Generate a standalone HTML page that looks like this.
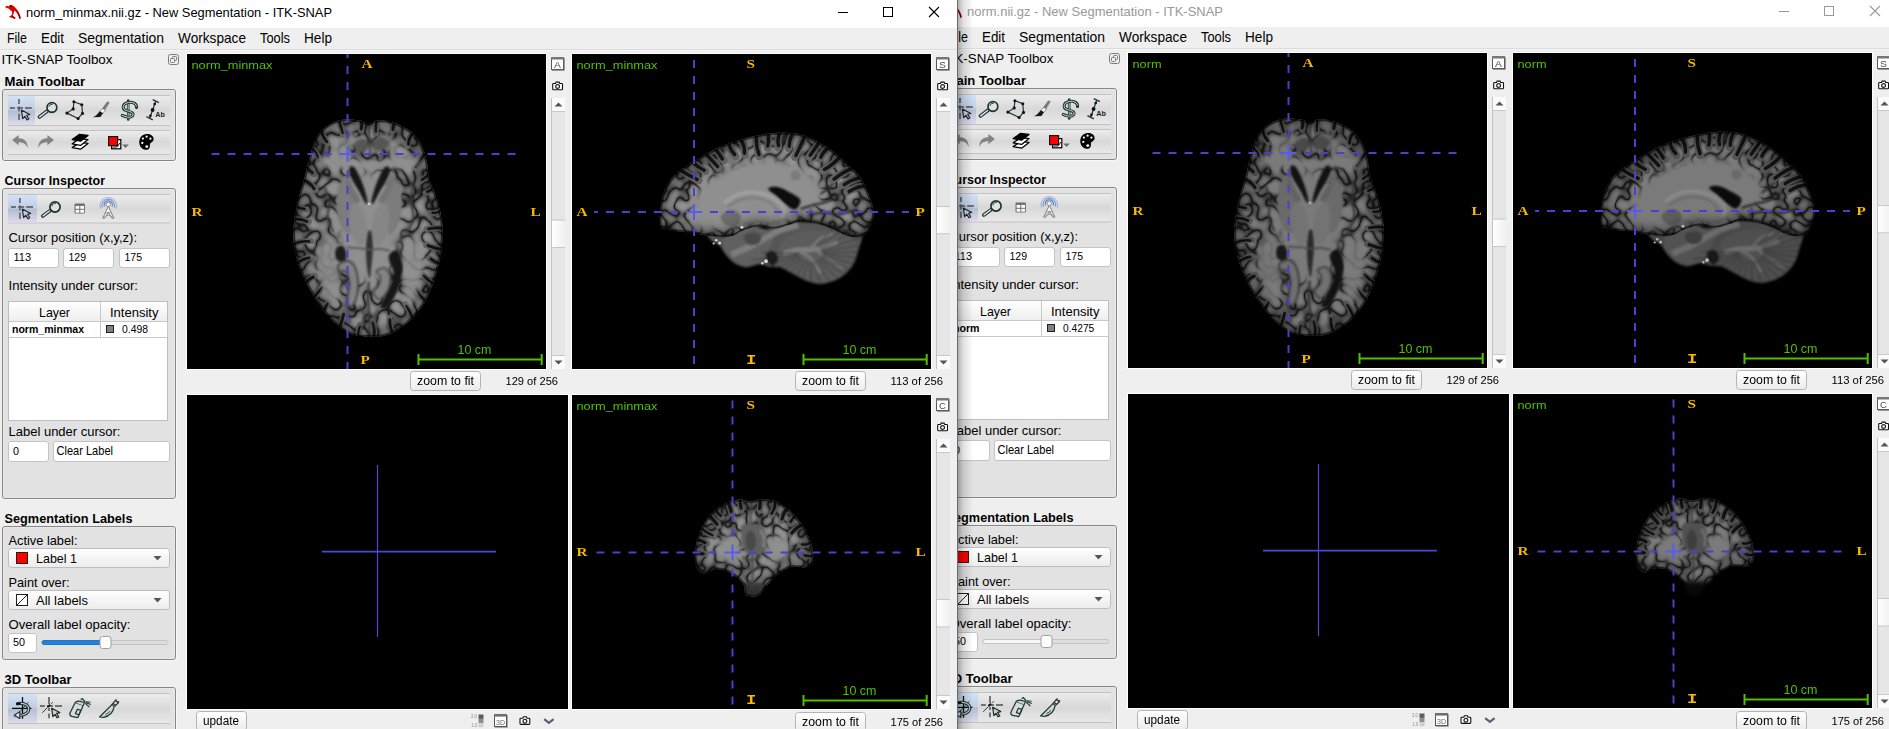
<!DOCTYPE html><html><head><meta charset="utf-8"><title>ITK-SNAP</title>
<style>html,body{margin:0;padding:0;background:#efefef;overflow:hidden}body{width:1889px;height:729px;position:relative}svg{position:absolute;display:block}text{white-space:pre}</style></head><body>
<svg width="932" height="729" viewBox="16 1 932 729" style="left:957px;top:0">
<defs>
<linearGradient id="tbR" x1="0" y1="0" x2="0" y2="1"><stop offset="0" stop-color="#ececec"/><stop offset=".5" stop-color="#d8d8d8"/><stop offset="1" stop-color="#e9e9e9"/></linearGradient>
<linearGradient id="selR" x1="0" y1="0" x2="0" y2="1"><stop offset="0" stop-color="#d3e2f7"/><stop offset=".47" stop-color="#c0cee3"/><stop offset=".53" stop-color="#b2bed2"/><stop offset="1" stop-color="#e0daee"/></linearGradient>
<linearGradient id="btnR" x1="0" y1="0" x2="0" y2="1"><stop offset="0" stop-color="#ffffff"/><stop offset="1" stop-color="#ececec"/></linearGradient>
<linearGradient id="hdrR" x1="0" y1="0" x2="0" y2="1"><stop offset="0" stop-color="#ffffff"/><stop offset="1" stop-color="#eeeeee"/></linearGradient>
<linearGradient id="thumbR" x1="0" y1="0" x2="1" y2="0"><stop offset="0" stop-color="#ffffff"/><stop offset="1" stop-color="#f0f0f0"/></linearGradient>
</defs><rect x="0" y="0" width="958" height="740" fill="#efefef" /><rect x="0" y="0" width="958" height="28" fill="#ffffff" /><g><linearGradient id="bird" x1="0" y1="0" x2="1" y2="1"><stop offset="0" stop-color="#e80000"/><stop offset=".6" stop-color="#d80000"/><stop offset="1" stop-color="#5a0000"/></linearGradient><path d="M5,7.2 C5.6,5.8 7.2,5.6 8.6,6.4 C9.6,5 11.6,4.6 12.8,5.6 C15.4,7 18,10.4 19.6,14 C20.4,15.8 20.8,17.4 20.8,18.8 L19.2,18.8 C18.8,16.2 17.4,13.2 15.4,11.2 L14.2,10.8 C14.2,12.6 13.4,14.2 12.8,15.6 L15.8,18 L14.8,18.9 L11.2,17.4 L9.3,17.3 L9.5,16.2 L11.6,15.3 C12.2,13.8 12.4,12.4 12,11.4 C10.8,10.8 9.6,10 9,8.8 C7.8,8 6.4,7.6 5,7.2Z" fill="url(#bird)"/><path d="M9.6,6.2 C10.6,5.2 12,5.4 12.6,6.4 C11.8,7.4 10.4,7.4 9.6,6.2Z" fill="#4a0505" opacity=".85"/></g><text x="26" y="17" textLength="256" lengthAdjust="spacingAndGlyphs" font-size="11.9" fill="#999" font-family='"Liberation Sans", sans-serif' >norm.nii.gz - New Segmentation - ITK-SNAP</text><line x1="838" y1="12.5" x2="848" y2="12.5" stroke="#999" stroke-width="1" /><rect x="883.5" y="7.5" width="9" height="9" fill="none" stroke="#999" stroke-width="1" /><path d="M929,7 L939,17 M939,7 L929,17" stroke="#999" stroke-width="1.1" fill="none"/><rect x="0" y="28" width="958" height="21.5" fill="#efefef" /><line x1="0" y1="49.5" x2="958" y2="49.5" stroke="#dcdcdc" stroke-width="1" /><line x1="0" y1="50.5" x2="958" y2="50.5" stroke="#f6f6f6" stroke-width="1" /><text x="7" y="43" textLength="20" lengthAdjust="spacingAndGlyphs" font-size="13.9" fill="#000" font-family='"Liberation Sans", sans-serif' >File</text><text x="41" y="43" textLength="23" lengthAdjust="spacingAndGlyphs" font-size="13.9" fill="#000" font-family='"Liberation Sans", sans-serif' >Edit</text><text x="78" y="43" textLength="86" lengthAdjust="spacingAndGlyphs" font-size="13.9" fill="#000" font-family='"Liberation Sans", sans-serif' >Segmentation</text><text x="178" y="43" textLength="68" lengthAdjust="spacingAndGlyphs" font-size="13.9" fill="#000" font-family='"Liberation Sans", sans-serif' >Workspace</text><text x="260" y="43" textLength="30" lengthAdjust="spacingAndGlyphs" font-size="13.9" fill="#000" font-family='"Liberation Sans", sans-serif' >Tools</text><text x="304" y="43" textLength="28" lengthAdjust="spacingAndGlyphs" font-size="13.9" fill="#000" font-family='"Liberation Sans", sans-serif' >Help</text><text x="1.5" y="63.7" textLength="111" lengthAdjust="spacingAndGlyphs" font-size="13.2" fill="#000" font-family='"Liberation Sans", sans-serif' >ITK-SNAP Toolbox</text><g transform="translate(168,54)" fill="none" stroke="#7d7d7d" stroke-width="1"><rect x=".5" y=".5" width="10" height="10" rx="2"/><rect x="4.5" y="2.5" width="4" height="4" rx=".8"/><rect x="2.5" y="4.5" width="4" height="4" rx=".8" fill="#f0f0f0"/></g><text x="4.5" y="86" textLength="80.5" lengthAdjust="spacingAndGlyphs" font-size="12.8" font-weight="700" fill="#000" font-family='"Liberation Sans", sans-serif' >Main Toolbar</text><rect x="3.5" y="90.5" width="173" height="71" fill="none" stroke="#f8f8f8" stroke-width="1" rx="2.5" /><rect x="2.5" y="89.5" width="173" height="71" fill="#e2e2e2" stroke="#878787" stroke-width="1" rx="2.5" /><rect x="3.5" y="90.5" width="171" height="69" fill="none" stroke="#e8e8e8" stroke-width="1" rx="1.8" /><rect x="8" y="96" width="162" height="29" fill="url(#tbR)" /><line x1="8" y1="95.5" x2="170" y2="95.5" stroke="#c2c2c2" stroke-width="1" /><line x1="8" y1="125.5" x2="170" y2="125.5" stroke="#c2c2c2" stroke-width="1" /><rect x="8" y="96" width="27" height="29" fill="url(#selR)" /><rect x="8" y="131" width="162" height="23" fill="url(#tbR)" /><line x1="8" y1="130.5" x2="170" y2="130.5" stroke="#c2c2c2" stroke-width="1" /><line x1="8" y1="154.5" x2="170" y2="154.5" stroke="#c2c2c2" stroke-width="1" /><path d="M10,108 H14.9 M17.2,108 H23.1 M25.0,108 H31.8" stroke="#6f7177" stroke-width="1.9" fill="none"/><path d="M19,99 V104.0 M19,106.6 V111.6 M19,113.7 V120" stroke="#6f7177" stroke-width="1.9" fill="none"/><circle cx="19" cy="108" r="1.3" fill="#5a5d66"/><path transform="translate(21.4,110.1) scale(1.0)" d="M0,0 L8.4,4.4 L5.2,5.2 L7.4,8.8 L5.6,9.8 L3.5,6.2 L1.3,8.6 Z" fill="#c9cfdc" stroke="#1d2628" stroke-width="1.15" stroke-linejoin="round"/><line x1="47.3" y1="111.0" x2="39.4" y2="117.0" stroke="#1f3434" stroke-width="3.6" stroke-linecap="round"/><line x1="46.6" y1="111.5" x2="39.6" y2="116.8" stroke="#dfe5e5" stroke-width="1.5" stroke-linecap="round"/><circle cx="51.9" cy="107.5" r="4.8999999999999995" fill="#dfe2e2" stroke="#1f3434" stroke-width="1.7"/><path d="M48.8,106.9 A3.4,3.4 0 0 1 52.7,104.3" stroke="#1f3434" stroke-width=".9" fill="none"/><path d="M47.7,110.0 A5.0,5.0 0 0 0 56.4,109.5" stroke="#1f3434" stroke-width="1.2" fill="none" opacity=".7"/><path d="M73.9,101.7 L81.8,104.7 L82.5,113.4 L78.1,118.5 L66.9,113.1 L73.2,108.9Z" fill="none" stroke="#1f3434" stroke-width="1.15"/><circle cx="73.9" cy="101.7" r="1.55" fill="#0c1414"/><circle cx="81.8" cy="104.7" r="1.55" fill="#0c1414"/><circle cx="82.5" cy="113.4" r="1.55" fill="#0c1414"/><circle cx="78.1" cy="118.5" r="1.55" fill="#0c1414"/><circle cx="66.9" cy="113.1" r="1.55" fill="#0c1414"/><circle cx="73.2" cy="108.9" r="1.55" fill="#0c1414"/><path d="M109.8,102.2 L107.2,101.4 L102.2,108.6 L105.4,110 Z" fill="#6e6e6e" opacity=".7"/><path d="M108.8,102.4 L103.6,109.4 M107.6,101.9 L102.8,108.8" stroke="#3c3c3c" stroke-width=".6" fill="none" opacity=".7"/><path d="M102.4,108.4 L105.6,110 L102.8,113.4 L99.8,111.6 Z" fill="#f2f2f2" stroke="#4a4a4a" stroke-width=".5"/><path d="M99.6,111.2 L103,113.2 L100.4,117 L92.8,117.3 C95.8,115.8 98,113.8 99.6,111.2Z" fill="#181818"/><path d="M128.2,100.6 V119.4" stroke="#1f3434" stroke-width="2.6" stroke-linecap="round"/><path d="M128.2,101.2 V118.8" stroke="#cfe0e0" stroke-width=".9" stroke-linecap="round"/><path d="M136.6,107.4 C136.8,103.4 132.6,101.6 128.2,102.6 C122.2,103.6 121.4,109.2 126.6,110.6 C131.6,111.8 134.4,113.2 132.4,116 C130.4,118 125.6,117.2 122.2,115.4" fill="none" stroke="#1f3434" stroke-width="3" stroke-linecap="round"/><path d="M136.6,107.4 C136.8,103.4 132.6,101.6 128.2,102.6 C122.2,103.6 121.4,109.2 126.6,110.6 C131.6,111.8 134.4,113.2 132.4,116 C130.4,118 125.6,117.2 122.2,115.4" fill="none" stroke="#cfe0e0" stroke-width="1" stroke-linecap="round"/><circle cx="136.4" cy="107.6" r="1.2" fill="#1f3434"/><path d="M155.7,101.2 L149.7,118.2" stroke="#1f3434" stroke-width="1.2"/><path d="M152.7,99.6 L158.9,102.6 M146.4,116.6 L152.8,119.8" stroke="#1f3434" stroke-width="1.3"/><circle cx="154.7" cy="104" r="1.3" fill="#0b1010"/><circle cx="152.6" cy="110" r="1.9" fill="#0b1010"/><circle cx="150.4" cy="115.8" r="1.4" fill="#0b1010"/><text x="155.2" y="117" textLength="9.6" lengthAdjust="spacingAndGlyphs" font-size="7.8" font-weight="700" fill="#1b2424" font-family='"Liberation Sans", sans-serif' >Ab</text><path d="M12.1,140 L18.6,134.9 L18.6,138.2 C24.4,138 27.8,141.6 27.8,148.6 C26.6,144.2 23.6,142.2 18.6,142.2 L18.6,145.2 Z" fill="#838383"/><path d="M12.1,140 L18.6,134.9 L18.6,138.2 C24.4,138 27.8,141.6 27.8,148.6 C26.6,144.2 23.6,142.2 18.6,142.2 L18.6,145.2 Z" fill="#838383" transform="translate(66,0) scale(-1,1)"/><path d="M72.2,147.6 L79.6,142.4 L88,143.4 L80.6,149.2 Z" fill="#fff" stroke="#000" stroke-width="1.3" stroke-linejoin="round"/><path d="M72.2,143.79999999999998 L79.6,138.6 L88,139.6 L80.6,145.39999999999998 Z" fill="#fff" stroke="#000" stroke-width="1.3" stroke-linejoin="round"/><path d="M72.2,139.6 L79.6,134.4 L88,135.4 L80.6,141.2 Z" fill="#000" stroke="#000" stroke-width="1.3" stroke-linejoin="round"/><rect x="111.6" y="139.6" width="9.2" height="9.2" fill="#fff" stroke="#000" stroke-width="1.2"/><path d="M112.4,147 H117 L120,143" stroke="#000" stroke-width=".9" fill="none"/><rect x="108.6" y="136.6" width="9" height="9" fill="#ff0000" stroke="#0a1a1a" stroke-width="1.2"/><path d="M122.2,144.6 H128.8 L125.5,148 Z" fill="#6a6a6a"/><path d="M146.4,134 C151,133.6 154,136.4 153.6,139.4 C153.2,142 150.2,142.4 149.8,144.4 C150.6,147.6 148.6,150.2 145.6,149.8 C141.2,149.4 138.6,145.2 139.4,140.6 C140,137 142.6,134.4 146.4,134 Z" fill="#000"/><circle cx="146.6" cy="136.7" r="1.15" fill="#f4f4f4"/><circle cx="150.4" cy="138.7" r="1.15" fill="#f4f4f4"/><circle cx="142.9" cy="138.6" r="1.15" fill="#f4f4f4"/><circle cx="142.3" cy="142.9" r="1.15" fill="#f4f4f4"/><circle cx="146.8" cy="146.6" r="1.45" fill="#f4f4f4"/><text x="4.5" y="185" textLength="100.5" lengthAdjust="spacingAndGlyphs" font-size="12.8" font-weight="700" fill="#000" font-family='"Liberation Sans", sans-serif' >Cursor Inspector</text><rect x="3.5" y="189.5" width="173" height="310" fill="none" stroke="#f8f8f8" stroke-width="1" rx="2.5" /><rect x="2.5" y="188.5" width="173" height="310" fill="#e2e2e2" stroke="#878787" stroke-width="1" rx="2.5" /><rect x="3.5" y="189.5" width="171" height="308" fill="none" stroke="#e8e8e8" stroke-width="1" rx="1.8" /><rect x="8" y="195" width="162" height="27.5" fill="url(#tbR)" /><line x1="8" y1="194.5" x2="170" y2="194.5" stroke="#c2c2c2" stroke-width="1" /><line x1="8" y1="223.0" x2="170" y2="223.0" stroke="#c2c2c2" stroke-width="1" /><rect x="8" y="195" width="29" height="27.5" fill="url(#selR)" /><path d="M11,207 H15.9 M18.3,207 H24.2 M26.2,207 H33" stroke="#6f7177" stroke-width="1.9" fill="none"/><path d="M19.9,198 V203.0 M19.9,205.6 V210.6 M19.9,212.7 V219" stroke="#6f7177" stroke-width="1.9" fill="none"/><circle cx="19.9" cy="207" r="1.3" fill="#5a5d66"/><path transform="translate(22.3,209) scale(1.0)" d="M0,0 L8.4,4.4 L5.2,5.2 L7.4,8.8 L5.6,9.8 L3.5,6.2 L1.3,8.6 Z" fill="#c9cfdc" stroke="#1d2628" stroke-width="1.15" stroke-linejoin="round"/><line x1="50.2" y1="210.6" x2="42.8" y2="216.0" stroke="#1f3434" stroke-width="3.6" stroke-linecap="round"/><line x1="49.5" y1="211.0" x2="43.0" y2="215.8" stroke="#dfe5e5" stroke-width="1.5" stroke-linecap="round"/><circle cx="55" cy="207" r="5.1" fill="#dfe2e2" stroke="#1f3434" stroke-width="1.7"/><path d="M51.8,206.4 A3.5,3.5 0 0 1 55.9,203.6" stroke="#1f3434" stroke-width=".9" fill="none"/><path d="M50.6,209.6 A5.2,5.2 0 0 0 59.6,209.0" stroke="#1f3434" stroke-width="1.2" fill="none" opacity=".7"/><rect x="74.5" y="203.6" width="10.4" height="10" rx="1" fill="#6e6e6e"/><rect x="75.6" y="205.9" width="3.7" height="2.9" fill="#fff"/><rect x="80.3" y="205.9" width="3.7" height="2.9" fill="#fff"/><rect x="75.6" y="209.8" width="3.7" height="2.9" fill="#fff"/><rect x="80.3" y="209.8" width="3.7" height="2.9" fill="#fff"/><path d="M104.4,206.5 A4.2,4.2 0 1 1 112.2,206.5" stroke="#3b6fc4" stroke-width="1.1" fill="none" opacity="0.9"/><path d="M102.5,207.5 A6.2,6.2 0 1 1 114.1,207.5" stroke="#3b6fc4" stroke-width="1.1" fill="none" opacity="0.65"/><path d="M100.6,208.5 A8.2,8.2 0 1 1 116.0,208.5" stroke="#3b6fc4" stroke-width="1.1" fill="none" opacity="0.35"/><path d="M108.3,206.4 L102.7,218.2 L104.7,218.2 L108.3,212.4 L111.89999999999999,218.2 L113.89999999999999,218.2 Z" fill="#fafafa" stroke="#777" stroke-width=".9"/><path d="M104.7,214 Q108.3,210.5 111.89999999999999,214 M103.5,217.4 Q108.3,213 113.1,217.4" stroke="#888" stroke-width=".8" fill="none"/><circle cx="108.3" cy="204.4" r="2.2" fill="#f2f2f2" stroke="#888" stroke-width=".9"/><text x="8.5" y="242" textLength="128.5" lengthAdjust="spacingAndGlyphs" font-size="13.2" fill="#000" font-family='"Liberation Sans", sans-serif' >Cursor position (x,y,z):</text><rect x="8.5" y="248.5" width="50" height="19" fill="#ffffff" stroke="#c4c4c4" stroke-width="1" rx="2.5" /><text x="13.5" y="261" textLength="17.5" lengthAdjust="spacingAndGlyphs" font-size="11.6" fill="#000" font-family='"Liberation Sans", sans-serif' >113</text><rect x="63.5" y="248.5" width="50" height="19" fill="#ffffff" stroke="#c4c4c4" stroke-width="1" rx="2.5" /><text x="68.5" y="261" textLength="17.5" lengthAdjust="spacingAndGlyphs" font-size="11.6" fill="#000" font-family='"Liberation Sans", sans-serif' >129</text><rect x="119.5" y="248.5" width="50" height="19" fill="#ffffff" stroke="#c4c4c4" stroke-width="1" rx="2.5" /><text x="124.5" y="261" textLength="17.5" lengthAdjust="spacingAndGlyphs" font-size="11.6" fill="#000" font-family='"Liberation Sans", sans-serif' >175</text><text x="8.5" y="290" textLength="129.5" lengthAdjust="spacingAndGlyphs" font-size="13.2" fill="#000" font-family='"Liberation Sans", sans-serif' >Intensity under cursor:</text><rect x="8.5" y="301.5" width="159" height="119" fill="#ffffff" stroke="#bdbdbd" stroke-width="1" /><rect x="9" y="302" width="158" height="19" fill="url(#hdrR)" /><line x1="9" y1="321.5" x2="167" y2="321.5" stroke="#c9c9c9" stroke-width="1" /><line x1="100.5" y1="302" x2="100.5" y2="337" stroke="#c9c9c9" stroke-width="1" /><line x1="9" y1="337.5" x2="167" y2="337.5" stroke="#c9c9c9" stroke-width="1" /><line x1="167.5" y1="322" x2="167.5" y2="337" stroke="#c9c9c9" stroke-width="1" /><text x="39" y="317" textLength="31" lengthAdjust="spacingAndGlyphs" font-size="13.2" fill="#000" font-family='"Liberation Sans", sans-serif' >Layer</text><text x="110" y="317" textLength="48.5" lengthAdjust="spacingAndGlyphs" font-size="13.2" fill="#000" font-family='"Liberation Sans", sans-serif' >Intensity</text><text x="12" y="333" textLength="26.5" lengthAdjust="spacingAndGlyphs" font-size="10.6" font-weight="700" fill="#000" font-family='"Liberation Sans", sans-serif' >norm</text><rect x="106.5" y="325.5" width="7" height="7" fill="#808080" stroke="#202020" stroke-width="1" /><text x="122" y="333" textLength="31.3" lengthAdjust="spacingAndGlyphs" font-size="10.8" fill="#000" font-family='"Liberation Sans", sans-serif' >0.4275</text><text x="8.5" y="436" textLength="112" lengthAdjust="spacingAndGlyphs" font-size="13.2" fill="#000" font-family='"Liberation Sans", sans-serif' >Label under cursor:</text><rect x="8.5" y="441.5" width="40" height="20" fill="#ffffff" stroke="#c4c4c4" stroke-width="1" rx="2.5" /><text x="13" y="455" textLength="6" lengthAdjust="spacingAndGlyphs" font-size="11.6" fill="#000" font-family='"Liberation Sans", sans-serif' >0</text><rect x="53.5" y="441.5" width="116" height="20" fill="#ffffff" stroke="#c4c4c4" stroke-width="1" rx="2.5" /><text x="56.5" y="455" textLength="56.5" lengthAdjust="spacingAndGlyphs" font-size="11.9" fill="#000" font-family='"Liberation Sans", sans-serif' >Clear Label</text><text x="4.5" y="523" textLength="128" lengthAdjust="spacingAndGlyphs" font-size="12.8" font-weight="700" fill="#000" font-family='"Liberation Sans", sans-serif' >Segmentation Labels</text><rect x="3.5" y="527.5" width="173" height="133" fill="none" stroke="#f8f8f8" stroke-width="1" rx="2.5" /><rect x="2.5" y="526.5" width="173" height="133" fill="#e2e2e2" stroke="#878787" stroke-width="1" rx="2.5" /><rect x="3.5" y="527.5" width="171" height="131" fill="none" stroke="#e8e8e8" stroke-width="1" rx="1.8" /><text x="8.5" y="545" textLength="69" lengthAdjust="spacingAndGlyphs" font-size="13.2" fill="#000" font-family='"Liberation Sans", sans-serif' >Active label:</text><rect x="8.5" y="548.5" width="161" height="19" fill="url(#btnR)" stroke="#bdbdbd" stroke-width="1" rx="3" /><path d="M153.5,556.0 L161.5,556.0 L157.5,560.5Z" fill="#555"/><rect x="16.5" y="552.5" width="11" height="11" fill="#ff0000" stroke="#202020" stroke-width="1" /><text x="36" y="563" textLength="41" lengthAdjust="spacingAndGlyphs" font-size="13.2" fill="#000" font-family='"Liberation Sans", sans-serif' >Label 1</text><text x="8.5" y="587" textLength="61" lengthAdjust="spacingAndGlyphs" font-size="13.2" fill="#000" font-family='"Liberation Sans", sans-serif' >Paint over:</text><rect x="8.5" y="590.5" width="161" height="19" fill="url(#btnR)" stroke="#bdbdbd" stroke-width="1" rx="3" /><path d="M153.5,598.0 L161.5,598.0 L157.5,602.5Z" fill="#555"/><rect x="16.5" y="594.5" width="11" height="11" fill="#ffffff" stroke="#202020" stroke-width="1" /><line x1="17" y1="605" x2="27" y2="595" stroke="#202020" stroke-width="1" /><text x="36" y="605" textLength="52" lengthAdjust="spacingAndGlyphs" font-size="13.2" fill="#000" font-family='"Liberation Sans", sans-serif' >All labels</text><text x="8.5" y="629" textLength="122" lengthAdjust="spacingAndGlyphs" font-size="13.2" fill="#000" font-family='"Liberation Sans", sans-serif' >Overall label opacity:</text><rect x="8.5" y="633.5" width="28" height="19" fill="#ffffff" stroke="#c4c4c4" stroke-width="1" rx="2.5" /><text x="13" y="646" textLength="12" lengthAdjust="spacingAndGlyphs" font-size="11.6" fill="#000" font-family='"Liberation Sans", sans-serif' >50</text><rect x="42" y="640.5" width="126" height="4" fill="#dedede" stroke="#bcbcbc" stroke-width="0.8" rx="2" /><rect x="42" y="640.5" width="62" height="4" fill="#f6f6f6" stroke="#c0c0c0" stroke-width="0.8" rx="2" /><rect x="100" y="636.5" width="11" height="12" fill="#fdfdfd" stroke="#a0a0a0" stroke-width="1" rx="2.5" /><text x="4.5" y="684" textLength="67" lengthAdjust="spacingAndGlyphs" font-size="12.8" font-weight="700" fill="#000" font-family='"Liberation Sans", sans-serif' >3D Toolbar</text><rect x="3.5" y="688.5" width="173" height="49" fill="none" stroke="#f8f8f8" stroke-width="1" rx="2.5" /><rect x="2.5" y="687.5" width="173" height="49" fill="#e2e2e2" stroke="#878787" stroke-width="1" rx="2.5" /><rect x="3.5" y="688.5" width="171" height="47" fill="none" stroke="#e8e8e8" stroke-width="1" rx="1.8" /><rect x="8" y="694" width="162" height="29" fill="url(#tbR)" /><line x1="8" y1="693.5" x2="170" y2="693.5" stroke="#c2c2c2" stroke-width="1" /><line x1="8" y1="723.5" x2="170" y2="723.5" stroke="#c2c2c2" stroke-width="1" /><rect x="8" y="694" width="29" height="29" fill="url(#selR)" /><path d="M22.5,697 V718.8 M12,708.3 H31.4" stroke="#0a0a0a" stroke-width="1.3" fill="none"/><path d="M28.6,702 L14.2,717.4" stroke="#222" stroke-width=".7"/><path d="M17.4,703.8 C24,702.2 29.4,705.4 28.6,710 C27.8,714 22.6,715.6 17.6,715.2" fill="none" stroke="#1f3434" stroke-width="3.1" stroke-linecap="round"/><path d="M17.4,703.8 C24,702.2 29.4,705.4 28.6,710 C27.8,714 22.6,715.6 17.6,715.2" fill="none" stroke="#b8cccc" stroke-width="1.1" stroke-linecap="round"/><path d="M16.4,702.8 h4.2 v2 h-4.2 z" fill="#0a0a0a"/><path d="M14.2,715.2 L19.8,711.6 L19.8,718.4 Z" fill="#d8e2e2" stroke="#1f3434" stroke-width="1.1" stroke-linejoin="round"/><path d="M49,697 V704 M49,708 V711 M49,713.4 V718.2" stroke="#6f7177" stroke-width="1.9"/><path d="M40,706 H44.8 M47,706 H53 M55,706 H62" stroke="#6f7177" stroke-width="1.9"/><path d="M52.8,702.2 L51.2,703.8 M47,708 L42.2,712.8" stroke="#111" stroke-width=".8"/><path d="M47.4,707.4 L50.2,704.6" stroke="#111" stroke-width="1.6"/><path transform="translate(51.6,708.2)" d="M0,0 L8.2,4.4 L5,5.2 L7.2,8.8 L5.4,9.6 L3.4,6.2 L1.3,8.4 Z" fill="#c9d6d6" stroke="#1d2628" stroke-width="1.15" stroke-linejoin="round"/><g fill="none" stroke="#1f3434" stroke-width="1.2" stroke-linejoin="round"><path d="M75.2,702.4 L83.2,705.4 L77.8,717.6 L71.6,716.4 Q69.2,715.4 70,713 Z" fill="#d6dcdc"/><path d="M75.2,702.4 Q79,699.6 84.4,702.8 L83.2,705.4" fill="#ccd4d4"/><path d="M80.6,699.6 L82.4,698.6 L84.6,701.2 L83.6,702.4" fill="#ccd4d4"/><path d="M77.4,709.2 L80.8,710.4 L79,714.8 L75.4,713.6 Z"/></g><path d="M85.4,701.8 L90.6,702.2 M85.4,702.6 L90.8,704.6 M85.2,703.4 L89.4,707" stroke="#1f3434" stroke-width="1.1"/><path d="M99.6,717 L112,704.6 L114.2,706.4 Q112.6,715.6 103.6,717.4 Z" fill="#cfd6d6" stroke="#1f3434" stroke-width="1.2" stroke-linejoin="round"/><path d="M111.6,704.8 L115.4,700.6 L118.4,702.8 L114.4,706.6 M114.6,701 L116.6,699.6 M117.2,702.6 L119,701.4 M113,703.4 L116,705.6" stroke="#1f3434" stroke-width="1.2" fill="none"/><path d="M105.6,714.4 Q108.6,713.6 109.8,711.2" stroke="#1f3434" stroke-width=".9" fill="none"/><clipPath id="cvRa"><rect x="187" y="54" width="359" height="315"/></clipPath><rect x="186" y="53" width="361" height="317" fill="#fff" /><rect x="187" y="54" width="359" height="315" fill="#000" /><g clip-path="url(#cvRa)"><g opacity="0.86"><clipPath id="axR"><path d="M368.8,124.0C366.3,124.0 364.1,121.3 359.9,120.6C355.7,119.8 349.0,118.8 343.8,119.6C338.5,120.4 332.9,122.4 328.3,125.4C323.7,128.4 319.5,132.2 316.3,137.7C313.2,143.2 311.5,151.5 309.5,158.3C307.4,165.2 306.3,171.5 304.3,178.9C302.3,186.3 299.3,194.3 297.4,202.9C295.6,211.5 293.6,221.8 293.3,230.4C293.0,238.9 293.9,246.4 295.7,254.4C297.6,262.4 300.6,270.4 304.3,278.4C308.0,286.4 312.9,295.0 318.0,302.4C323.2,309.8 329.5,317.6 335.2,323.0C340.9,328.4 346.6,332.4 352.3,334.6C358.1,336.9 363.8,336.6 369.5,336.7C375.2,336.8 380.3,337.3 386.6,335.0C392.9,332.7 400.9,328.4 407.2,323.0C413.5,317.6 419.8,309.8 424.4,302.4C428.9,295.0 431.8,287.0 434.7,278.4C437.5,269.8 440.2,259.5 441.5,250.9C442.8,242.4 443.1,234.9 442.6,226.9C442.0,218.9 440.3,210.9 438.1,202.9C435.9,194.9 431.5,186.3 429.5,178.9C427.5,171.5 427.8,164.6 426.1,158.3C424.4,152.0 422.4,146.0 419.2,141.2C416.1,136.3 412.1,132.4 407.2,129.2C402.4,125.9 395.5,123.0 390.1,121.6C384.6,120.2 378.2,120.5 374.6,120.9C371.1,121.3 371.3,124.1 368.8,124.0Z"/></clipPath><filter id="taxR" color-interpolation-filters="sRGB" filterUnits="userSpaceOnUse" x="281" y="108" width="173" height="241"><feTurbulence type="turbulence" baseFrequency="0.082" numOctaves="1" seed="7" result="t"/><feColorMatrix in="t" type="matrix" values="0 0 0 1 0  0 0 0 1 0  0 0 0 1 0  0 0 0 0 1" result="g0"/><feGaussianBlur in="g0" stdDeviation="0.75" result="g"/><feComponentTransfer in="g"><feFuncR type="table" tableValues="0.08 0.33 0.45 0.52 0.56 0.57 0.57 0.57 0.57 0.57 0.57"/><feFuncG type="table" tableValues="0.08 0.33 0.45 0.52 0.56 0.57 0.57 0.57 0.57 0.57 0.57"/><feFuncB type="table" tableValues="0.08 0.33 0.45 0.52 0.56 0.57 0.57 0.57 0.57 0.57 0.57"/></feComponentTransfer></filter><filter id="faxR" color-interpolation-filters="sRGB" filterUnits="userSpaceOnUse" x="281" y="108" width="173" height="241"><feGaussianBlur stdDeviation="0.6"/></filter><filter id="waxR" color-interpolation-filters="sRGB" filterUnits="userSpaceOnUse" x="281" y="108" width="173" height="241"><feGaussianBlur stdDeviation="5"/></filter><g filter="url(#faxR)"><g clip-path="url(#axR)"><rect x="281" y="108" width="173" height="241" filter="url(#taxR)"/><path d="M368.0,173.0C367.0,172.9 366.1,171.6 364.3,171.2C362.5,170.8 359.7,170.2 357.5,170.6C355.3,171.1 353.0,172.1 351.0,173.7C349.1,175.3 347.3,177.2 346.0,180.1C344.7,183.0 344.0,187.2 343.1,190.8C342.3,194.4 341.8,197.6 341.0,201.5C340.1,205.4 338.8,209.5 338.1,214.0C337.3,218.5 336.5,223.8 336.3,228.3C336.2,232.7 336.6,236.6 337.4,240.8C338.1,244.9 339.4,249.1 341.0,253.2C342.5,257.4 344.6,261.9 346.7,265.7C348.9,269.6 351.5,273.6 353.9,276.4C356.3,279.2 358.7,281.3 361.1,282.5C363.5,283.7 365.9,283.5 368.3,283.6C370.7,283.6 372.9,283.9 375.5,282.7C378.2,281.5 381.5,279.3 384.2,276.4C386.8,273.6 389.5,269.6 391.4,265.7C393.3,261.9 394.5,257.7 395.7,253.2C396.9,248.8 398.0,243.4 398.6,239.0C399.1,234.5 399.3,230.6 399.0,226.5C398.8,222.3 398.1,218.2 397.2,214.0C396.2,209.8 394.4,205.4 393.5,201.5C392.7,197.6 392.8,194.1 392.1,190.8C391.4,187.5 390.5,184.4 389.2,181.9C387.9,179.4 386.2,177.3 384.2,175.6C382.1,173.9 379.3,172.4 377.0,171.7C374.7,171.0 372.0,171.2 370.5,171.4C369.0,171.6 369.1,173.0 368.0,173.0Z" fill="#8f8f8f" opacity="1" filter="url(#waxR)"/><g><path d="M360.4,118.9 Q362.9,124.7 361.3,130.9" stroke="#626262" stroke-width="6.0" fill="none" stroke-linecap="round"/><path d="M339.0,119.2 Q340.8,127.1 343.2,134.9" stroke="#626262" stroke-width="6.0" fill="none" stroke-linecap="round"/><path d="M321.2,130.0 Q322.9,137.6 327.7,143.8" stroke="#626262" stroke-width="6.0" fill="none" stroke-linecap="round"/><path d="M311.2,147.9 Q316.9,152.4 319.2,159.3" stroke="#626262" stroke-width="6.0" fill="none" stroke-linecap="round"/><path d="M305.8,166.0 Q309.1,170.7 313.8,174.2" stroke="#626262" stroke-width="6.0" fill="none" stroke-linecap="round"/><path d="M302.1,179.7 Q310.6,182.6 315.7,190.0" stroke="#626262" stroke-width="6.0" fill="none" stroke-linecap="round"/><path d="M295.0,205.8 Q300.3,209.0 306.3,209.6" stroke="#626262" stroke-width="6.0" fill="none" stroke-linecap="round"/><path d="M292.9,219.5 Q301.2,218.4 308.8,221.8" stroke="#626262" stroke-width="6.0" fill="none" stroke-linecap="round"/><path d="M292.7,244.5 Q301.5,240.2 311.2,241.1" stroke="#626262" stroke-width="6.0" fill="none" stroke-linecap="round"/><path d="M296.9,263.5 Q303.1,258.6 310.9,257.0" stroke="#626262" stroke-width="6.0" fill="none" stroke-linecap="round"/><path d="M305.2,284.0 Q308.7,278.3 315.0,275.8" stroke="#626262" stroke-width="6.0" fill="none" stroke-linecap="round"/><path d="M313.4,298.0 Q318.4,291.8 323.5,285.7" stroke="#626262" stroke-width="6.0" fill="none" stroke-linecap="round"/><path d="M323.2,311.5 Q325.7,306.5 328.7,301.7" stroke="#626262" stroke-width="6.0" fill="none" stroke-linecap="round"/><path d="M339.5,328.2 Q342.1,320.3 344.3,312.2" stroke="#626262" stroke-width="6.0" fill="none" stroke-linecap="round"/><path d="M359.0,337.5 Q357.4,330.8 360.1,324.6" stroke="#626262" stroke-width="6.0" fill="none" stroke-linecap="round"/><path d="M373.5,338.3 Q375.4,329.3 372.7,320.6" stroke="#626262" stroke-width="6.0" fill="none" stroke-linecap="round"/><path d="M393.1,333.4 Q389.1,326.2 389.5,317.9" stroke="#626262" stroke-width="6.0" fill="none" stroke-linecap="round"/><path d="M413.0,319.0 Q409.8,311.2 405.5,304.0" stroke="#626262" stroke-width="6.0" fill="none" stroke-linecap="round"/><path d="M426.5,302.0 Q419.4,295.7 414.8,287.5" stroke="#626262" stroke-width="6.0" fill="none" stroke-linecap="round"/><path d="M434.1,284.5 Q427.6,279.8 421.7,274.2" stroke="#626262" stroke-width="6.0" fill="none" stroke-linecap="round"/><path d="M440.5,263.3 Q434.1,262.3 429.1,258.1" stroke="#626262" stroke-width="6.0" fill="none" stroke-linecap="round"/><path d="M443.5,249.6 Q434.5,248.4 426.0,245.1" stroke="#626262" stroke-width="6.0" fill="none" stroke-linecap="round"/><path d="M444.5,228.5 Q435.5,227.2 426.5,229.0" stroke="#626262" stroke-width="6.0" fill="none" stroke-linecap="round"/><path d="M441.4,210.1 Q436.7,214.3 430.4,213.1" stroke="#626262" stroke-width="6.0" fill="none" stroke-linecap="round"/><path d="M434.5,186.9 Q430.9,191.2 425.6,192.8" stroke="#626262" stroke-width="6.0" fill="none" stroke-linecap="round"/><path d="M430.1,172.1 Q426.5,177.7 420.7,181.0" stroke="#626262" stroke-width="6.0" fill="none" stroke-linecap="round"/><path d="M425.8,153.0 Q419.7,160.2 414.5,168.2" stroke="#626262" stroke-width="6.0" fill="none" stroke-linecap="round"/><path d="M413.7,133.0 Q408.1,138.4 407.6,146.1" stroke="#626262" stroke-width="6.0" fill="none" stroke-linecap="round"/><path d="M394.8,121.6 Q393.1,126.4 392.4,131.5" stroke="#626262" stroke-width="6.0" fill="none" stroke-linecap="round"/><path d="M376.8,119.0 Q375.4,126.2 375.8,133.6" stroke="#626262" stroke-width="6.0" fill="none" stroke-linecap="round"/><path d="M360.4,118.9 Q362.8,123.7 361.2,128.9" stroke="#161616" stroke-width="2.9" fill="none" stroke-linecap="round"/><path d="M339.0,119.2 Q340.6,126.2 342.7,132.9" stroke="#161616" stroke-width="2.4" fill="none" stroke-linecap="round"/><path d="M321.2,130.0 Q322.5,136.7 326.8,141.9" stroke="#161616" stroke-width="2.7" fill="none" stroke-linecap="round"/><path d="M311.2,147.9 Q316.4,151.6 318.1,157.7" stroke="#161616" stroke-width="2.1" fill="none" stroke-linecap="round"/><path d="M305.8,166.0 Q308.4,170.0 312.4,172.8" stroke="#161616" stroke-width="2.6" fill="none" stroke-linecap="round"/><path d="M302.1,179.7 Q309.8,182.0 314.1,188.8" stroke="#161616" stroke-width="2.9" fill="none" stroke-linecap="round"/><path d="M295.0,205.8 Q299.3,208.7 304.5,209.0" stroke="#161616" stroke-width="2.7" fill="none" stroke-linecap="round"/><path d="M292.9,219.5 Q300.2,218.3 306.8,221.5" stroke="#161616" stroke-width="2.9" fill="none" stroke-linecap="round"/><path d="M292.7,244.5 Q300.5,240.4 309.3,241.5" stroke="#161616" stroke-width="2.3" fill="none" stroke-linecap="round"/><path d="M296.9,263.5 Q302.2,259.0 309.1,257.9" stroke="#161616" stroke-width="2.9" fill="none" stroke-linecap="round"/><path d="M305.2,284.0 Q308.0,278.9 313.4,277.1" stroke="#161616" stroke-width="2.7" fill="none" stroke-linecap="round"/><path d="M313.4,298.0 Q317.8,292.6 322.2,287.2" stroke="#161616" stroke-width="2.4" fill="none" stroke-linecap="round"/><path d="M323.2,311.5 Q325.2,307.3 327.7,303.4" stroke="#161616" stroke-width="2.7" fill="none" stroke-linecap="round"/><path d="M339.5,328.2 Q341.8,321.3 343.7,314.2" stroke="#161616" stroke-width="2.9" fill="none" stroke-linecap="round"/><path d="M359.0,337.5 Q357.3,331.8 360.0,326.6" stroke="#161616" stroke-width="2.1" fill="none" stroke-linecap="round"/><path d="M373.5,338.3 Q375.4,330.3 372.8,322.6" stroke="#161616" stroke-width="2.8" fill="none" stroke-linecap="round"/><path d="M393.1,333.4 Q389.4,327.1 389.9,319.8" stroke="#161616" stroke-width="2.9" fill="none" stroke-linecap="round"/><path d="M413.0,319.0 Q410.3,312.1 406.4,305.8" stroke="#161616" stroke-width="2.4" fill="none" stroke-linecap="round"/><path d="M426.5,302.0 Q420.0,296.5 416.0,289.0" stroke="#161616" stroke-width="2.4" fill="none" stroke-linecap="round"/><path d="M434.1,284.5 Q428.3,280.4 423.2,275.5" stroke="#161616" stroke-width="2.5" fill="none" stroke-linecap="round"/><path d="M440.5,263.3 Q435.0,262.7 430.9,258.9" stroke="#161616" stroke-width="2.7" fill="none" stroke-linecap="round"/><path d="M443.5,249.6 Q435.5,248.6 428.0,245.6" stroke="#161616" stroke-width="2.9" fill="none" stroke-linecap="round"/><path d="M444.5,228.5 Q436.5,227.2 428.5,228.9" stroke="#161616" stroke-width="2.7" fill="none" stroke-linecap="round"/><path d="M441.4,210.1 Q437.6,214.0 432.3,212.6" stroke="#161616" stroke-width="2.2" fill="none" stroke-linecap="round"/><path d="M434.5,186.9 Q431.7,190.6 427.3,191.7" stroke="#161616" stroke-width="2.6" fill="none" stroke-linecap="round"/><path d="M430.1,172.1 Q427.2,177.0 422.1,179.6" stroke="#161616" stroke-width="2.7" fill="none" stroke-linecap="round"/><path d="M425.8,153.0 Q420.3,159.4 415.7,166.6" stroke="#161616" stroke-width="2.7" fill="none" stroke-linecap="round"/><path d="M413.7,133.0 Q408.5,137.5 408.5,144.3" stroke="#161616" stroke-width="2.9" fill="none" stroke-linecap="round"/><path d="M394.8,121.6 Q393.3,125.5 392.9,129.6" stroke="#161616" stroke-width="2.9" fill="none" stroke-linecap="round"/><path d="M376.8,119.0 Q375.5,125.2 375.9,131.6" stroke="#161616" stroke-width="2.2" fill="none" stroke-linecap="round"/></g><filter id="axsR" x="-30%" y="-30%" width="160%" height="160%"><feGaussianBlur stdDeviation="1.2"/></filter><filter id="axs2R" x="-30%" y="-30%" width="160%" height="160%"><feGaussianBlur stdDeviation="2.2"/></filter><g filter="url(#axs2R)" fill="#8f8f8f"><path d="M321.5,156.6C325.5,155.1 340.9,156.7 348.9,157.6C356.9,158.6 362.6,162.3 369.5,162.4C376.3,162.6 382.1,159.3 390.1,158.3C398.1,157.3 413.5,155.2 417.5,156.6C421.5,158.0 418.7,164.9 414.1,166.9C409.5,168.9 397.5,168.0 390.1,168.6C382.6,169.2 376.3,170.3 369.5,170.3C362.6,170.3 356.3,169.2 348.9,168.6C341.5,168.0 329.5,168.9 324.9,166.9C320.3,164.9 317.5,158.1 321.5,156.6Z"/><path d="M330.0,151.5C330.0,148.3 340.0,144.3 343.8,141.2C347.5,138.0 350.0,133.2 352.3,132.6C354.6,132.0 357.8,134.6 357.5,137.7C357.2,140.9 352.9,147.7 350.6,151.5C348.3,155.2 347.2,160.0 343.8,160.0C340.3,160.0 330.0,154.6 330.0,151.5Z" opacity=".8"/><path d="M407.2,151.5C407.2,148.3 398.6,144.3 395.2,141.2C391.8,138.0 388.9,133.2 386.6,132.6C384.4,132.0 381.2,134.6 381.5,137.7C381.8,140.9 386.1,147.7 388.4,151.5C390.6,155.2 392.1,160.0 395.2,160.0C398.4,160.0 407.2,154.6 407.2,151.5Z" opacity=".8"/><path d="M318.0,247.5C320.6,242.9 328.3,234.9 331.7,237.2C335.2,239.5 337.2,252.1 338.6,261.2C340.0,270.4 341.5,284.7 340.3,292.1C339.2,299.5 334.9,307.0 331.7,305.8C328.6,304.7 324.0,292.1 321.5,285.2C318.9,278.4 316.9,271.0 316.3,264.7C315.7,258.4 315.5,252.1 318.0,247.5Z" opacity=".85"/><path d="M420.9,247.5C418.2,242.9 410.4,234.9 407.2,237.2C404.1,239.5 402.6,252.1 402.1,261.2C401.5,270.4 402.4,284.7 403.8,292.1C405.2,299.5 408.1,307.0 410.7,305.8C413.2,304.7 417.1,292.1 419.2,285.2C421.4,278.4 423.4,271.0 423.7,264.7C424.0,258.4 423.7,252.1 420.9,247.5Z" opacity=".85"/></g><g filter="url(#axsR)"><path d="M338.6,185.8C340.3,181.2 344.6,177.8 347.2,178.9C349.8,180.0 352.6,186.9 354.0,192.6C355.5,198.3 356.3,206.3 355.8,213.2C355.2,220.1 352.9,231.5 350.6,233.8C348.3,236.1 344.3,231.5 342.0,226.9C339.8,222.4 337.5,213.2 336.9,206.3C336.3,199.5 336.9,190.3 338.6,185.8Z" fill="#7c7c7c"/><path d="M399.7,185.8C398.0,181.3 394.2,178.4 391.8,179.6C389.3,180.7 386.4,187.0 384.9,192.6C383.5,198.2 382.6,206.3 383.2,213.2C383.8,220.1 386.1,231.5 388.4,233.8C390.6,236.1 394.6,231.5 396.9,226.9C399.2,222.4 401.6,213.2 402.1,206.3C402.5,199.5 401.4,190.2 399.7,185.8Z" fill="#7c7c7c"/><path d="M354.0,202.9C356.5,202.3 362.2,208.1 364.3,213.2C366.5,218.4 367.7,228.4 367.1,233.8C366.5,239.2 363.4,245.5 360.9,245.8C358.5,246.1 354.2,240.4 352.3,235.5C350.4,230.6 349.3,222.1 349.6,216.6C349.9,211.2 351.6,203.5 354.0,202.9Z" fill="#868686"/><path d="M384.9,202.9C382.5,202.3 376.8,208.1 374.6,213.2C372.5,218.4 371.3,228.4 371.9,233.8C372.5,239.2 375.6,245.5 378.1,245.8C380.5,246.1 384.8,240.4 386.6,235.5C388.5,230.6 389.7,222.1 389.4,216.6C389.1,211.2 387.4,203.5 384.9,202.9Z" fill="#868686"/><path d="M348.2,173.8C349.4,174.9 350.4,181.5 352.3,185.8C354.3,190.1 359.3,196.6 359.9,199.5C360.5,202.3 357.7,204.3 355.8,202.9C353.8,201.5 349.9,194.9 348.2,190.9C346.5,186.9 345.5,181.8 345.5,178.9C345.5,176.0 347.1,172.6 348.2,173.8Z" fill="#737373"/><path d="M390.8,173.8C389.6,174.9 388.6,181.5 386.6,185.8C384.7,190.1 379.7,196.6 379.1,199.5C378.5,202.3 381.3,204.3 383.2,202.9C385.2,201.5 389.0,194.9 390.8,190.9C392.5,186.9 393.5,181.8 393.5,178.9C393.5,176.0 391.9,172.6 390.8,173.8Z" fill="#737373"/><path d="M324.9,187.5C325.6,190.1 328.5,197.8 329.0,202.9C329.5,208.1 326.9,213.5 327.6,218.4C328.4,223.2 332.5,229.8 333.5,232.1" stroke="#3c3c3c" stroke-width="2.2" fill="none"/><path d="M414.1,182.3C413.6,185.2 411.5,193.5 411.3,199.5C411.2,205.5 414.2,212.9 413.4,218.4C412.6,223.8 407.7,229.8 406.5,232.1" stroke="#3c3c3c" stroke-width="2.2" fill="none"/><path d="M369.5,121.3C369.4,124.0 368.7,132.7 368.8,137.7C368.9,142.8 370.1,147.9 370.2,151.5C370.3,155.0 369.6,157.7 369.5,159.0" stroke="#444" stroke-width="2.2" fill="none"/><path d="M354.0,143.9C354.8,141.7 359.7,138.6 361.9,138.4C364.2,138.3 367.2,140.7 367.8,142.9C368.3,145.1 367.1,150.0 365.4,151.5C363.7,152.9 359.4,152.7 357.5,151.5C355.6,150.2 353.3,146.1 354.0,143.9Z" fill="#565656"/><path d="M372.2,140.5C373.5,138.5 378.6,136.7 381.5,137.0C384.4,137.4 389.0,140.4 389.4,142.5C389.8,144.7 386.5,149.1 383.9,150.1C381.3,151.1 375.9,150.3 373.9,148.7C372.0,147.1 371.0,142.4 372.2,140.5Z" fill="#565656"/><path d="M368.8,281.8C368.6,284.7 367.7,292.7 367.8,299.0C367.9,305.3 369.3,313.4 369.5,319.6C369.7,325.7 368.9,333.3 368.8,336.0" stroke="#3a3a3a" stroke-width="2.4" fill="none"/><path d="M349.9,167.2C350.8,166.3 353.1,166.3 354.7,167.9C356.4,169.6 358.2,173.5 359.9,177.2C361.5,180.8 363.4,185.8 364.7,189.9C365.9,193.9 367.3,199.4 367.4,201.5C367.5,203.7 366.6,204.4 365.4,202.9C364.1,201.4 361.8,196.1 359.9,192.6C357.9,189.2 355.4,185.5 353.7,182.3C352.0,179.2 350.2,176.3 349.6,173.8C349.0,171.2 349.1,168.2 349.9,167.2Z" fill="#151515"/><path d="M389.0,167.2C388.2,166.3 385.9,166.3 384.2,167.9C382.6,169.6 380.7,173.5 379.1,177.2C377.4,180.8 375.5,185.8 374.3,189.9C373.0,193.9 371.7,199.4 371.5,201.5C371.4,203.7 372.3,204.4 373.6,202.9C374.9,201.4 377.1,196.1 379.1,192.6C381.0,189.2 383.6,185.5 385.3,182.3C387.0,179.2 388.8,176.3 389.4,173.8C390.0,171.2 389.9,168.2 389.0,167.2Z" fill="#151515"/><path d="M367.8,232.1C368.7,229.5 370.7,229.5 371.5,232.1C372.4,234.6 372.9,242.1 372.9,247.5C372.9,252.9 372.1,259.5 371.5,264.7C371.0,269.8 370.3,278.4 369.5,278.4C368.7,278.4 367.3,269.8 366.7,264.7C366.2,259.5 365.9,252.9 366.1,247.5C366.2,242.1 366.9,234.6 367.8,232.1Z" fill="#303030"/><path d="M346.2,247.5C348.3,247.6 355.3,247.9 359.2,248.2C363.1,248.5 366.1,249.5 369.5,249.6C372.9,249.7 376.3,248.7 379.8,248.9C383.2,249.1 388.4,250.6 390.1,250.9" stroke="#555" stroke-width="1.8" fill="none"/><path d="M336.9,247.5C338.2,246.1 341.2,245.3 342.7,246.1C344.3,247.0 345.8,250.3 346.2,252.7C346.5,255.1 346.0,259.1 344.8,260.5C343.5,262.0 340.2,262.3 338.6,261.2C337.0,260.2 335.5,256.7 335.2,254.4C334.9,252.1 335.6,248.9 336.9,247.5Z" fill="#1c1c1c"/><path d="M338.6,264.7C340.1,263.0 345.9,260.1 348.9,261.2C351.9,262.4 355.0,266.4 356.4,271.5C357.9,276.7 358.2,286.4 357.5,292.1C356.8,297.8 354.2,304.1 352.3,305.8C350.4,307.5 346.6,305.8 346.2,302.4C345.7,299.0 349.6,290.4 349.6,285.2C349.6,280.1 347.8,273.8 346.2,271.5C344.6,269.2 341.2,272.7 340.0,271.5C338.7,270.4 337.1,266.4 338.6,264.7Z" fill="#828282" stroke="#444" stroke-width="2"/><path d="M343.8,278.4C344.5,280.7 347.6,287.0 348.2,292.1C348.8,297.3 346.8,304.1 347.2,309.3C347.6,314.4 350.0,320.7 350.6,323.0" stroke="#4a4a4a" stroke-width="1.8" fill="none"/><path d="M390.1,253.7C391.4,252.0 395.7,249.7 397.6,250.9C399.6,252.2 401.2,256.7 401.7,261.2C402.3,265.8 402.1,272.7 401.0,278.4C400.0,284.1 397.6,290.7 395.2,295.5C392.8,300.4 389.1,305.7 386.6,307.5C384.2,309.4 380.7,308.2 380.5,306.5C380.2,304.8 383.2,300.8 384.9,297.3C386.6,293.7 389.3,289.5 390.8,285.2C392.2,281.0 393.7,275.5 393.5,271.5C393.3,267.5 390.0,264.2 389.4,261.2C388.8,258.3 388.7,255.4 390.1,253.7Z" fill="#121212"/><path d="M376.3,271.5C377.1,270.1 382.6,267.0 384.9,268.1C387.2,269.2 389.8,274.4 390.1,278.4C390.4,282.4 388.5,288.7 386.6,292.1C384.8,295.5 381.3,299.0 379.1,299.0C376.9,299.0 373.6,294.4 373.6,292.1C373.6,289.8 377.9,287.8 379.1,285.2C380.2,282.7 380.9,279.0 380.5,276.7C380.0,274.4 375.6,273.0 376.3,271.5Z" fill="#848484" stroke="#484848" stroke-width="1.8"/><path d="M359.9,305.8C360.6,307.5 364.0,312.4 364.3,316.1C364.7,319.8 362.3,326.1 361.9,328.1" stroke="#404040" stroke-width="1.8" fill="none"/><path d="M378.1,309.3C377.5,311.0 374.8,316.1 374.6,319.6C374.5,323.0 376.6,328.1 377.0,329.8" stroke="#404040" stroke-width="1.8" fill="none"/></g><circle cx="369.1" cy="203.9" r="1.4" fill="#c8c8c8"/><path d="M368.8,124.0C366.3,124.0 364.1,121.3 359.9,120.6C355.7,119.8 349.0,118.8 343.8,119.6C338.5,120.4 332.9,122.4 328.3,125.4C323.7,128.4 319.5,132.2 316.3,137.7C313.2,143.2 311.5,151.5 309.5,158.3C307.4,165.2 306.3,171.5 304.3,178.9C302.3,186.3 299.3,194.3 297.4,202.9C295.6,211.5 293.6,221.8 293.3,230.4C293.0,238.9 293.9,246.4 295.7,254.4C297.6,262.4 300.6,270.4 304.3,278.4C308.0,286.4 312.9,295.0 318.0,302.4C323.2,309.8 329.5,317.6 335.2,323.0C340.9,328.4 346.6,332.4 352.3,334.6C358.1,336.9 363.8,336.6 369.5,336.7C375.2,336.8 380.3,337.3 386.6,335.0C392.9,332.7 400.9,328.4 407.2,323.0C413.5,317.6 419.8,309.8 424.4,302.4C428.9,295.0 431.8,287.0 434.7,278.4C437.5,269.8 440.2,259.5 441.5,250.9C442.8,242.4 443.1,234.9 442.6,226.9C442.0,218.9 440.3,210.9 438.1,202.9C435.9,194.9 431.5,186.3 429.5,178.9C427.5,171.5 427.8,164.6 426.1,158.3C424.4,152.0 422.4,146.0 419.2,141.2C416.1,136.3 412.1,132.4 407.2,129.2C402.4,125.9 395.5,123.0 390.1,121.6C384.6,120.2 378.2,120.5 374.6,120.9C371.1,121.3 371.3,124.1 368.8,124.0Z" fill="none" stroke="#000" stroke-opacity="0.3" stroke-width="16" filter="url(#waxR)"/><path d="M368.8,124.0C366.3,124.0 364.1,121.3 359.9,120.6C355.7,119.8 349.0,118.8 343.8,119.6C338.5,120.4 332.9,122.4 328.3,125.4C323.7,128.4 319.5,132.2 316.3,137.7C313.2,143.2 311.5,151.5 309.5,158.3C307.4,165.2 306.3,171.5 304.3,178.9C302.3,186.3 299.3,194.3 297.4,202.9C295.6,211.5 293.6,221.8 293.3,230.4C293.0,238.9 293.9,246.4 295.7,254.4C297.6,262.4 300.6,270.4 304.3,278.4C308.0,286.4 312.9,295.0 318.0,302.4C323.2,309.8 329.5,317.6 335.2,323.0C340.9,328.4 346.6,332.4 352.3,334.6C358.1,336.9 363.8,336.6 369.5,336.7C375.2,336.8 380.3,337.3 386.6,335.0C392.9,332.7 400.9,328.4 407.2,323.0C413.5,317.6 419.8,309.8 424.4,302.4C428.9,295.0 431.8,287.0 434.7,278.4C437.5,269.8 440.2,259.5 441.5,250.9C442.8,242.4 443.1,234.9 442.6,226.9C442.0,218.9 440.3,210.9 438.1,202.9C435.9,194.9 431.5,186.3 429.5,178.9C427.5,171.5 427.8,164.6 426.1,158.3C424.4,152.0 422.4,146.0 419.2,141.2C416.1,136.3 412.1,132.4 407.2,129.2C402.4,125.9 395.5,123.0 390.1,121.6C384.6,120.2 378.2,120.5 374.6,120.9C371.1,121.3 371.3,124.1 368.8,124.0Z" fill="none" stroke="#000" stroke-opacity=".6" stroke-width="3.5"/></g></g></g><line x1="339.5" y1="154" x2="211" y2="154" stroke="#4343cc" stroke-width="2" stroke-dasharray="8 8" stroke-dashoffset="8"/><line x1="355.5" y1="154" x2="516" y2="154" stroke="#4343cc" stroke-width="2" stroke-dasharray="8 8" stroke-dashoffset="8"/><line x1="347.5" y1="146" x2="347.5" y2="34" stroke="#4343cc" stroke-width="2" stroke-dasharray="8 8" stroke-dashoffset="8"/><line x1="347.5" y1="162" x2="347.5" y2="389" stroke="#4343cc" stroke-width="2" stroke-dasharray="8 8" stroke-dashoffset="8"/><path d="M339.5,154 H355.5 M347.5,146 V162" stroke="#5a5aee" stroke-width="2" fill="none"/><text x="191.5" y="68.7" textLength="29" lengthAdjust="spacingAndGlyphs" font-size="11.7" fill="#50c000" font-family='"Liberation Sans", sans-serif' >norm</text><text x="361.40000000000003" y="68" textLength="11.0" lengthAdjust="spacingAndGlyphs" font-size="12.7" font-weight="700" fill="#f7b900" font-family='"Liberation Serif", serif' >A</text><text x="191.4" y="216" textLength="11.0" lengthAdjust="spacingAndGlyphs" font-size="12.7" font-weight="700" fill="#f7b900" font-family='"Liberation Serif", serif' >R</text><text x="530.4" y="216" textLength="10.2" lengthAdjust="spacingAndGlyphs" font-size="12.7" font-weight="700" fill="#f7b900" font-family='"Liberation Serif", serif' >L</text><text x="360.40000000000003" y="364" textLength="9.3" lengthAdjust="spacingAndGlyphs" font-size="12.7" font-weight="700" fill="#f7b900" font-family='"Liberation Serif", serif' >P</text><line x1="418.5" y1="359.5" x2="541.7" y2="359.5" stroke="#50c000" stroke-width="2" /><line x1="418.5" y1="354.0" x2="418.5" y2="365.0" stroke="#50c000" stroke-width="2" /><line x1="541.7" y1="354.0" x2="541.7" y2="365.0" stroke="#50c000" stroke-width="2" /><text x="457.5" y="353.5" textLength="34" lengthAdjust="spacingAndGlyphs" font-size="12" fill="#50c000" font-family='"Liberation Sans", sans-serif' >10 cm</text></g><g transform="translate(551,57)"><rect x=".5" y=".5" width="12" height="12" fill="#fff" stroke="#5a5a5a"/><rect x="0" y="0" width="13" height="2.5" fill="#777"/><path d="M13.5,1 V13.5 H1" stroke="#9a9a9a" fill="none"/><text x="3.1" y="11.1" textLength="6.9" lengthAdjust="spacingAndGlyphs" font-size="9.8" fill="#4c4c4c" font-family='"Liberation Sans", sans-serif' >A</text></g><g transform="translate(552.5,81.5)"><path d="M1,2 H3 L3.6,0.6 H6.6 L7.2,2 H9.2 Q10,2 10,2.8 V7.4 Q10,8.2 9.2,8.2 H1 Q.2,8.2 .2,7.4 V2.8 Q.2,2 1,2Z" fill="#fff" stroke="#111" stroke-width="1.1"/><circle cx="5.1" cy="5" r="1.9" fill="#fff" stroke="#222" stroke-width="1.2"/></g><rect x="551" y="98" width="14" height="271" fill="#e6e6e6" /><line x1="551.5" y1="98" x2="551.5" y2="369" stroke="#c3c3c3" stroke-width="1" /><rect x="552" y="98" width="13" height="13" fill="#fbfbfb" /><line x1="552" y1="111.5" x2="565" y2="111.5" stroke="#c9c9c9" stroke-width="1" /><path d="M554.5,106.5 L562.5,106.5 L558.5,102.5Z" fill="#555"/><rect x="552" y="356" width="13" height="13" fill="#fbfbfb" /><line x1="552" y1="355.5" x2="565" y2="355.5" stroke="#c9c9c9" stroke-width="1" /><path d="M554.5,360.5 L562.5,360.5 L558.5,364.5Z" fill="#555"/><rect x="552" y="220.5" width="13" height="26.5" fill="url(#thumbR)" /><line x1="552" y1="220.0" x2="565" y2="220.0" stroke="#c9c9c9" stroke-width="1" /><line x1="552" y1="247.5" x2="565" y2="247.5" stroke="#c9c9c9" stroke-width="1" /><rect x="410.5" y="371.5" width="70" height="19" fill="url(#btnR)" stroke="#b4b4b4" stroke-width="1" rx="3" /><text x="417" y="385" textLength="57" lengthAdjust="spacingAndGlyphs" font-size="12.6" fill="#000" font-family='"Liberation Sans", sans-serif' >zoom to fit</text><text x="505.5" y="385" textLength="52.5" lengthAdjust="spacingAndGlyphs" font-size="11.8" fill="#000" font-family='"Liberation Sans", sans-serif' >129 of 256</text><clipPath id="cvRs"><rect x="572" y="54" width="359" height="315"/></clipPath><rect x="571" y="53" width="361" height="317" fill="#fff" /><rect x="572" y="54" width="359" height="315" fill="#000" /><g clip-path="url(#cvRs)"><g opacity="0.86"><clipPath id="sgcR"><path d="M706.8,234.1C708.8,233.2 718.7,237.0 724.1,236.0C729.4,235.1 734.0,230.5 738.9,228.6C743.8,226.8 749.2,224.9 753.7,224.9C758.2,224.9 761.1,228.8 766.0,228.6C771.0,228.4 778.0,224.9 783.3,223.7C788.7,222.5 792.0,221.3 798.1,221.2C804.3,221.2 813.8,221.8 820.4,223.2C827.0,224.7 831.9,227.7 837.7,229.9C843.4,232.0 850.7,235.1 854.9,236.0C859.1,237.0 862.2,233.1 862.8,235.6C863.5,238.0 860.3,245.8 858.6,250.9C857.0,255.9 856.0,261.2 853.0,265.7C850.0,270.2 845.6,274.9 840.6,278.0C835.6,281.1 828.3,283.5 822.8,284.2C817.4,284.9 813.0,283.6 808.0,282.0C803.1,280.4 797.7,276.9 793.2,274.6C788.7,272.3 785.0,269.4 780.9,268.1C776.7,266.9 772.2,267.7 768.5,267.2C764.8,266.6 762.3,264.6 758.6,264.7C754.9,264.8 750.4,267.9 746.3,267.7C742.2,267.4 737.7,265.6 734.0,263.2C730.2,260.8 726.5,256.2 724.1,253.3C721.6,250.5 721.2,247.9 719.1,245.9C717.1,244.0 713.8,243.5 711.7,241.5C709.7,239.5 704.7,235.0 706.8,234.1Z"/></clipPath><filter id="fsgcR"><feGaussianBlur stdDeviation=".8"/></filter><g filter="url(#fsgcR)"><g clip-path="url(#sgcR)"><path d="M706.8,234.1C708.8,233.2 718.7,237.0 724.1,236.0C729.4,235.1 734.0,230.5 738.9,228.6C743.8,226.8 749.2,224.9 753.7,224.9C758.2,224.9 761.1,228.8 766.0,228.6C771.0,228.4 778.0,224.9 783.3,223.7C788.7,222.5 792.0,221.3 798.1,221.2C804.3,221.2 813.8,221.8 820.4,223.2C827.0,224.7 831.9,227.7 837.7,229.9C843.4,232.0 850.7,235.1 854.9,236.0C859.1,237.0 862.2,233.1 862.8,235.6C863.5,238.0 860.3,245.8 858.6,250.9C857.0,255.9 856.0,261.2 853.0,265.7C850.0,270.2 845.6,274.9 840.6,278.0C835.6,281.1 828.3,283.5 822.8,284.2C817.4,284.9 813.0,283.6 808.0,282.0C803.1,280.4 797.7,276.9 793.2,274.6C788.7,272.3 785.0,269.4 780.9,268.1C776.7,266.9 772.2,267.7 768.5,267.2C764.8,266.6 762.3,264.6 758.6,264.7C754.9,264.8 750.4,267.9 746.3,267.7C742.2,267.4 737.7,265.6 734.0,263.2C730.2,260.8 726.5,256.2 724.1,253.3C721.6,250.5 721.2,247.9 719.1,245.9C717.1,244.0 713.8,243.5 711.7,241.5C709.7,239.5 704.7,235.0 706.8,234.1Z" fill="#565656"/><path d="M724.1,236.0C725.9,231.9 731.5,230.3 736.4,228.6C741.4,227.0 748.8,226.0 753.7,226.2C758.6,226.4 762.8,227.8 766.0,229.9C769.3,231.9 773.5,234.6 773.5,238.5C773.5,242.4 768.5,249.0 766.0,253.3C763.6,257.7 761.9,262.1 758.6,264.4C755.3,266.8 750.4,267.9 746.3,267.7C742.2,267.4 737.4,265.6 734.0,263.2C730.5,260.8 727.0,257.9 725.3,253.3C723.7,248.8 722.2,240.2 724.1,236.0Z" fill="#606060"/><path d="M731.5,254.6C735.2,252.9 745.9,248.6 753.7,244.7C761.5,240.8 771.0,234.4 778.4,231.1C785.8,227.8 794.9,226.0 798.1,224.9" stroke="#7e7e7e" stroke-width="6" fill="none"/><path d="M743.8,236.0C744.7,234.0 750.8,232.3 753.7,232.3C756.6,232.3 760.3,234.2 761.1,236.0C761.9,237.9 760.7,242.0 758.6,243.5C756.6,244.9 751.2,245.9 748.8,244.7C746.3,243.5 743.0,238.1 743.8,236.0Z" fill="#484848"/><path d="M778.4,248.4C779.6,243.0 783.3,239.0 788.3,236.0C793.2,233.1 801.0,231.4 808.0,230.6C815.0,229.9 823.3,230.3 830.2,231.6C837.2,232.9 845.3,235.3 850.0,238.5C854.7,241.7 858.1,246.3 858.6,250.9C859.1,255.4 856.0,261.2 853.0,265.7C850.0,270.2 845.6,274.9 840.6,278.0C835.6,281.1 828.3,283.5 822.8,284.2C817.4,284.9 813.0,283.6 808.0,282.0C803.1,280.4 797.7,276.9 793.2,274.6C788.7,272.3 783.3,272.5 780.9,268.1C778.4,263.8 777.2,253.7 778.4,248.4Z" fill="#5c5c5c"/><path d="M783.3,253.3C785.8,252.8 792.4,250.9 798.1,250.1C803.9,249.4 811.3,250.3 817.9,248.9C824.5,247.4 834.4,242.7 837.7,241.5" stroke="#808080" stroke-width="5" fill="none"/><path d="M798.1,250.4C800.2,251.7 806.8,254.5 810.5,258.3C814.2,262.1 818.7,270.6 820.4,273.1" stroke="#7a7a7a" stroke-width="3" fill="none"/><path d="M813.0,248.9C815.4,250.5 822.8,255.1 827.8,258.3C832.7,261.5 840.1,266.5 842.6,268.1" stroke="#787878" stroke-width="2.6" fill="none"/><path d="M810.5,248.4C812.1,246.7 816.7,240.9 820.4,238.5C824.1,236.1 830.7,234.8 832.7,234.1" stroke="#787878" stroke-width="2.6" fill="none"/><line x1="816.5" y1="246.1" x2="838.9" y2="221.8" stroke="#3c3c3c" stroke-width="1"/><line x1="818.4" y1="247.0" x2="849.3" y2="225.2" stroke="#3c3c3c" stroke-width="1"/><line x1="820.1" y1="248.3" x2="858.0" y2="230.4" stroke="#3c3c3c" stroke-width="1"/><line x1="821.3" y1="249.7" x2="866.1" y2="236.4" stroke="#3c3c3c" stroke-width="1"/><line x1="822.1" y1="251.3" x2="867.4" y2="244.3" stroke="#3c3c3c" stroke-width="1"/><line x1="822.5" y1="253.0" x2="871.8" y2="251.6" stroke="#3c3c3c" stroke-width="1"/><line x1="822.3" y1="254.6" x2="857.8" y2="258.1" stroke="#3c3c3c" stroke-width="1"/><line x1="821.7" y1="256.3" x2="861.5" y2="265.5" stroke="#3c3c3c" stroke-width="1"/><line x1="820.7" y1="257.8" x2="862.8" y2="274.2" stroke="#3c3c3c" stroke-width="1"/><line x1="819.2" y1="259.1" x2="852.0" y2="278.5" stroke="#3c3c3c" stroke-width="1"/><line x1="817.4" y1="260.2" x2="845.5" y2="285.3" stroke="#3c3c3c" stroke-width="1"/><line x1="815.3" y1="261.0" x2="830.1" y2="282.2" stroke="#3c3c3c" stroke-width="1"/><line x1="813.0" y1="261.5" x2="821.8" y2="287.5" stroke="#3c3c3c" stroke-width="1"/><line x1="810.6" y1="261.7" x2="810.9" y2="286.1" stroke="#3c3c3c" stroke-width="1"/><line x1="808.2" y1="261.6" x2="799.9" y2="288.3" stroke="#3c3c3c" stroke-width="1"/><line x1="805.9" y1="261.1" x2="789.0" y2="286.5" stroke="#3c3c3c" stroke-width="1"/><line x1="803.8" y1="260.3" x2="783.8" y2="278.6" stroke="#3c3c3c" stroke-width="1"/><line x1="801.9" y1="259.2" x2="774.3" y2="276.1" stroke="#3c3c3c" stroke-width="1"/><line x1="800.4" y1="257.9" x2="767.1" y2="271.4" stroke="#3c3c3c" stroke-width="1"/><line x1="799.3" y1="256.4" x2="753.5" y2="267.7" stroke="#3c3c3c" stroke-width="1"/><line x1="798.7" y1="254.8" x2="752.4" y2="259.9" stroke="#3c3c3c" stroke-width="1"/><line x1="798.5" y1="253.1" x2="760.6" y2="252.5" stroke="#3c3c3c" stroke-width="1"/><path d="M766.0,253.3C767.0,251.5 771.4,250.0 773.5,250.9C775.5,251.7 778.4,255.8 778.4,258.3C778.4,260.7 775.2,265.1 773.5,265.7C771.7,266.3 769.3,264.0 768.0,262.0C766.8,259.9 765.1,255.2 766.0,253.3Z" fill="#1c1c1c"/><path d="M706.8,234.1C708.8,233.2 718.7,237.0 724.1,236.0C729.4,235.1 734.0,230.5 738.9,228.6C743.8,226.8 749.2,224.9 753.7,224.9C758.2,224.9 761.1,228.8 766.0,228.6C771.0,228.4 778.0,224.9 783.3,223.7C788.7,222.5 792.0,221.3 798.1,221.2C804.3,221.2 813.8,221.8 820.4,223.2C827.0,224.7 831.9,227.7 837.7,229.9C843.4,232.0 850.7,235.1 854.9,236.0C859.1,237.0 862.2,233.1 862.8,235.6C863.5,238.0 860.3,245.8 858.6,250.9C857.0,255.9 856.0,261.2 853.0,265.7C850.0,270.2 845.6,274.9 840.6,278.0C835.6,281.1 828.3,283.5 822.8,284.2C817.4,284.9 813.0,283.6 808.0,282.0C803.1,280.4 797.7,276.9 793.2,274.6C788.7,272.3 785.0,269.4 780.9,268.1C776.7,266.9 772.2,267.7 768.5,267.2C764.8,266.6 762.3,264.6 758.6,264.7C754.9,264.8 750.4,267.9 746.3,267.7C742.2,267.4 737.7,265.6 734.0,263.2C730.2,260.8 726.5,256.2 724.1,253.3C721.6,250.5 721.2,247.9 719.1,245.9C717.1,244.0 713.8,243.5 711.7,241.5C709.7,239.5 704.7,235.0 706.8,234.1Z" fill="none" stroke="#000" stroke-opacity=".5" stroke-width="2.4"/></g></g><clipPath id="sgR"><path d="M660.4,224.9C659.3,220.6 660.2,210.3 661.1,204.0C662.1,197.6 663.4,191.8 666.0,186.7C668.7,181.5 672.8,177.1 677.2,173.1C681.5,169.1 686.6,165.9 692.0,162.5C697.3,159.1 703.9,155.5 709.3,152.6C714.6,149.7 718.3,147.5 724.1,145.2C729.8,142.9 737.7,140.5 743.8,138.8C750.0,137.0 755.3,135.8 761.1,134.8C766.9,133.8 772.2,133.0 778.4,132.8C784.6,132.7 792.8,133.1 798.1,134.1C803.5,135.1 805.6,136.5 810.5,138.8C815.4,141.0 822.0,143.8 827.8,147.7C833.5,151.5 839.7,157.0 845.1,162.0C850.4,166.9 856.0,171.9 859.9,177.3C863.8,182.6 866.3,188.4 868.5,194.1C870.8,199.8 873.0,206.0 873.5,211.4C874.0,216.7 873.3,222.1 871.5,226.2C869.7,230.2 866.8,233.9 862.8,235.6C858.8,237.2 852.6,237.2 847.5,236.0C842.5,234.9 837.7,230.7 832.7,228.6C827.8,226.6 823.3,224.9 817.9,223.7C812.6,222.5 805.6,221.0 800.6,221.2C795.7,221.4 792.8,223.7 788.3,224.9C783.7,226.2 778.4,228.4 773.5,228.6C768.5,228.8 763.6,226.0 758.6,226.2C753.7,226.4 748.4,228.2 743.8,229.9C739.3,231.5 736.8,235.0 731.5,236.0C726.1,237.1 719.1,236.7 711.7,236.0C704.3,235.4 694.4,233.4 687.0,232.3C679.6,231.3 671.7,231.1 667.3,229.9C662.8,228.6 661.4,229.3 660.4,224.9Z"/></clipPath><filter id="tsgR" color-interpolation-filters="sRGB" filterUnits="userSpaceOnUse" x="648" y="121" width="237" height="127"><feTurbulence type="turbulence" baseFrequency="0.09" numOctaves="1" seed="11" result="t"/><feColorMatrix in="t" type="matrix" values="0 0 0 1 0  0 0 0 1 0  0 0 0 1 0  0 0 0 0 1" result="g0"/><feGaussianBlur in="g0" stdDeviation="0.75" result="g"/><feComponentTransfer in="g"><feFuncR type="table" tableValues="0.08 0.33 0.45 0.52 0.56 0.57 0.57 0.57 0.57 0.57 0.57"/><feFuncG type="table" tableValues="0.08 0.33 0.45 0.52 0.56 0.57 0.57 0.57 0.57 0.57 0.57"/><feFuncB type="table" tableValues="0.08 0.33 0.45 0.52 0.56 0.57 0.57 0.57 0.57 0.57 0.57"/></feComponentTransfer></filter><filter id="fsgR" color-interpolation-filters="sRGB" filterUnits="userSpaceOnUse" x="648" y="121" width="237" height="127"><feGaussianBlur stdDeviation="0.6"/></filter><filter id="wsgR" color-interpolation-filters="sRGB" filterUnits="userSpaceOnUse" x="648" y="121" width="237" height="127"><feGaussianBlur stdDeviation="5"/></filter><g filter="url(#fsgR)"><g clip-path="url(#sgR)"><rect x="648" y="121" width="237" height="127" filter="url(#tsgR)"/><path d="M745.0,205.0C745.0,205.0 745.0,205.0 745.0,205.0C745.0,205.0 745.0,205.0 745.0,205.0C745.0,205.0 745.0,205.0 745.0,205.0C745.0,205.0 745.0,205.0 745.0,205.0C745.0,205.0 745.0,205.0 745.0,205.0C745.0,205.0 745.0,205.0 745.0,205.0C745.0,205.0 745.0,205.0 745.0,205.0C745.0,205.0 745.0,205.0 745.0,205.0C745.0,205.0 745.0,205.0 745.0,205.0C745.0,205.0 745.0,205.0 745.0,205.0C745.0,205.0 745.0,205.0 745.0,205.0C745.0,205.0 745.0,205.0 745.0,205.0C745.0,205.0 745.0,205.0 745.0,205.0C745.0,205.0 745.0,205.0 745.0,205.0C745.0,205.0 745.0,205.0 745.0,205.0C745.0,205.0 745.0,205.0 745.0,205.0C745.0,205.0 745.0,205.0 745.0,205.0C745.0,205.0 745.0,205.0 745.0,205.0C745.0,205.0 745.0,205.0 745.0,205.0C745.0,205.0 745.0,205.0 745.0,205.0C745.0,205.0 745.0,205.0 745.0,205.0C745.0,205.0 745.0,205.0 745.0,205.0C745.0,205.0 745.0,205.0 745.0,205.0C745.0,205.0 745.0,205.0 745.0,205.0C745.0,205.0 745.0,205.0 745.0,205.0C745.0,205.0 745.0,205.0 745.0,205.0C745.0,205.0 745.0,205.0 745.0,205.0C745.0,205.0 745.0,205.0 745.0,205.0C745.0,205.0 745.0,205.0 745.0,205.0C745.0,205.0 745.0,205.0 745.0,205.0C745.0,205.0 745.0,205.0 745.0,205.0Z" fill="#8f8f8f" opacity="0" filter="url(#wsgR)"/><filter id="sgsR" x="-30%" y="-30%" width="160%" height="160%"><feGaussianBlur stdDeviation="1.1"/></filter><filter id="sgs2R" x="-30%" y="-30%" width="160%" height="160%"><feGaussianBlur stdDeviation="3"/></filter><path d="M692.0,223.7C690.1,219.0 690.7,208.5 693.2,201.5C695.7,194.5 700.4,187.5 706.8,181.7C713.2,176.0 722.4,170.6 731.5,166.9C740.5,163.2 751.6,160.3 761.1,159.5C770.6,158.7 780.0,159.7 788.3,162.0C796.5,164.2 804.7,168.1 810.5,173.1C816.3,178.0 822.4,185.6 822.8,191.6C823.3,197.6 817.1,204.8 813.0,208.9C808.8,213.0 803.9,213.6 798.1,216.3C792.4,219.0 785.8,223.5 778.4,224.9C771.0,226.4 762.8,224.3 753.7,224.9C744.7,225.6 732.3,227.8 724.1,228.6C715.8,229.5 709.7,230.7 704.3,229.9C699.0,229.1 693.8,228.4 692.0,223.7Z" fill="#8f8f8f" filter="url(#sgs2R)"/><g filter="url(#sgsR)"><path d="M724.1,202.7C726.5,201.3 733.5,195.8 738.9,194.1C744.2,192.4 750.4,191.9 756.2,192.6C761.9,193.3 768.7,195.4 773.5,198.3C778.2,201.2 783.3,206.5 784.6,209.9C785.8,213.2 781.5,216.9 780.9,218.3" stroke="#a2a2a2" stroke-width="3.2" fill="none"/><path d="M727.0,206.4C729.4,205.3 736.5,200.9 741.4,199.5C746.2,198.1 751.2,197.4 756.2,198.0C761.1,198.7 767.2,200.9 771.0,203.5C774.8,206.0 777.6,211.7 778.9,213.3" stroke="#7a7a7a" stroke-width="2" fill="none"/><path d="M721.6,215.1C723.2,213.2 728.4,210.1 731.5,210.1C734.6,210.1 738.9,212.8 740.1,215.1C741.4,217.3 740.7,221.9 738.9,223.7C737.0,225.6 731.8,226.6 729.0,226.2C726.2,225.8 723.3,223.1 722.1,221.2C720.9,219.4 720.0,216.9 721.6,215.1Z" fill="#6c6c6c"/><ellipse cx="732.7" cy="159.5" rx="7" ry="5.5" fill="#777"/><ellipse cx="795.7" cy="175.6" rx="5" ry="5" fill="#7c7c7c"/><path d="M768.5,187.9C769.8,187.2 774.5,186.2 778.4,187.2C782.3,188.1 788.4,191.5 792.0,193.6C795.6,195.6 799.1,197.3 800.1,199.5C801.2,201.7 799.3,205.3 798.1,206.9C797.0,208.6 795.5,210.0 793.2,209.4C790.9,208.8 787.4,205.7 784.6,203.5C781.8,201.2 778.8,198.0 776.4,196.0C774.1,194.1 771.8,193.0 770.5,191.6C769.2,190.2 767.2,188.6 768.5,187.9Z" fill="#101010"/><path d="M800.6,208.9C802.7,208.3 808.4,206.4 813.0,205.2C817.5,204.0 823.3,203.3 827.8,201.5C832.3,199.6 838.1,195.3 840.1,194.1" stroke="#2e2e2e" stroke-width="2.2" fill="none"/><path d="M808.0,215.8C810.5,215.2 817.9,212.6 822.8,212.3C827.8,212.1 832.3,214.7 837.7,214.3C843.0,214.0 852.1,210.8 854.9,210.1" stroke="#2e2e2e" stroke-width="2.2" fill="none"/><path d="M820.4,194.1C822.0,192.8 827.4,189.3 830.2,186.7C833.1,184.0 836.4,179.5 837.7,178.0" stroke="#2e2e2e" stroke-width="2.2" fill="none"/><path d="M788.3,223.7C791.6,223.1 801.4,219.8 808.0,220.0C814.6,220.2 821.2,222.9 827.8,224.9C834.4,227.0 841.8,230.8 847.5,232.3C853.3,233.9 859.9,233.8 862.3,234.1" stroke="#333" stroke-width="2" fill="none"/></g><g><path d="M679.4,169.3 Q688.6,175.6 698.8,180.4" stroke="#626262" stroke-width="7.5" fill="none" stroke-linecap="round"/><path d="M691.8,160.5 Q697.5,167.5 705.7,171.4" stroke="#626262" stroke-width="7.5" fill="none" stroke-linecap="round"/><path d="M705.0,152.8 Q712.0,160.4 719.0,167.9" stroke="#626262" stroke-width="7.5" fill="none" stroke-linecap="round"/><path d="M714.3,147.9 Q719.6,153.7 723.5,160.5" stroke="#626262" stroke-width="7.5" fill="none" stroke-linecap="round"/><path d="M728.4,141.7 Q730.2,149.9 735.6,156.3" stroke="#626262" stroke-width="7.5" fill="none" stroke-linecap="round"/><path d="M739.5,138.1 Q745.3,145.6 745.1,155.0" stroke="#626262" stroke-width="7.5" fill="none" stroke-linecap="round"/><path d="M756.7,133.8 Q755.4,145.4 759.2,156.5" stroke="#626262" stroke-width="7.5" fill="none" stroke-linecap="round"/><path d="M768.1,132.0 Q769.1,140.0 767.7,147.9" stroke="#626262" stroke-width="7.5" fill="none" stroke-linecap="round"/><path d="M780.9,131.0 Q776.5,138.7 778.2,147.5" stroke="#626262" stroke-width="7.5" fill="none" stroke-linecap="round"/><path d="M793.8,131.9 Q789.1,139.4 788.6,148.2" stroke="#626262" stroke-width="7.5" fill="none" stroke-linecap="round"/><path d="M805.5,134.8 Q800.6,146.1 795.0,157.1" stroke="#626262" stroke-width="7.5" fill="none" stroke-linecap="round"/><path d="M819.9,141.4 Q814.6,149.2 809.1,157.0" stroke="#626262" stroke-width="7.5" fill="none" stroke-linecap="round"/><path d="M830.0,147.0 Q822.9,151.2 819.5,158.9" stroke="#626262" stroke-width="7.5" fill="none" stroke-linecap="round"/><path d="M840.7,155.8 Q833.1,164.8 822.9,170.8" stroke="#626262" stroke-width="7.5" fill="none" stroke-linecap="round"/><path d="M853.4,167.8 Q841.9,172.4 832.3,180.1" stroke="#626262" stroke-width="7.5" fill="none" stroke-linecap="round"/><path d="M861.9,176.8 Q851.5,179.6 842.4,185.4" stroke="#626262" stroke-width="7.5" fill="none" stroke-linecap="round"/><path d="M866.4,185.8 Q856.1,186.8 847.2,192.1" stroke="#626262" stroke-width="7.5" fill="none" stroke-linecap="round"/><path d="M679.4,169.3 Q687.8,175.1 697.1,179.4" stroke="#161616" stroke-width="3.4" fill="none" stroke-linecap="round"/><path d="M691.8,160.5 Q696.7,166.9 704.1,170.2" stroke="#161616" stroke-width="3.4" fill="none" stroke-linecap="round"/><path d="M705.0,152.8 Q711.3,159.7 717.7,166.5" stroke="#161616" stroke-width="3.4" fill="none" stroke-linecap="round"/><path d="M714.3,147.9 Q719.0,152.9 722.3,158.9" stroke="#161616" stroke-width="3.4" fill="none" stroke-linecap="round"/><path d="M728.4,141.7 Q729.7,149.0 734.7,154.5" stroke="#161616" stroke-width="3.4" fill="none" stroke-linecap="round"/><path d="M739.5,138.1 Q745.0,144.6 744.5,153.2" stroke="#161616" stroke-width="3.4" fill="none" stroke-linecap="round"/><path d="M756.7,133.8 Q755.3,144.5 759.0,154.6" stroke="#161616" stroke-width="3.4" fill="none" stroke-linecap="round"/><path d="M768.1,132.0 Q769.1,139.0 767.8,146.0" stroke="#161616" stroke-width="3.4" fill="none" stroke-linecap="round"/><path d="M780.9,131.0 Q776.6,137.8 778.5,145.5" stroke="#161616" stroke-width="3.4" fill="none" stroke-linecap="round"/><path d="M793.8,131.9 Q789.4,138.4 789.2,146.3" stroke="#161616" stroke-width="3.4" fill="none" stroke-linecap="round"/><path d="M805.5,134.8 Q801.0,145.2 795.9,155.4" stroke="#161616" stroke-width="3.4" fill="none" stroke-linecap="round"/><path d="M819.9,141.4 Q815.2,148.4 810.2,155.3" stroke="#161616" stroke-width="3.4" fill="none" stroke-linecap="round"/><path d="M830.0,147.0 Q823.5,150.5 820.8,157.4" stroke="#161616" stroke-width="3.4" fill="none" stroke-linecap="round"/><path d="M840.7,155.8 Q833.8,164.2 824.4,169.5" stroke="#161616" stroke-width="3.4" fill="none" stroke-linecap="round"/><path d="M853.4,167.8 Q842.8,171.9 834.0,179.1" stroke="#161616" stroke-width="3.4" fill="none" stroke-linecap="round"/><path d="M861.9,176.8 Q852.4,179.2 844.2,184.6" stroke="#161616" stroke-width="3.4" fill="none" stroke-linecap="round"/><path d="M866.4,185.8 Q857.0,186.5 849.1,191.5" stroke="#161616" stroke-width="3.4" fill="none" stroke-linecap="round"/></g><path d="M660.4,224.9C659.3,220.6 660.2,210.3 661.1,204.0C662.1,197.6 663.4,191.8 666.0,186.7C668.7,181.5 672.8,177.1 677.2,173.1C681.5,169.1 686.6,165.9 692.0,162.5C697.3,159.1 703.9,155.5 709.3,152.6C714.6,149.7 718.3,147.5 724.1,145.2C729.8,142.9 737.7,140.5 743.8,138.8C750.0,137.0 755.3,135.8 761.1,134.8C766.9,133.8 772.2,133.0 778.4,132.8C784.6,132.7 792.8,133.1 798.1,134.1C803.5,135.1 805.6,136.5 810.5,138.8C815.4,141.0 822.0,143.8 827.8,147.7C833.5,151.5 839.7,157.0 845.1,162.0C850.4,166.9 856.0,171.9 859.9,177.3C863.8,182.6 866.3,188.4 868.5,194.1C870.8,199.8 873.0,206.0 873.5,211.4C874.0,216.7 873.3,222.1 871.5,226.2C869.7,230.2 866.8,233.9 862.8,235.6C858.8,237.2 852.6,237.2 847.5,236.0C842.5,234.9 837.7,230.7 832.7,228.6C827.8,226.6 823.3,224.9 817.9,223.7C812.6,222.5 805.6,221.0 800.6,221.2C795.7,221.4 792.8,223.7 788.3,224.9C783.7,226.2 778.4,228.4 773.5,228.6C768.5,228.8 763.6,226.0 758.6,226.2C753.7,226.4 748.4,228.2 743.8,229.9C739.3,231.5 736.8,235.0 731.5,236.0C726.1,237.1 719.1,236.7 711.7,236.0C704.3,235.4 694.4,233.4 687.0,232.3C679.6,231.3 671.7,231.1 667.3,229.9C662.8,228.6 661.4,229.3 660.4,224.9Z" fill="none" stroke="#000" stroke-opacity="0.3" stroke-width="16" filter="url(#wsgR)"/><path d="M660.4,224.9C659.3,220.6 660.2,210.3 661.1,204.0C662.1,197.6 663.4,191.8 666.0,186.7C668.7,181.5 672.8,177.1 677.2,173.1C681.5,169.1 686.6,165.9 692.0,162.5C697.3,159.1 703.9,155.5 709.3,152.6C714.6,149.7 718.3,147.5 724.1,145.2C729.8,142.9 737.7,140.5 743.8,138.8C750.0,137.0 755.3,135.8 761.1,134.8C766.9,133.8 772.2,133.0 778.4,132.8C784.6,132.7 792.8,133.1 798.1,134.1C803.5,135.1 805.6,136.5 810.5,138.8C815.4,141.0 822.0,143.8 827.8,147.7C833.5,151.5 839.7,157.0 845.1,162.0C850.4,166.9 856.0,171.9 859.9,177.3C863.8,182.6 866.3,188.4 868.5,194.1C870.8,199.8 873.0,206.0 873.5,211.4C874.0,216.7 873.3,222.1 871.5,226.2C869.7,230.2 866.8,233.9 862.8,235.6C858.8,237.2 852.6,237.2 847.5,236.0C842.5,234.9 837.7,230.7 832.7,228.6C827.8,226.6 823.3,224.9 817.9,223.7C812.6,222.5 805.6,221.0 800.6,221.2C795.7,221.4 792.8,223.7 788.3,224.9C783.7,226.2 778.4,228.4 773.5,228.6C768.5,228.8 763.6,226.0 758.6,226.2C753.7,226.4 748.4,228.2 743.8,229.9C739.3,231.5 736.8,235.0 731.5,236.0C726.1,237.1 719.1,236.7 711.7,236.0C704.3,235.4 694.4,233.4 687.0,232.3C679.6,231.3 671.7,231.1 667.3,229.9C662.8,228.6 661.4,229.3 660.4,224.9Z" fill="none" stroke="#000" stroke-opacity=".6" stroke-width="3.5"/></g></g><circle cx="741.9" cy="227.2" r="1.5" fill="#d4d4d4"/><circle cx="716.2" cy="240.2" r="1.3" fill="#d4d4d4"/><circle cx="719.6" cy="243.0" r="1.5" fill="#d4d4d4"/><circle cx="713.7" cy="243.5" r="1.1" fill="#d4d4d4"/><circle cx="766.0" cy="261.2" r="1.9" fill="#d4d4d4"/><circle cx="762.3" cy="263.2" r="1.2" fill="#d4d4d4"/></g><line x1="686" y1="212" x2="594" y2="212" stroke="#4343cc" stroke-width="2" stroke-dasharray="8 8" stroke-dashoffset="8"/><line x1="702" y1="212" x2="909" y2="212" stroke="#4343cc" stroke-width="2" stroke-dasharray="8 8" stroke-dashoffset="8"/><line x1="694" y1="204" x2="694" y2="34" stroke="#4343cc" stroke-width="2" stroke-dasharray="8 8" stroke-dashoffset="8"/><line x1="694" y1="220" x2="694" y2="389" stroke="#4343cc" stroke-width="2" stroke-dasharray="8 8" stroke-dashoffset="8"/><path d="M686,212 H702 M694,204 V220" stroke="#5a5aee" stroke-width="2" fill="none"/><text x="576.5" y="68.7" textLength="29" lengthAdjust="spacingAndGlyphs" font-size="11.7" fill="#50c000" font-family='"Liberation Sans", sans-serif' >norm</text><text x="746.4" y="68" textLength="8.5" lengthAdjust="spacingAndGlyphs" font-size="12.7" font-weight="700" fill="#f7b900" font-family='"Liberation Serif", serif' >S</text><text x="576.4" y="216" textLength="11.0" lengthAdjust="spacingAndGlyphs" font-size="12.7" font-weight="700" fill="#f7b900" font-family='"Liberation Serif", serif' >A</text><text x="915.4" y="216" textLength="9.3" lengthAdjust="spacingAndGlyphs" font-size="12.7" font-weight="700" fill="#f7b900" font-family='"Liberation Serif", serif' >P</text><text x="745.9" y="364" textLength="10.4" lengthAdjust="spacingAndGlyphs" font-size="13.4" font-weight="700" fill="#f7b900" font-family='"Liberation Mono", monospace' >I</text><line x1="803.5" y1="359.5" x2="926.7" y2="359.5" stroke="#50c000" stroke-width="2" /><line x1="803.5" y1="354.0" x2="803.5" y2="365.0" stroke="#50c000" stroke-width="2" /><line x1="926.7" y1="354.0" x2="926.7" y2="365.0" stroke="#50c000" stroke-width="2" /><text x="842.5" y="353.5" textLength="34" lengthAdjust="spacingAndGlyphs" font-size="12" fill="#50c000" font-family='"Liberation Sans", sans-serif' >10 cm</text></g><g transform="translate(936,57)"><rect x=".5" y=".5" width="12" height="12" fill="#fff" stroke="#5a5a5a"/><rect x="0" y="0" width="13" height="2.5" fill="#777"/><path d="M13.5,1 V13.5 H1" stroke="#9a9a9a" fill="none"/><text x="3.1" y="11.1" textLength="6.9" lengthAdjust="spacingAndGlyphs" font-size="9.8" fill="#4c4c4c" font-family='"Liberation Sans", sans-serif' >S</text></g><g transform="translate(937.5,81.5)"><path d="M1,2 H3 L3.6,0.6 H6.6 L7.2,2 H9.2 Q10,2 10,2.8 V7.4 Q10,8.2 9.2,8.2 H1 Q.2,8.2 .2,7.4 V2.8 Q.2,2 1,2Z" fill="#fff" stroke="#111" stroke-width="1.1"/><circle cx="5.1" cy="5" r="1.9" fill="#fff" stroke="#222" stroke-width="1.2"/></g><rect x="936" y="98" width="14" height="271" fill="#e6e6e6" /><line x1="936.5" y1="98" x2="936.5" y2="369" stroke="#c3c3c3" stroke-width="1" /><rect x="937" y="98" width="13" height="13" fill="#fbfbfb" /><line x1="937" y1="111.5" x2="950" y2="111.5" stroke="#c9c9c9" stroke-width="1" /><path d="M939.5,106.5 L947.5,106.5 L943.5,102.5Z" fill="#555"/><rect x="937" y="356" width="13" height="13" fill="#fbfbfb" /><line x1="937" y1="355.5" x2="950" y2="355.5" stroke="#c9c9c9" stroke-width="1" /><path d="M939.5,360.5 L947.5,360.5 L943.5,364.5Z" fill="#555"/><rect x="937" y="207" width="13" height="26.30000000000001" fill="url(#thumbR)" /><line x1="937" y1="206.5" x2="950" y2="206.5" stroke="#c9c9c9" stroke-width="1" /><line x1="937" y1="233.8" x2="950" y2="233.8" stroke="#c9c9c9" stroke-width="1" /><rect x="795.5" y="371.5" width="70" height="19" fill="url(#btnR)" stroke="#b4b4b4" stroke-width="1" rx="3" /><text x="802" y="385" textLength="57" lengthAdjust="spacingAndGlyphs" font-size="12.6" fill="#000" font-family='"Liberation Sans", sans-serif' >zoom to fit</text><text x="890.5" y="385" textLength="52.5" lengthAdjust="spacingAndGlyphs" font-size="11.8" fill="#000" font-family='"Liberation Sans", sans-serif' >113 of 256</text><clipPath id="cvRc"><rect x="572" y="395" width="359" height="314"/></clipPath><rect x="571" y="394" width="361" height="316" fill="#fff" /><rect x="572" y="395" width="359" height="314" fill="#000" /><g clip-path="url(#cvRc)"><g opacity="0.86"><clipPath id="coR"><path d="M695.0,560.7C694.6,556.5 694.8,550.8 695.9,545.3C697.1,539.9 699.0,533.4 701.7,528.0C704.4,522.6 708.3,517.1 712.3,513.0C716.3,508.9 721.2,505.7 725.7,503.4C730.2,501.2 735.0,499.9 739.2,499.6C743.3,499.3 747.2,501.5 750.7,501.5C754.2,501.5 756.4,499.8 760.3,499.6C764.1,499.4 769.2,499.0 773.7,500.6C778.2,502.1 783.0,505.5 787.2,508.8C791.3,512.1 795.3,516.2 798.7,520.3C802.1,524.5 805.1,529.3 807.3,533.8C809.6,538.3 811.3,542.7 812.1,547.2C813.0,551.7 813.8,557.3 812.5,560.7C811.2,564.1 807.7,566.6 804.5,567.6C801.2,568.6 796.8,566.2 792.9,566.8C789.1,567.5 784.9,569.3 781.4,571.4C777.9,573.6 774.5,577.2 771.8,579.9C769.1,582.6 767.2,585.0 765.1,587.6C763.0,590.1 761.6,593.8 759.3,595.3C757.1,596.7 754.0,596.7 751.6,596.4C749.3,596.1 746.7,595.8 745.3,593.7C743.9,591.7 745.0,587.0 743.4,584.1C741.8,581.2 738.6,578.7 735.7,576.4C732.7,574.2 729.3,571.8 725.7,570.7C722.1,569.5 717.6,569.1 714.2,569.5C710.7,570.0 707.6,573.2 705.0,573.4C702.3,573.5 699.7,572.4 698.0,570.3C696.4,568.2 695.3,564.8 695.0,560.7Z"/></clipPath><filter id="tcoR" color-interpolation-filters="sRGB" filterUnits="userSpaceOnUse" x="683" y="488" width="142" height="121"><feTurbulence type="turbulence" baseFrequency="0.095" numOctaves="1" seed="3" result="t"/><feColorMatrix in="t" type="matrix" values="0 0 0 1 0  0 0 0 1 0  0 0 0 1 0  0 0 0 0 1" result="g0"/><feGaussianBlur in="g0" stdDeviation="0.75" result="g"/><feComponentTransfer in="g"><feFuncR type="table" tableValues="0.08 0.33 0.45 0.52 0.56 0.57 0.57 0.57 0.57 0.57 0.57"/><feFuncG type="table" tableValues="0.08 0.33 0.45 0.52 0.56 0.57 0.57 0.57 0.57 0.57 0.57"/><feFuncB type="table" tableValues="0.08 0.33 0.45 0.52 0.56 0.57 0.57 0.57 0.57 0.57 0.57"/></feComponentTransfer></filter><filter id="fcoR" color-interpolation-filters="sRGB" filterUnits="userSpaceOnUse" x="683" y="488" width="142" height="121"><feGaussianBlur stdDeviation="0.6"/></filter><filter id="wcoR" color-interpolation-filters="sRGB" filterUnits="userSpaceOnUse" x="683" y="488" width="142" height="121"><feGaussianBlur stdDeviation="5"/></filter><g filter="url(#fcoR)"><g clip-path="url(#coR)"><rect x="683" y="488" width="142" height="121" filter="url(#tcoR)"/><path d="M753.0,548.0C753.0,548.0 753.0,548.0 753.0,548.0C753.0,548.0 753.0,548.0 753.0,548.0C753.0,548.0 753.0,548.0 753.0,548.0C753.0,548.0 753.0,548.0 753.0,548.0C753.0,548.0 753.0,548.0 753.0,548.0C753.0,548.0 753.0,548.0 753.0,548.0C753.0,548.0 753.0,548.0 753.0,548.0C753.0,548.0 753.0,548.0 753.0,548.0C753.0,548.0 753.0,548.0 753.0,548.0C753.0,548.0 753.0,548.0 753.0,548.0C753.0,548.0 753.0,548.0 753.0,548.0C753.0,548.0 753.0,548.0 753.0,548.0C753.0,548.0 753.0,548.0 753.0,548.0C753.0,548.0 753.0,548.0 753.0,548.0C753.0,548.0 753.0,548.0 753.0,548.0C753.0,548.0 753.0,548.0 753.0,548.0C753.0,548.0 753.0,548.0 753.0,548.0C753.0,548.0 753.0,548.0 753.0,548.0C753.0,548.0 753.0,548.0 753.0,548.0C753.0,548.0 753.0,548.0 753.0,548.0C753.0,548.0 753.0,548.0 753.0,548.0C753.0,548.0 753.0,548.0 753.0,548.0C753.0,548.0 753.0,548.0 753.0,548.0C753.0,548.0 753.0,548.0 753.0,548.0C753.0,548.0 753.0,548.0 753.0,548.0C753.0,548.0 753.0,548.0 753.0,548.0C753.0,548.0 753.0,548.0 753.0,548.0C753.0,548.0 753.0,548.0 753.0,548.0Z" fill="#8f8f8f" opacity="0" filter="url(#wcoR)"/><filter id="cosR" x="-30%" y="-30%" width="160%" height="160%"><feGaussianBlur stdDeviation="1.0"/></filter><filter id="cos2R" x="-30%" y="-30%" width="160%" height="160%"><feGaussianBlur stdDeviation="2.5"/></filter><g filter="url(#cos2R)" fill="#8f8f8f"><path d="M718.0,543.4C719.5,539.9 724.4,536.7 727.6,535.7C730.8,534.7 735.0,535.4 737.2,537.6C739.5,539.9 740.8,545.3 741.1,549.2C741.4,553.0 741.4,558.4 739.2,560.7C736.9,562.9 731.0,563.2 727.6,562.6C724.3,562.0 720.6,560.0 719.0,556.8C717.4,553.6 716.6,546.9 718.0,543.4Z"/><path d="M769.9,537.6C772.0,535.7 776.3,534.7 779.5,535.7C782.7,536.7 787.8,539.9 789.1,543.4C790.4,546.9 789.1,553.6 787.2,556.8C785.3,560.0 780.6,562.6 777.6,562.6C774.5,562.6 770.7,559.4 768.9,556.8C767.2,554.3 766.8,550.4 767.0,547.2C767.2,544.0 767.8,539.5 769.9,537.6Z"/></g><g filter="url(#cosR)"><path d="M751.6,501.1C751.5,504.0 750.5,512.3 750.7,518.4C750.8,524.5 752.3,531.2 752.6,537.6C752.9,544.0 752.2,551.1 752.2,556.8C752.2,562.6 752.6,565.8 752.6,572.2C752.6,578.6 752.3,591.4 752.2,595.3" stroke="#4c4c4c" stroke-width="2.2" fill="none"/><path d="M741.5,525.7C742.9,522.8 747.3,523.8 750.7,523.8C754.1,523.8 759.2,523.4 761.8,525.7C764.5,528.0 766.1,533.5 766.6,537.6C767.1,541.8 766.4,547.7 764.7,550.7C763.0,553.7 759.4,555.0 756.4,555.5C753.5,556.0 749.7,555.9 747.2,553.6C744.8,551.2 742.8,546.1 741.8,541.5C740.9,536.8 740.0,528.7 741.5,525.7Z" fill="#5e5e5e"/><path d="M745.9,537.6C746.4,534.4 749.1,530.3 750.7,530.3C752.3,530.3 754.8,534.6 755.5,537.6C756.1,540.7 755.8,546.7 754.5,548.8C753.2,550.8 749.2,551.6 747.8,549.7C746.4,547.9 745.4,540.9 745.9,537.6Z" fill="#494949"/><path d="M760.3,530.3C760.9,531.5 763.5,534.8 764.1,537.6C764.7,540.4 763.8,545.6 763.7,547.2" stroke="#868686" stroke-width="2.2" fill="none"/><path d="M742.0,557.2C743.5,557.7 747.6,560.1 750.7,560.1C753.7,560.1 758.7,557.7 760.3,557.2" stroke="#464646" stroke-width="2.6" fill="none"/><path d="M744.9,564.9C746.2,565.8 749.9,570.3 752.6,570.3C755.3,570.3 759.8,565.8 761.2,564.9" stroke="#4a4a4a" stroke-width="2.2" fill="none"/><path d="M744.0,583.7C745.0,581.7 748.3,581.6 751.6,581.8C755.0,582.0 762.8,582.4 764.1,584.7C765.4,586.9 761.4,593.3 759.3,595.3C757.2,597.2 754.0,596.7 751.6,596.4C749.3,596.1 746.6,595.8 745.3,593.7C744.0,591.6 742.9,585.7 744.0,583.7Z" fill="#505050"/><path d="M746.5,584.7C746.5,585.6 746.8,588.7 746.8,590.4C746.8,592.2 746.5,594.5 746.5,595.3" stroke="#303030" stroke-width="1.2" fill="none"/><path d="M749.3,584.7C749.4,585.6 749.7,588.7 749.7,590.4C749.7,592.2 749.4,594.5 749.3,595.3" stroke="#303030" stroke-width="1.2" fill="none"/><path d="M752.2,584.7C752.3,585.6 752.6,588.7 752.6,590.4C752.6,592.2 752.3,594.5 752.2,595.3" stroke="#303030" stroke-width="1.2" fill="none"/><path d="M755.1,584.7C755.2,585.6 755.5,588.7 755.5,590.4C755.5,592.2 755.2,594.5 755.1,595.3" stroke="#303030" stroke-width="1.2" fill="none"/><path d="M758.0,584.7C758.0,585.6 758.4,588.7 758.4,590.4C758.4,592.2 758.0,594.5 758.0,595.3" stroke="#303030" stroke-width="1.2" fill="none"/></g><g><path d="M693.5,553.1 Q699.5,552.9 705.4,554.0" stroke="#626262" stroke-width="6.2" fill="none" stroke-linecap="round"/><path d="M695.7,539.7 Q701.8,540.1 707.0,543.5" stroke="#626262" stroke-width="6.2" fill="none" stroke-linecap="round"/><path d="M699.9,527.4 Q706.5,532.7 714.2,536.4" stroke="#626262" stroke-width="6.2" fill="none" stroke-linecap="round"/><path d="M708.5,515.0 Q713.8,520.0 718.4,525.7" stroke="#626262" stroke-width="6.2" fill="none" stroke-linecap="round"/><path d="M716.0,507.9 Q716.7,514.1 721.9,517.4" stroke="#626262" stroke-width="6.2" fill="none" stroke-linecap="round"/><path d="M727.4,500.9 Q730.4,507.1 731.9,513.8" stroke="#626262" stroke-width="6.2" fill="none" stroke-linecap="round"/><path d="M739.9,497.8 Q740.1,504.2 741.4,510.5" stroke="#626262" stroke-width="6.2" fill="none" stroke-linecap="round"/><path d="M693.5,553.1 Q698.5,552.8 703.4,553.8" stroke="#161616" stroke-width="2.9" fill="none" stroke-linecap="round"/><path d="M695.7,539.7 Q700.9,539.8 705.1,542.9" stroke="#161616" stroke-width="3.0" fill="none" stroke-linecap="round"/><path d="M699.9,527.4 Q705.7,532.2 712.5,535.3" stroke="#161616" stroke-width="2.3" fill="none" stroke-linecap="round"/><path d="M708.5,515.0 Q713.1,519.3 717.0,524.3" stroke="#161616" stroke-width="3.2" fill="none" stroke-linecap="round"/><path d="M716.0,507.9 Q716.2,513.2 720.9,515.7" stroke="#161616" stroke-width="2.6" fill="none" stroke-linecap="round"/><path d="M727.4,500.9 Q730.1,506.1 731.2,511.9" stroke="#161616" stroke-width="3.2" fill="none" stroke-linecap="round"/><path d="M739.9,497.8 Q740.0,503.2 741.2,508.5" stroke="#161616" stroke-width="2.8" fill="none" stroke-linecap="round"/></g><g><path d="M759.5,497.8 Q760.7,504.1 759.7,510.5" stroke="#626262" stroke-width="6.2" fill="none" stroke-linecap="round"/><path d="M775.4,499.3 Q775.6,508.0 771.1,515.5" stroke="#626262" stroke-width="6.2" fill="none" stroke-linecap="round"/><path d="M788.7,507.6 Q782.6,512.9 781.1,520.8" stroke="#626262" stroke-width="6.2" fill="none" stroke-linecap="round"/><path d="M796.4,515.2 Q791.6,518.4 789.2,523.5" stroke="#626262" stroke-width="6.2" fill="none" stroke-linecap="round"/><path d="M803.5,524.2 Q795.6,527.6 790.1,534.3" stroke="#626262" stroke-width="6.2" fill="none" stroke-linecap="round"/><path d="M812.2,541.4 Q806.8,545.6 800.1,545.0" stroke="#626262" stroke-width="6.2" fill="none" stroke-linecap="round"/><path d="M814.4,554.9 Q808.5,557.1 802.5,555.3" stroke="#626262" stroke-width="6.2" fill="none" stroke-linecap="round"/><path d="M759.5,497.8 Q760.7,503.1 759.6,508.5" stroke="#161616" stroke-width="3.1" fill="none" stroke-linecap="round"/><path d="M775.4,499.3 Q775.8,507.1 771.6,513.6" stroke="#161616" stroke-width="2.7" fill="none" stroke-linecap="round"/><path d="M788.7,507.6 Q783.1,512.0 782.1,519.0" stroke="#161616" stroke-width="3.1" fill="none" stroke-linecap="round"/><path d="M796.4,515.2 Q792.3,517.6 790.5,522.0" stroke="#161616" stroke-width="2.3" fill="none" stroke-linecap="round"/><path d="M803.5,524.2 Q796.4,527.0 791.7,533.1" stroke="#161616" stroke-width="3.1" fill="none" stroke-linecap="round"/><path d="M812.2,541.4 Q807.8,545.3 802.0,544.4" stroke="#161616" stroke-width="2.3" fill="none" stroke-linecap="round"/><path d="M814.4,554.9 Q809.5,557.1 804.5,555.2" stroke="#161616" stroke-width="2.2" fill="none" stroke-linecap="round"/></g><path d="M695.0,560.7C694.6,556.5 694.8,550.8 695.9,545.3C697.1,539.9 699.0,533.4 701.7,528.0C704.4,522.6 708.3,517.1 712.3,513.0C716.3,508.9 721.2,505.7 725.7,503.4C730.2,501.2 735.0,499.9 739.2,499.6C743.3,499.3 747.2,501.5 750.7,501.5C754.2,501.5 756.4,499.8 760.3,499.6C764.1,499.4 769.2,499.0 773.7,500.6C778.2,502.1 783.0,505.5 787.2,508.8C791.3,512.1 795.3,516.2 798.7,520.3C802.1,524.5 805.1,529.3 807.3,533.8C809.6,538.3 811.3,542.7 812.1,547.2C813.0,551.7 813.8,557.3 812.5,560.7C811.2,564.1 807.7,566.6 804.5,567.6C801.2,568.6 796.8,566.2 792.9,566.8C789.1,567.5 784.9,569.3 781.4,571.4C777.9,573.6 774.5,577.2 771.8,579.9C769.1,582.6 767.2,585.0 765.1,587.6C763.0,590.1 761.6,593.8 759.3,595.3C757.1,596.7 754.0,596.7 751.6,596.4C749.3,596.1 746.7,595.8 745.3,593.7C743.9,591.7 745.0,587.0 743.4,584.1C741.8,581.2 738.6,578.7 735.7,576.4C732.7,574.2 729.3,571.8 725.7,570.7C722.1,569.5 717.6,569.1 714.2,569.5C710.7,570.0 707.6,573.2 705.0,573.4C702.3,573.5 699.7,572.4 698.0,570.3C696.4,568.2 695.3,564.8 695.0,560.7Z" fill="none" stroke="#000" stroke-opacity="0.3" stroke-width="16" filter="url(#wcoR)"/><path d="M695.0,560.7C694.6,556.5 694.8,550.8 695.9,545.3C697.1,539.9 699.0,533.4 701.7,528.0C704.4,522.6 708.3,517.1 712.3,513.0C716.3,508.9 721.2,505.7 725.7,503.4C730.2,501.2 735.0,499.9 739.2,499.6C743.3,499.3 747.2,501.5 750.7,501.5C754.2,501.5 756.4,499.8 760.3,499.6C764.1,499.4 769.2,499.0 773.7,500.6C778.2,502.1 783.0,505.5 787.2,508.8C791.3,512.1 795.3,516.2 798.7,520.3C802.1,524.5 805.1,529.3 807.3,533.8C809.6,538.3 811.3,542.7 812.1,547.2C813.0,551.7 813.8,557.3 812.5,560.7C811.2,564.1 807.7,566.6 804.5,567.6C801.2,568.6 796.8,566.2 792.9,566.8C789.1,567.5 784.9,569.3 781.4,571.4C777.9,573.6 774.5,577.2 771.8,579.9C769.1,582.6 767.2,585.0 765.1,587.6C763.0,590.1 761.6,593.8 759.3,595.3C757.1,596.7 754.0,596.7 751.6,596.4C749.3,596.1 746.7,595.8 745.3,593.7C743.9,591.7 745.0,587.0 743.4,584.1C741.8,581.2 738.6,578.7 735.7,576.4C732.7,574.2 729.3,571.8 725.7,570.7C722.1,569.5 717.6,569.1 714.2,569.5C710.7,570.0 707.6,573.2 705.0,573.4C702.3,573.5 699.7,572.4 698.0,570.3C696.4,568.2 695.3,564.8 695.0,560.7Z" fill="none" stroke="#000" stroke-opacity=".6" stroke-width="3.5"/></g></g></g><rect x="720" y="583" width="70" height="16" fill="#000" opacity=".8" filter="url(#cos2R)"/><line x1="724.5" y1="552.5" x2="596" y2="552.5" stroke="#4343cc" stroke-width="2" stroke-dasharray="8 8" stroke-dashoffset="8"/><line x1="740.5" y1="552.5" x2="904" y2="552.5" stroke="#4343cc" stroke-width="2" stroke-dasharray="8 8" stroke-dashoffset="8"/><line x1="732.5" y1="544.5" x2="732.5" y2="375" stroke="#4343cc" stroke-width="2" stroke-dasharray="8 8" stroke-dashoffset="8"/><line x1="732.5" y1="560.5" x2="732.5" y2="729" stroke="#4343cc" stroke-width="2" stroke-dasharray="8 8" stroke-dashoffset="8"/><path d="M724.5,552.5 H740.5 M732.5,544.5 V560.5" stroke="#5a5aee" stroke-width="2" fill="none"/><text x="576.5" y="409.7" textLength="29" lengthAdjust="spacingAndGlyphs" font-size="11.7" fill="#50c000" font-family='"Liberation Sans", sans-serif' >norm</text><text x="746.4" y="409" textLength="8.5" lengthAdjust="spacingAndGlyphs" font-size="12.7" font-weight="700" fill="#f7b900" font-family='"Liberation Serif", serif' >S</text><text x="576.4" y="556" textLength="11.0" lengthAdjust="spacingAndGlyphs" font-size="12.7" font-weight="700" fill="#f7b900" font-family='"Liberation Serif", serif' >R</text><text x="915.4" y="556" textLength="10.2" lengthAdjust="spacingAndGlyphs" font-size="12.7" font-weight="700" fill="#f7b900" font-family='"Liberation Serif", serif' >L</text><text x="745.9" y="704" textLength="10.4" lengthAdjust="spacingAndGlyphs" font-size="13.4" font-weight="700" fill="#f7b900" font-family='"Liberation Mono", monospace' >I</text><line x1="803.5" y1="700.5" x2="926.7" y2="700.5" stroke="#50c000" stroke-width="2" /><line x1="803.5" y1="695.0" x2="803.5" y2="706.0" stroke="#50c000" stroke-width="2" /><line x1="926.7" y1="695.0" x2="926.7" y2="706.0" stroke="#50c000" stroke-width="2" /><text x="842.5" y="694.5" textLength="34" lengthAdjust="spacingAndGlyphs" font-size="12" fill="#50c000" font-family='"Liberation Sans", sans-serif' >10 cm</text></g><g transform="translate(936,398)"><rect x=".5" y=".5" width="12" height="12" fill="#fff" stroke="#5a5a5a"/><rect x="0" y="0" width="13" height="2.5" fill="#777"/><path d="M13.5,1 V13.5 H1" stroke="#9a9a9a" fill="none"/><text x="3.1" y="11.1" textLength="6.9" lengthAdjust="spacingAndGlyphs" font-size="9.8" fill="#4c4c4c" font-family='"Liberation Sans", sans-serif' >C</text></g><g transform="translate(937.5,422.5)"><path d="M1,2 H3 L3.6,0.6 H6.6 L7.2,2 H9.2 Q10,2 10,2.8 V7.4 Q10,8.2 9.2,8.2 H1 Q.2,8.2 .2,7.4 V2.8 Q.2,2 1,2Z" fill="#fff" stroke="#111" stroke-width="1.1"/><circle cx="5.1" cy="5" r="1.9" fill="#fff" stroke="#222" stroke-width="1.2"/></g><rect x="936" y="439" width="14" height="270" fill="#e6e6e6" /><line x1="936.5" y1="439" x2="936.5" y2="709" stroke="#c3c3c3" stroke-width="1" /><rect x="937" y="439" width="13" height="13" fill="#fbfbfb" /><line x1="937" y1="452.5" x2="950" y2="452.5" stroke="#c9c9c9" stroke-width="1" /><path d="M939.5,447.5 L947.5,447.5 L943.5,443.5Z" fill="#555"/><rect x="937" y="696" width="13" height="13" fill="#fbfbfb" /><line x1="937" y1="695.5" x2="950" y2="695.5" stroke="#c9c9c9" stroke-width="1" /><path d="M939.5,700.5 L947.5,700.5 L943.5,704.5Z" fill="#555"/><rect x="937" y="600" width="13" height="26.5" fill="url(#thumbR)" /><line x1="937" y1="599.5" x2="950" y2="599.5" stroke="#c9c9c9" stroke-width="1" /><line x1="937" y1="627.0" x2="950" y2="627.0" stroke="#c9c9c9" stroke-width="1" /><rect x="795.5" y="712.5" width="70" height="19" fill="url(#btnR)" stroke="#b4b4b4" stroke-width="1" rx="3" /><text x="802" y="726" textLength="57" lengthAdjust="spacingAndGlyphs" font-size="12.6" fill="#000" font-family='"Liberation Sans", sans-serif' >zoom to fit</text><text x="890.5" y="726" textLength="52.5" lengthAdjust="spacingAndGlyphs" font-size="11.8" fill="#000" font-family='"Liberation Sans", sans-serif' >175 of 256</text><rect x="186" y="394" width="383" height="316" fill="#fff" /><rect x="187" y="395" width="381" height="314" fill="#000" /><line x1="377.5" y1="465" x2="377.5" y2="637" stroke="#4a4ad8" stroke-width="1.2" /><line x1="322" y1="551.6" x2="496" y2="551.6" stroke="#4848d4" stroke-width="1.9" /><rect x="196.5" y="711.5" width="50" height="19" fill="url(#btnR)" stroke="#b4b4b4" stroke-width="1" rx="3" /><text x="203" y="725" textLength="36" lengthAdjust="spacingAndGlyphs" font-size="12.6" fill="#000" font-family='"Liberation Sans", sans-serif' >update</text><rect x="478.5" y="714.5" width="5" height="4.4" fill="#5c5c5c"/><rect x="478.5" y="718.9" width="5" height="4.2" fill="#8e8e8e"/><rect x="478.5" y="723.1" width="5" height="4.2" fill="#d0d0d0"/><text x="471" y="718.4" textLength="6" lengthAdjust="spacingAndGlyphs" font-size="4.6" fill="#8a8a8a" font-family='"Liberation Sans", sans-serif' >2.0</text><text x="471.4" y="727.2" textLength="5.6" lengthAdjust="spacingAndGlyphs" font-size="4.6" fill="#8a8a8a" font-family='"Liberation Sans", sans-serif' >1.0</text><g transform="translate(494,714)"><rect x=".5" y=".5" width="12" height="12" fill="#fff" stroke="#555"/><rect x="0" y="0" width="13" height="2.6" fill="#6f6f6f"/><path d="M13.5,1 V13.5 H1" stroke="#a8a8a8" fill="none"/><text x="2" y="11.2" textLength="9" lengthAdjust="spacingAndGlyphs" font-size="7.6" fill="#666" font-family='"Liberation Sans", sans-serif' >3D</text></g><g transform="translate(519.8,716.2)"><path d="M1,2 H3 L3.6,0.6 H6.6 L7.2,2 H9.2 Q10,2 10,2.8 V7.4 Q10,8.2 9.2,8.2 H1 Q.2,8.2 .2,7.4 V2.8 Q.2,2 1,2Z" fill="#fff" stroke="#111" stroke-width="1.1"/><circle cx="5.1" cy="5" r="1.9" fill="#fff" stroke="#222" stroke-width="1.2"/></g><path d="M544.2,719.2 L548.9,722.8 L553.6,719.2" stroke="#5d5d78" stroke-width="2.2" fill="none" stroke-linejoin="miter"/><line x1="957.5" y1="0" x2="957.5" y2="729" stroke="#6b6b6b" stroke-width="1" />
</svg>
<svg width="958" height="729" viewBox="0 0 958 729" style="left:0;top:0">
<defs>
<linearGradient id="tbL" x1="0" y1="0" x2="0" y2="1"><stop offset="0" stop-color="#ececec"/><stop offset=".5" stop-color="#d8d8d8"/><stop offset="1" stop-color="#e9e9e9"/></linearGradient>
<linearGradient id="selL" x1="0" y1="0" x2="0" y2="1"><stop offset="0" stop-color="#d3e2f7"/><stop offset=".47" stop-color="#c0cee3"/><stop offset=".53" stop-color="#b2bed2"/><stop offset="1" stop-color="#e0daee"/></linearGradient>
<linearGradient id="btnL" x1="0" y1="0" x2="0" y2="1"><stop offset="0" stop-color="#ffffff"/><stop offset="1" stop-color="#ececec"/></linearGradient>
<linearGradient id="hdrL" x1="0" y1="0" x2="0" y2="1"><stop offset="0" stop-color="#ffffff"/><stop offset="1" stop-color="#eeeeee"/></linearGradient>
<linearGradient id="thumbL" x1="0" y1="0" x2="1" y2="0"><stop offset="0" stop-color="#ffffff"/><stop offset="1" stop-color="#f0f0f0"/></linearGradient>
</defs><rect x="0" y="0" width="958" height="740" fill="#efefef" /><rect x="0" y="0" width="958" height="28" fill="#ffffff" /><g><linearGradient id="bird" x1="0" y1="0" x2="1" y2="1"><stop offset="0" stop-color="#e80000"/><stop offset=".6" stop-color="#d80000"/><stop offset="1" stop-color="#5a0000"/></linearGradient><path d="M5,7.2 C5.6,5.8 7.2,5.6 8.6,6.4 C9.6,5 11.6,4.6 12.8,5.6 C15.4,7 18,10.4 19.6,14 C20.4,15.8 20.8,17.4 20.8,18.8 L19.2,18.8 C18.8,16.2 17.4,13.2 15.4,11.2 L14.2,10.8 C14.2,12.6 13.4,14.2 12.8,15.6 L15.8,18 L14.8,18.9 L11.2,17.4 L9.3,17.3 L9.5,16.2 L11.6,15.3 C12.2,13.8 12.4,12.4 12,11.4 C10.8,10.8 9.6,10 9,8.8 C7.8,8 6.4,7.6 5,7.2Z" fill="url(#bird)"/><path d="M9.6,6.2 C10.6,5.2 12,5.4 12.6,6.4 C11.8,7.4 10.4,7.4 9.6,6.2Z" fill="#4a0505" opacity=".85"/></g><text x="26" y="17" textLength="306" lengthAdjust="spacingAndGlyphs" font-size="11.9" fill="#000" font-family='"Liberation Sans", sans-serif' >norm_minmax.nii.gz - New Segmentation - ITK-SNAP</text><line x1="838" y1="12.5" x2="848" y2="12.5" stroke="#000" stroke-width="1" /><rect x="883.5" y="7.5" width="9" height="9" fill="none" stroke="#000" stroke-width="1" /><path d="M929,7 L939,17 M939,7 L929,17" stroke="#000" stroke-width="1.1" fill="none"/><rect x="0" y="28" width="958" height="21.5" fill="#efefef" /><line x1="0" y1="49.5" x2="958" y2="49.5" stroke="#dcdcdc" stroke-width="1" /><line x1="0" y1="50.5" x2="958" y2="50.5" stroke="#f6f6f6" stroke-width="1" /><text x="7" y="43" textLength="20" lengthAdjust="spacingAndGlyphs" font-size="13.9" fill="#000" font-family='"Liberation Sans", sans-serif' >File</text><text x="41" y="43" textLength="23" lengthAdjust="spacingAndGlyphs" font-size="13.9" fill="#000" font-family='"Liberation Sans", sans-serif' >Edit</text><text x="78" y="43" textLength="86" lengthAdjust="spacingAndGlyphs" font-size="13.9" fill="#000" font-family='"Liberation Sans", sans-serif' >Segmentation</text><text x="178" y="43" textLength="68" lengthAdjust="spacingAndGlyphs" font-size="13.9" fill="#000" font-family='"Liberation Sans", sans-serif' >Workspace</text><text x="260" y="43" textLength="30" lengthAdjust="spacingAndGlyphs" font-size="13.9" fill="#000" font-family='"Liberation Sans", sans-serif' >Tools</text><text x="304" y="43" textLength="28" lengthAdjust="spacingAndGlyphs" font-size="13.9" fill="#000" font-family='"Liberation Sans", sans-serif' >Help</text><text x="1.5" y="63.7" textLength="111" lengthAdjust="spacingAndGlyphs" font-size="13.2" fill="#000" font-family='"Liberation Sans", sans-serif' >ITK-SNAP Toolbox</text><g transform="translate(168,54)" fill="none" stroke="#7d7d7d" stroke-width="1"><rect x=".5" y=".5" width="10" height="10" rx="2"/><rect x="4.5" y="2.5" width="4" height="4" rx=".8"/><rect x="2.5" y="4.5" width="4" height="4" rx=".8" fill="#f0f0f0"/></g><text x="4.5" y="86" textLength="80.5" lengthAdjust="spacingAndGlyphs" font-size="12.8" font-weight="700" fill="#000" font-family='"Liberation Sans", sans-serif' >Main Toolbar</text><rect x="3.5" y="90.5" width="173" height="71" fill="none" stroke="#f8f8f8" stroke-width="1" rx="2.5" /><rect x="2.5" y="89.5" width="173" height="71" fill="#e2e2e2" stroke="#878787" stroke-width="1" rx="2.5" /><rect x="3.5" y="90.5" width="171" height="69" fill="none" stroke="#e8e8e8" stroke-width="1" rx="1.8" /><rect x="8" y="96" width="162" height="29" fill="url(#tbL)" /><line x1="8" y1="95.5" x2="170" y2="95.5" stroke="#c2c2c2" stroke-width="1" /><line x1="8" y1="125.5" x2="170" y2="125.5" stroke="#c2c2c2" stroke-width="1" /><rect x="8" y="96" width="27" height="29" fill="url(#selL)" /><rect x="8" y="131" width="162" height="23" fill="url(#tbL)" /><line x1="8" y1="130.5" x2="170" y2="130.5" stroke="#c2c2c2" stroke-width="1" /><line x1="8" y1="154.5" x2="170" y2="154.5" stroke="#c2c2c2" stroke-width="1" /><path d="M10,108 H14.9 M17.2,108 H23.1 M25.0,108 H31.8" stroke="#6f7177" stroke-width="1.9" fill="none"/><path d="M19,99 V104.0 M19,106.6 V111.6 M19,113.7 V120" stroke="#6f7177" stroke-width="1.9" fill="none"/><circle cx="19" cy="108" r="1.3" fill="#5a5d66"/><path transform="translate(21.4,110.1) scale(1.0)" d="M0,0 L8.4,4.4 L5.2,5.2 L7.4,8.8 L5.6,9.8 L3.5,6.2 L1.3,8.6 Z" fill="#c9cfdc" stroke="#1d2628" stroke-width="1.15" stroke-linejoin="round"/><line x1="47.3" y1="111.0" x2="39.4" y2="117.0" stroke="#1f3434" stroke-width="3.6" stroke-linecap="round"/><line x1="46.6" y1="111.5" x2="39.6" y2="116.8" stroke="#dfe5e5" stroke-width="1.5" stroke-linecap="round"/><circle cx="51.9" cy="107.5" r="4.8999999999999995" fill="#dfe2e2" stroke="#1f3434" stroke-width="1.7"/><path d="M48.8,106.9 A3.4,3.4 0 0 1 52.7,104.3" stroke="#1f3434" stroke-width=".9" fill="none"/><path d="M47.7,110.0 A5.0,5.0 0 0 0 56.4,109.5" stroke="#1f3434" stroke-width="1.2" fill="none" opacity=".7"/><path d="M73.9,101.7 L81.8,104.7 L82.5,113.4 L78.1,118.5 L66.9,113.1 L73.2,108.9Z" fill="none" stroke="#1f3434" stroke-width="1.15"/><circle cx="73.9" cy="101.7" r="1.55" fill="#0c1414"/><circle cx="81.8" cy="104.7" r="1.55" fill="#0c1414"/><circle cx="82.5" cy="113.4" r="1.55" fill="#0c1414"/><circle cx="78.1" cy="118.5" r="1.55" fill="#0c1414"/><circle cx="66.9" cy="113.1" r="1.55" fill="#0c1414"/><circle cx="73.2" cy="108.9" r="1.55" fill="#0c1414"/><path d="M109.8,102.2 L107.2,101.4 L102.2,108.6 L105.4,110 Z" fill="#6e6e6e" opacity=".7"/><path d="M108.8,102.4 L103.6,109.4 M107.6,101.9 L102.8,108.8" stroke="#3c3c3c" stroke-width=".6" fill="none" opacity=".7"/><path d="M102.4,108.4 L105.6,110 L102.8,113.4 L99.8,111.6 Z" fill="#f2f2f2" stroke="#4a4a4a" stroke-width=".5"/><path d="M99.6,111.2 L103,113.2 L100.4,117 L92.8,117.3 C95.8,115.8 98,113.8 99.6,111.2Z" fill="#181818"/><path d="M128.2,100.6 V119.4" stroke="#1f3434" stroke-width="2.6" stroke-linecap="round"/><path d="M128.2,101.2 V118.8" stroke="#cfe0e0" stroke-width=".9" stroke-linecap="round"/><path d="M136.6,107.4 C136.8,103.4 132.6,101.6 128.2,102.6 C122.2,103.6 121.4,109.2 126.6,110.6 C131.6,111.8 134.4,113.2 132.4,116 C130.4,118 125.6,117.2 122.2,115.4" fill="none" stroke="#1f3434" stroke-width="3" stroke-linecap="round"/><path d="M136.6,107.4 C136.8,103.4 132.6,101.6 128.2,102.6 C122.2,103.6 121.4,109.2 126.6,110.6 C131.6,111.8 134.4,113.2 132.4,116 C130.4,118 125.6,117.2 122.2,115.4" fill="none" stroke="#cfe0e0" stroke-width="1" stroke-linecap="round"/><circle cx="136.4" cy="107.6" r="1.2" fill="#1f3434"/><path d="M155.7,101.2 L149.7,118.2" stroke="#1f3434" stroke-width="1.2"/><path d="M152.7,99.6 L158.9,102.6 M146.4,116.6 L152.8,119.8" stroke="#1f3434" stroke-width="1.3"/><circle cx="154.7" cy="104" r="1.3" fill="#0b1010"/><circle cx="152.6" cy="110" r="1.9" fill="#0b1010"/><circle cx="150.4" cy="115.8" r="1.4" fill="#0b1010"/><text x="155.2" y="117" textLength="9.6" lengthAdjust="spacingAndGlyphs" font-size="7.8" font-weight="700" fill="#1b2424" font-family='"Liberation Sans", sans-serif' >Ab</text><path d="M12.1,140 L18.6,134.9 L18.6,138.2 C24.4,138 27.8,141.6 27.8,148.6 C26.6,144.2 23.6,142.2 18.6,142.2 L18.6,145.2 Z" fill="#838383"/><path d="M12.1,140 L18.6,134.9 L18.6,138.2 C24.4,138 27.8,141.6 27.8,148.6 C26.6,144.2 23.6,142.2 18.6,142.2 L18.6,145.2 Z" fill="#838383" transform="translate(66,0) scale(-1,1)"/><path d="M72.2,147.6 L79.6,142.4 L88,143.4 L80.6,149.2 Z" fill="#fff" stroke="#000" stroke-width="1.3" stroke-linejoin="round"/><path d="M72.2,143.79999999999998 L79.6,138.6 L88,139.6 L80.6,145.39999999999998 Z" fill="#fff" stroke="#000" stroke-width="1.3" stroke-linejoin="round"/><path d="M72.2,139.6 L79.6,134.4 L88,135.4 L80.6,141.2 Z" fill="#000" stroke="#000" stroke-width="1.3" stroke-linejoin="round"/><rect x="111.6" y="139.6" width="9.2" height="9.2" fill="#fff" stroke="#000" stroke-width="1.2"/><path d="M112.4,147 H117 L120,143" stroke="#000" stroke-width=".9" fill="none"/><rect x="108.6" y="136.6" width="9" height="9" fill="#ff0000" stroke="#0a1a1a" stroke-width="1.2"/><path d="M122.2,144.6 H128.8 L125.5,148 Z" fill="#6a6a6a"/><path d="M146.4,134 C151,133.6 154,136.4 153.6,139.4 C153.2,142 150.2,142.4 149.8,144.4 C150.6,147.6 148.6,150.2 145.6,149.8 C141.2,149.4 138.6,145.2 139.4,140.6 C140,137 142.6,134.4 146.4,134 Z" fill="#000"/><circle cx="146.6" cy="136.7" r="1.15" fill="#f4f4f4"/><circle cx="150.4" cy="138.7" r="1.15" fill="#f4f4f4"/><circle cx="142.9" cy="138.6" r="1.15" fill="#f4f4f4"/><circle cx="142.3" cy="142.9" r="1.15" fill="#f4f4f4"/><circle cx="146.8" cy="146.6" r="1.45" fill="#f4f4f4"/><text x="4.5" y="185" textLength="100.5" lengthAdjust="spacingAndGlyphs" font-size="12.8" font-weight="700" fill="#000" font-family='"Liberation Sans", sans-serif' >Cursor Inspector</text><rect x="3.5" y="189.5" width="173" height="310" fill="none" stroke="#f8f8f8" stroke-width="1" rx="2.5" /><rect x="2.5" y="188.5" width="173" height="310" fill="#e2e2e2" stroke="#878787" stroke-width="1" rx="2.5" /><rect x="3.5" y="189.5" width="171" height="308" fill="none" stroke="#e8e8e8" stroke-width="1" rx="1.8" /><rect x="8" y="195" width="162" height="27.5" fill="url(#tbL)" /><line x1="8" y1="194.5" x2="170" y2="194.5" stroke="#c2c2c2" stroke-width="1" /><line x1="8" y1="223.0" x2="170" y2="223.0" stroke="#c2c2c2" stroke-width="1" /><rect x="8" y="195" width="29" height="27.5" fill="url(#selL)" /><path d="M11,207 H15.9 M18.3,207 H24.2 M26.2,207 H33" stroke="#6f7177" stroke-width="1.9" fill="none"/><path d="M19.9,198 V203.0 M19.9,205.6 V210.6 M19.9,212.7 V219" stroke="#6f7177" stroke-width="1.9" fill="none"/><circle cx="19.9" cy="207" r="1.3" fill="#5a5d66"/><path transform="translate(22.3,209) scale(1.0)" d="M0,0 L8.4,4.4 L5.2,5.2 L7.4,8.8 L5.6,9.8 L3.5,6.2 L1.3,8.6 Z" fill="#c9cfdc" stroke="#1d2628" stroke-width="1.15" stroke-linejoin="round"/><line x1="50.2" y1="210.6" x2="42.8" y2="216.0" stroke="#1f3434" stroke-width="3.6" stroke-linecap="round"/><line x1="49.5" y1="211.0" x2="43.0" y2="215.8" stroke="#dfe5e5" stroke-width="1.5" stroke-linecap="round"/><circle cx="55" cy="207" r="5.1" fill="#dfe2e2" stroke="#1f3434" stroke-width="1.7"/><path d="M51.8,206.4 A3.5,3.5 0 0 1 55.9,203.6" stroke="#1f3434" stroke-width=".9" fill="none"/><path d="M50.6,209.6 A5.2,5.2 0 0 0 59.6,209.0" stroke="#1f3434" stroke-width="1.2" fill="none" opacity=".7"/><rect x="74.5" y="203.6" width="10.4" height="10" rx="1" fill="#6e6e6e"/><rect x="75.6" y="205.9" width="3.7" height="2.9" fill="#fff"/><rect x="80.3" y="205.9" width="3.7" height="2.9" fill="#fff"/><rect x="75.6" y="209.8" width="3.7" height="2.9" fill="#fff"/><rect x="80.3" y="209.8" width="3.7" height="2.9" fill="#fff"/><path d="M104.4,206.5 A4.2,4.2 0 1 1 112.2,206.5" stroke="#3b6fc4" stroke-width="1.1" fill="none" opacity="0.9"/><path d="M102.5,207.5 A6.2,6.2 0 1 1 114.1,207.5" stroke="#3b6fc4" stroke-width="1.1" fill="none" opacity="0.65"/><path d="M100.6,208.5 A8.2,8.2 0 1 1 116.0,208.5" stroke="#3b6fc4" stroke-width="1.1" fill="none" opacity="0.35"/><path d="M108.3,206.4 L102.7,218.2 L104.7,218.2 L108.3,212.4 L111.89999999999999,218.2 L113.89999999999999,218.2 Z" fill="#fafafa" stroke="#777" stroke-width=".9"/><path d="M104.7,214 Q108.3,210.5 111.89999999999999,214 M103.5,217.4 Q108.3,213 113.1,217.4" stroke="#888" stroke-width=".8" fill="none"/><circle cx="108.3" cy="204.4" r="2.2" fill="#f2f2f2" stroke="#888" stroke-width=".9"/><text x="8.5" y="242" textLength="128.5" lengthAdjust="spacingAndGlyphs" font-size="13.2" fill="#000" font-family='"Liberation Sans", sans-serif' >Cursor position (x,y,z):</text><rect x="8.5" y="248.5" width="50" height="19" fill="#ffffff" stroke="#c4c4c4" stroke-width="1" rx="2.5" /><text x="13.5" y="261" textLength="17.5" lengthAdjust="spacingAndGlyphs" font-size="11.6" fill="#000" font-family='"Liberation Sans", sans-serif' >113</text><rect x="63.5" y="248.5" width="50" height="19" fill="#ffffff" stroke="#c4c4c4" stroke-width="1" rx="2.5" /><text x="68.5" y="261" textLength="17.5" lengthAdjust="spacingAndGlyphs" font-size="11.6" fill="#000" font-family='"Liberation Sans", sans-serif' >129</text><rect x="119.5" y="248.5" width="50" height="19" fill="#ffffff" stroke="#c4c4c4" stroke-width="1" rx="2.5" /><text x="124.5" y="261" textLength="17.5" lengthAdjust="spacingAndGlyphs" font-size="11.6" fill="#000" font-family='"Liberation Sans", sans-serif' >175</text><text x="8.5" y="290" textLength="129.5" lengthAdjust="spacingAndGlyphs" font-size="13.2" fill="#000" font-family='"Liberation Sans", sans-serif' >Intensity under cursor:</text><rect x="8.5" y="301.5" width="159" height="119" fill="#ffffff" stroke="#bdbdbd" stroke-width="1" /><rect x="9" y="302" width="158" height="19" fill="url(#hdrL)" /><line x1="9" y1="321.5" x2="167" y2="321.5" stroke="#c9c9c9" stroke-width="1" /><line x1="100.5" y1="302" x2="100.5" y2="337" stroke="#c9c9c9" stroke-width="1" /><line x1="9" y1="337.5" x2="167" y2="337.5" stroke="#c9c9c9" stroke-width="1" /><line x1="167.5" y1="322" x2="167.5" y2="337" stroke="#c9c9c9" stroke-width="1" /><text x="39" y="317" textLength="31" lengthAdjust="spacingAndGlyphs" font-size="13.2" fill="#000" font-family='"Liberation Sans", sans-serif' >Layer</text><text x="110" y="317" textLength="48.5" lengthAdjust="spacingAndGlyphs" font-size="13.2" fill="#000" font-family='"Liberation Sans", sans-serif' >Intensity</text><text x="12" y="333" textLength="72" lengthAdjust="spacingAndGlyphs" font-size="10.6" font-weight="700" fill="#000" font-family='"Liberation Sans", sans-serif' >norm_minmax</text><rect x="106.5" y="325.5" width="7" height="7" fill="#808080" stroke="#202020" stroke-width="1" /><text x="122" y="333" textLength="26" lengthAdjust="spacingAndGlyphs" font-size="10.8" fill="#000" font-family='"Liberation Sans", sans-serif' >0.498</text><text x="8.5" y="436" textLength="112" lengthAdjust="spacingAndGlyphs" font-size="13.2" fill="#000" font-family='"Liberation Sans", sans-serif' >Label under cursor:</text><rect x="8.5" y="441.5" width="40" height="20" fill="#ffffff" stroke="#c4c4c4" stroke-width="1" rx="2.5" /><text x="13" y="455" textLength="6" lengthAdjust="spacingAndGlyphs" font-size="11.6" fill="#000" font-family='"Liberation Sans", sans-serif' >0</text><rect x="53.5" y="441.5" width="116" height="20" fill="#ffffff" stroke="#c4c4c4" stroke-width="1" rx="2.5" /><text x="56.5" y="455" textLength="56.5" lengthAdjust="spacingAndGlyphs" font-size="11.9" fill="#000" font-family='"Liberation Sans", sans-serif' >Clear Label</text><text x="4.5" y="523" textLength="128" lengthAdjust="spacingAndGlyphs" font-size="12.8" font-weight="700" fill="#000" font-family='"Liberation Sans", sans-serif' >Segmentation Labels</text><rect x="3.5" y="527.5" width="173" height="133" fill="none" stroke="#f8f8f8" stroke-width="1" rx="2.5" /><rect x="2.5" y="526.5" width="173" height="133" fill="#e2e2e2" stroke="#878787" stroke-width="1" rx="2.5" /><rect x="3.5" y="527.5" width="171" height="131" fill="none" stroke="#e8e8e8" stroke-width="1" rx="1.8" /><text x="8.5" y="545" textLength="69" lengthAdjust="spacingAndGlyphs" font-size="13.2" fill="#000" font-family='"Liberation Sans", sans-serif' >Active label:</text><rect x="8.5" y="548.5" width="161" height="19" fill="url(#btnL)" stroke="#bdbdbd" stroke-width="1" rx="3" /><path d="M153.5,556.0 L161.5,556.0 L157.5,560.5Z" fill="#555"/><rect x="16.5" y="552.5" width="11" height="11" fill="#ff0000" stroke="#202020" stroke-width="1" /><text x="36" y="563" textLength="41" lengthAdjust="spacingAndGlyphs" font-size="13.2" fill="#000" font-family='"Liberation Sans", sans-serif' >Label 1</text><text x="8.5" y="587" textLength="61" lengthAdjust="spacingAndGlyphs" font-size="13.2" fill="#000" font-family='"Liberation Sans", sans-serif' >Paint over:</text><rect x="8.5" y="590.5" width="161" height="19" fill="url(#btnL)" stroke="#bdbdbd" stroke-width="1" rx="3" /><path d="M153.5,598.0 L161.5,598.0 L157.5,602.5Z" fill="#555"/><rect x="16.5" y="594.5" width="11" height="11" fill="#ffffff" stroke="#202020" stroke-width="1" /><line x1="17" y1="605" x2="27" y2="595" stroke="#202020" stroke-width="1" /><text x="36" y="605" textLength="52" lengthAdjust="spacingAndGlyphs" font-size="13.2" fill="#000" font-family='"Liberation Sans", sans-serif' >All labels</text><text x="8.5" y="629" textLength="122" lengthAdjust="spacingAndGlyphs" font-size="13.2" fill="#000" font-family='"Liberation Sans", sans-serif' >Overall label opacity:</text><rect x="8.5" y="633.5" width="28" height="19" fill="#ffffff" stroke="#c4c4c4" stroke-width="1" rx="2.5" /><text x="13" y="646" textLength="12" lengthAdjust="spacingAndGlyphs" font-size="11.6" fill="#000" font-family='"Liberation Sans", sans-serif' >50</text><rect x="42" y="640.5" width="126" height="4" fill="#dedede" stroke="#bcbcbc" stroke-width="0.8" rx="2" /><rect x="42" y="640.5" width="62" height="4" fill="#1e82e0" stroke="#1768b8" stroke-width="0.8" rx="2" /><rect x="100" y="636.5" width="11" height="12" fill="#fdfdfd" stroke="#a0a0a0" stroke-width="1" rx="2.5" /><text x="4.5" y="684" textLength="67" lengthAdjust="spacingAndGlyphs" font-size="12.8" font-weight="700" fill="#000" font-family='"Liberation Sans", sans-serif' >3D Toolbar</text><rect x="3.5" y="688.5" width="173" height="49" fill="none" stroke="#f8f8f8" stroke-width="1" rx="2.5" /><rect x="2.5" y="687.5" width="173" height="49" fill="#e2e2e2" stroke="#878787" stroke-width="1" rx="2.5" /><rect x="3.5" y="688.5" width="171" height="47" fill="none" stroke="#e8e8e8" stroke-width="1" rx="1.8" /><rect x="8" y="694" width="162" height="29" fill="url(#tbL)" /><line x1="8" y1="693.5" x2="170" y2="693.5" stroke="#c2c2c2" stroke-width="1" /><line x1="8" y1="723.5" x2="170" y2="723.5" stroke="#c2c2c2" stroke-width="1" /><rect x="8" y="694" width="29" height="29" fill="url(#selL)" /><path d="M22.5,697 V718.8 M12,708.3 H31.4" stroke="#0a0a0a" stroke-width="1.3" fill="none"/><path d="M28.6,702 L14.2,717.4" stroke="#222" stroke-width=".7"/><path d="M17.4,703.8 C24,702.2 29.4,705.4 28.6,710 C27.8,714 22.6,715.6 17.6,715.2" fill="none" stroke="#1f3434" stroke-width="3.1" stroke-linecap="round"/><path d="M17.4,703.8 C24,702.2 29.4,705.4 28.6,710 C27.8,714 22.6,715.6 17.6,715.2" fill="none" stroke="#b8cccc" stroke-width="1.1" stroke-linecap="round"/><path d="M16.4,702.8 h4.2 v2 h-4.2 z" fill="#0a0a0a"/><path d="M14.2,715.2 L19.8,711.6 L19.8,718.4 Z" fill="#d8e2e2" stroke="#1f3434" stroke-width="1.1" stroke-linejoin="round"/><path d="M49,697 V704 M49,708 V711 M49,713.4 V718.2" stroke="#6f7177" stroke-width="1.9"/><path d="M40,706 H44.8 M47,706 H53 M55,706 H62" stroke="#6f7177" stroke-width="1.9"/><path d="M52.8,702.2 L51.2,703.8 M47,708 L42.2,712.8" stroke="#111" stroke-width=".8"/><path d="M47.4,707.4 L50.2,704.6" stroke="#111" stroke-width="1.6"/><path transform="translate(51.6,708.2)" d="M0,0 L8.2,4.4 L5,5.2 L7.2,8.8 L5.4,9.6 L3.4,6.2 L1.3,8.4 Z" fill="#c9d6d6" stroke="#1d2628" stroke-width="1.15" stroke-linejoin="round"/><g fill="none" stroke="#1f3434" stroke-width="1.2" stroke-linejoin="round"><path d="M75.2,702.4 L83.2,705.4 L77.8,717.6 L71.6,716.4 Q69.2,715.4 70,713 Z" fill="#d6dcdc"/><path d="M75.2,702.4 Q79,699.6 84.4,702.8 L83.2,705.4" fill="#ccd4d4"/><path d="M80.6,699.6 L82.4,698.6 L84.6,701.2 L83.6,702.4" fill="#ccd4d4"/><path d="M77.4,709.2 L80.8,710.4 L79,714.8 L75.4,713.6 Z"/></g><path d="M85.4,701.8 L90.6,702.2 M85.4,702.6 L90.8,704.6 M85.2,703.4 L89.4,707" stroke="#1f3434" stroke-width="1.1"/><path d="M99.6,717 L112,704.6 L114.2,706.4 Q112.6,715.6 103.6,717.4 Z" fill="#cfd6d6" stroke="#1f3434" stroke-width="1.2" stroke-linejoin="round"/><path d="M111.6,704.8 L115.4,700.6 L118.4,702.8 L114.4,706.6 M114.6,701 L116.6,699.6 M117.2,702.6 L119,701.4 M113,703.4 L116,705.6" stroke="#1f3434" stroke-width="1.2" fill="none"/><path d="M105.6,714.4 Q108.6,713.6 109.8,711.2" stroke="#1f3434" stroke-width=".9" fill="none"/><clipPath id="cvLa"><rect x="187" y="54" width="359" height="315"/></clipPath><rect x="186" y="53" width="361" height="317" fill="#fff" /><rect x="187" y="54" width="359" height="315" fill="#000" /><g clip-path="url(#cvLa)"><g opacity="1.0"><clipPath id="axL"><path d="M368.8,124.0C366.3,124.0 364.1,121.3 359.9,120.6C355.7,119.8 349.0,118.8 343.8,119.6C338.5,120.4 332.9,122.4 328.3,125.4C323.7,128.4 319.5,132.2 316.3,137.7C313.2,143.2 311.5,151.5 309.5,158.3C307.4,165.2 306.3,171.5 304.3,178.9C302.3,186.3 299.3,194.3 297.4,202.9C295.6,211.5 293.6,221.8 293.3,230.4C293.0,238.9 293.9,246.4 295.7,254.4C297.6,262.4 300.6,270.4 304.3,278.4C308.0,286.4 312.9,295.0 318.0,302.4C323.2,309.8 329.5,317.6 335.2,323.0C340.9,328.4 346.6,332.4 352.3,334.6C358.1,336.9 363.8,336.6 369.5,336.7C375.2,336.8 380.3,337.3 386.6,335.0C392.9,332.7 400.9,328.4 407.2,323.0C413.5,317.6 419.8,309.8 424.4,302.4C428.9,295.0 431.8,287.0 434.7,278.4C437.5,269.8 440.2,259.5 441.5,250.9C442.8,242.4 443.1,234.9 442.6,226.9C442.0,218.9 440.3,210.9 438.1,202.9C435.9,194.9 431.5,186.3 429.5,178.9C427.5,171.5 427.8,164.6 426.1,158.3C424.4,152.0 422.4,146.0 419.2,141.2C416.1,136.3 412.1,132.4 407.2,129.2C402.4,125.9 395.5,123.0 390.1,121.6C384.6,120.2 378.2,120.5 374.6,120.9C371.1,121.3 371.3,124.1 368.8,124.0Z"/></clipPath><filter id="taxL" color-interpolation-filters="sRGB" filterUnits="userSpaceOnUse" x="281" y="108" width="173" height="241"><feTurbulence type="turbulence" baseFrequency="0.082" numOctaves="1" seed="7" result="t"/><feColorMatrix in="t" type="matrix" values="0 0 0 1 0  0 0 0 1 0  0 0 0 1 0  0 0 0 0 1" result="g0"/><feGaussianBlur in="g0" stdDeviation="0.75" result="g"/><feComponentTransfer in="g"><feFuncR type="table" tableValues="0.08 0.33 0.45 0.52 0.56 0.57 0.57 0.57 0.57 0.57 0.57"/><feFuncG type="table" tableValues="0.08 0.33 0.45 0.52 0.56 0.57 0.57 0.57 0.57 0.57 0.57"/><feFuncB type="table" tableValues="0.08 0.33 0.45 0.52 0.56 0.57 0.57 0.57 0.57 0.57 0.57"/></feComponentTransfer></filter><filter id="faxL" color-interpolation-filters="sRGB" filterUnits="userSpaceOnUse" x="281" y="108" width="173" height="241"><feGaussianBlur stdDeviation="0.6"/></filter><filter id="waxL" color-interpolation-filters="sRGB" filterUnits="userSpaceOnUse" x="281" y="108" width="173" height="241"><feGaussianBlur stdDeviation="5"/></filter><g filter="url(#faxL)"><g clip-path="url(#axL)"><rect x="281" y="108" width="173" height="241" filter="url(#taxL)"/><path d="M368.0,173.0C367.0,172.9 366.1,171.6 364.3,171.2C362.5,170.8 359.7,170.2 357.5,170.6C355.3,171.1 353.0,172.1 351.0,173.7C349.1,175.3 347.3,177.2 346.0,180.1C344.7,183.0 344.0,187.2 343.1,190.8C342.3,194.4 341.8,197.6 341.0,201.5C340.1,205.4 338.8,209.5 338.1,214.0C337.3,218.5 336.5,223.8 336.3,228.3C336.2,232.7 336.6,236.6 337.4,240.8C338.1,244.9 339.4,249.1 341.0,253.2C342.5,257.4 344.6,261.9 346.7,265.7C348.9,269.6 351.5,273.6 353.9,276.4C356.3,279.2 358.7,281.3 361.1,282.5C363.5,283.7 365.9,283.5 368.3,283.6C370.7,283.6 372.9,283.9 375.5,282.7C378.2,281.5 381.5,279.3 384.2,276.4C386.8,273.6 389.5,269.6 391.4,265.7C393.3,261.9 394.5,257.7 395.7,253.2C396.9,248.8 398.0,243.4 398.6,239.0C399.1,234.5 399.3,230.6 399.0,226.5C398.8,222.3 398.1,218.2 397.2,214.0C396.2,209.8 394.4,205.4 393.5,201.5C392.7,197.6 392.8,194.1 392.1,190.8C391.4,187.5 390.5,184.4 389.2,181.9C387.9,179.4 386.2,177.3 384.2,175.6C382.1,173.9 379.3,172.4 377.0,171.7C374.7,171.0 372.0,171.2 370.5,171.4C369.0,171.6 369.1,173.0 368.0,173.0Z" fill="#8f8f8f" opacity="1" filter="url(#waxL)"/><g><path d="M360.4,118.9 Q362.9,124.7 361.3,130.9" stroke="#626262" stroke-width="6.0" fill="none" stroke-linecap="round"/><path d="M339.0,119.2 Q340.8,127.1 343.2,134.9" stroke="#626262" stroke-width="6.0" fill="none" stroke-linecap="round"/><path d="M321.2,130.0 Q322.9,137.6 327.7,143.8" stroke="#626262" stroke-width="6.0" fill="none" stroke-linecap="round"/><path d="M311.2,147.9 Q316.9,152.4 319.2,159.3" stroke="#626262" stroke-width="6.0" fill="none" stroke-linecap="round"/><path d="M305.8,166.0 Q309.1,170.7 313.8,174.2" stroke="#626262" stroke-width="6.0" fill="none" stroke-linecap="round"/><path d="M302.1,179.7 Q310.6,182.6 315.7,190.0" stroke="#626262" stroke-width="6.0" fill="none" stroke-linecap="round"/><path d="M295.0,205.8 Q300.3,209.0 306.3,209.6" stroke="#626262" stroke-width="6.0" fill="none" stroke-linecap="round"/><path d="M292.9,219.5 Q301.2,218.4 308.8,221.8" stroke="#626262" stroke-width="6.0" fill="none" stroke-linecap="round"/><path d="M292.7,244.5 Q301.5,240.2 311.2,241.1" stroke="#626262" stroke-width="6.0" fill="none" stroke-linecap="round"/><path d="M296.9,263.5 Q303.1,258.6 310.9,257.0" stroke="#626262" stroke-width="6.0" fill="none" stroke-linecap="round"/><path d="M305.2,284.0 Q308.7,278.3 315.0,275.8" stroke="#626262" stroke-width="6.0" fill="none" stroke-linecap="round"/><path d="M313.4,298.0 Q318.4,291.8 323.5,285.7" stroke="#626262" stroke-width="6.0" fill="none" stroke-linecap="round"/><path d="M323.2,311.5 Q325.7,306.5 328.7,301.7" stroke="#626262" stroke-width="6.0" fill="none" stroke-linecap="round"/><path d="M339.5,328.2 Q342.1,320.3 344.3,312.2" stroke="#626262" stroke-width="6.0" fill="none" stroke-linecap="round"/><path d="M359.0,337.5 Q357.4,330.8 360.1,324.6" stroke="#626262" stroke-width="6.0" fill="none" stroke-linecap="round"/><path d="M373.5,338.3 Q375.4,329.3 372.7,320.6" stroke="#626262" stroke-width="6.0" fill="none" stroke-linecap="round"/><path d="M393.1,333.4 Q389.1,326.2 389.5,317.9" stroke="#626262" stroke-width="6.0" fill="none" stroke-linecap="round"/><path d="M413.0,319.0 Q409.8,311.2 405.5,304.0" stroke="#626262" stroke-width="6.0" fill="none" stroke-linecap="round"/><path d="M426.5,302.0 Q419.4,295.7 414.8,287.5" stroke="#626262" stroke-width="6.0" fill="none" stroke-linecap="round"/><path d="M434.1,284.5 Q427.6,279.8 421.7,274.2" stroke="#626262" stroke-width="6.0" fill="none" stroke-linecap="round"/><path d="M440.5,263.3 Q434.1,262.3 429.1,258.1" stroke="#626262" stroke-width="6.0" fill="none" stroke-linecap="round"/><path d="M443.5,249.6 Q434.5,248.4 426.0,245.1" stroke="#626262" stroke-width="6.0" fill="none" stroke-linecap="round"/><path d="M444.5,228.5 Q435.5,227.2 426.5,229.0" stroke="#626262" stroke-width="6.0" fill="none" stroke-linecap="round"/><path d="M441.4,210.1 Q436.7,214.3 430.4,213.1" stroke="#626262" stroke-width="6.0" fill="none" stroke-linecap="round"/><path d="M434.5,186.9 Q430.9,191.2 425.6,192.8" stroke="#626262" stroke-width="6.0" fill="none" stroke-linecap="round"/><path d="M430.1,172.1 Q426.5,177.7 420.7,181.0" stroke="#626262" stroke-width="6.0" fill="none" stroke-linecap="round"/><path d="M425.8,153.0 Q419.7,160.2 414.5,168.2" stroke="#626262" stroke-width="6.0" fill="none" stroke-linecap="round"/><path d="M413.7,133.0 Q408.1,138.4 407.6,146.1" stroke="#626262" stroke-width="6.0" fill="none" stroke-linecap="round"/><path d="M394.8,121.6 Q393.1,126.4 392.4,131.5" stroke="#626262" stroke-width="6.0" fill="none" stroke-linecap="round"/><path d="M376.8,119.0 Q375.4,126.2 375.8,133.6" stroke="#626262" stroke-width="6.0" fill="none" stroke-linecap="round"/><path d="M360.4,118.9 Q362.8,123.7 361.2,128.9" stroke="#161616" stroke-width="2.9" fill="none" stroke-linecap="round"/><path d="M339.0,119.2 Q340.6,126.2 342.7,132.9" stroke="#161616" stroke-width="2.4" fill="none" stroke-linecap="round"/><path d="M321.2,130.0 Q322.5,136.7 326.8,141.9" stroke="#161616" stroke-width="2.7" fill="none" stroke-linecap="round"/><path d="M311.2,147.9 Q316.4,151.6 318.1,157.7" stroke="#161616" stroke-width="2.1" fill="none" stroke-linecap="round"/><path d="M305.8,166.0 Q308.4,170.0 312.4,172.8" stroke="#161616" stroke-width="2.6" fill="none" stroke-linecap="round"/><path d="M302.1,179.7 Q309.8,182.0 314.1,188.8" stroke="#161616" stroke-width="2.9" fill="none" stroke-linecap="round"/><path d="M295.0,205.8 Q299.3,208.7 304.5,209.0" stroke="#161616" stroke-width="2.7" fill="none" stroke-linecap="round"/><path d="M292.9,219.5 Q300.2,218.3 306.8,221.5" stroke="#161616" stroke-width="2.9" fill="none" stroke-linecap="round"/><path d="M292.7,244.5 Q300.5,240.4 309.3,241.5" stroke="#161616" stroke-width="2.3" fill="none" stroke-linecap="round"/><path d="M296.9,263.5 Q302.2,259.0 309.1,257.9" stroke="#161616" stroke-width="2.9" fill="none" stroke-linecap="round"/><path d="M305.2,284.0 Q308.0,278.9 313.4,277.1" stroke="#161616" stroke-width="2.7" fill="none" stroke-linecap="round"/><path d="M313.4,298.0 Q317.8,292.6 322.2,287.2" stroke="#161616" stroke-width="2.4" fill="none" stroke-linecap="round"/><path d="M323.2,311.5 Q325.2,307.3 327.7,303.4" stroke="#161616" stroke-width="2.7" fill="none" stroke-linecap="round"/><path d="M339.5,328.2 Q341.8,321.3 343.7,314.2" stroke="#161616" stroke-width="2.9" fill="none" stroke-linecap="round"/><path d="M359.0,337.5 Q357.3,331.8 360.0,326.6" stroke="#161616" stroke-width="2.1" fill="none" stroke-linecap="round"/><path d="M373.5,338.3 Q375.4,330.3 372.8,322.6" stroke="#161616" stroke-width="2.8" fill="none" stroke-linecap="round"/><path d="M393.1,333.4 Q389.4,327.1 389.9,319.8" stroke="#161616" stroke-width="2.9" fill="none" stroke-linecap="round"/><path d="M413.0,319.0 Q410.3,312.1 406.4,305.8" stroke="#161616" stroke-width="2.4" fill="none" stroke-linecap="round"/><path d="M426.5,302.0 Q420.0,296.5 416.0,289.0" stroke="#161616" stroke-width="2.4" fill="none" stroke-linecap="round"/><path d="M434.1,284.5 Q428.3,280.4 423.2,275.5" stroke="#161616" stroke-width="2.5" fill="none" stroke-linecap="round"/><path d="M440.5,263.3 Q435.0,262.7 430.9,258.9" stroke="#161616" stroke-width="2.7" fill="none" stroke-linecap="round"/><path d="M443.5,249.6 Q435.5,248.6 428.0,245.6" stroke="#161616" stroke-width="2.9" fill="none" stroke-linecap="round"/><path d="M444.5,228.5 Q436.5,227.2 428.5,228.9" stroke="#161616" stroke-width="2.7" fill="none" stroke-linecap="round"/><path d="M441.4,210.1 Q437.6,214.0 432.3,212.6" stroke="#161616" stroke-width="2.2" fill="none" stroke-linecap="round"/><path d="M434.5,186.9 Q431.7,190.6 427.3,191.7" stroke="#161616" stroke-width="2.6" fill="none" stroke-linecap="round"/><path d="M430.1,172.1 Q427.2,177.0 422.1,179.6" stroke="#161616" stroke-width="2.7" fill="none" stroke-linecap="round"/><path d="M425.8,153.0 Q420.3,159.4 415.7,166.6" stroke="#161616" stroke-width="2.7" fill="none" stroke-linecap="round"/><path d="M413.7,133.0 Q408.5,137.5 408.5,144.3" stroke="#161616" stroke-width="2.9" fill="none" stroke-linecap="round"/><path d="M394.8,121.6 Q393.3,125.5 392.9,129.6" stroke="#161616" stroke-width="2.9" fill="none" stroke-linecap="round"/><path d="M376.8,119.0 Q375.5,125.2 375.9,131.6" stroke="#161616" stroke-width="2.2" fill="none" stroke-linecap="round"/></g><filter id="axsL" x="-30%" y="-30%" width="160%" height="160%"><feGaussianBlur stdDeviation="1.2"/></filter><filter id="axs2L" x="-30%" y="-30%" width="160%" height="160%"><feGaussianBlur stdDeviation="2.2"/></filter><g filter="url(#axs2L)" fill="#8f8f8f"><path d="M321.5,156.6C325.5,155.1 340.9,156.7 348.9,157.6C356.9,158.6 362.6,162.3 369.5,162.4C376.3,162.6 382.1,159.3 390.1,158.3C398.1,157.3 413.5,155.2 417.5,156.6C421.5,158.0 418.7,164.9 414.1,166.9C409.5,168.9 397.5,168.0 390.1,168.6C382.6,169.2 376.3,170.3 369.5,170.3C362.6,170.3 356.3,169.2 348.9,168.6C341.5,168.0 329.5,168.9 324.9,166.9C320.3,164.9 317.5,158.1 321.5,156.6Z"/><path d="M330.0,151.5C330.0,148.3 340.0,144.3 343.8,141.2C347.5,138.0 350.0,133.2 352.3,132.6C354.6,132.0 357.8,134.6 357.5,137.7C357.2,140.9 352.9,147.7 350.6,151.5C348.3,155.2 347.2,160.0 343.8,160.0C340.3,160.0 330.0,154.6 330.0,151.5Z" opacity=".8"/><path d="M407.2,151.5C407.2,148.3 398.6,144.3 395.2,141.2C391.8,138.0 388.9,133.2 386.6,132.6C384.4,132.0 381.2,134.6 381.5,137.7C381.8,140.9 386.1,147.7 388.4,151.5C390.6,155.2 392.1,160.0 395.2,160.0C398.4,160.0 407.2,154.6 407.2,151.5Z" opacity=".8"/><path d="M318.0,247.5C320.6,242.9 328.3,234.9 331.7,237.2C335.2,239.5 337.2,252.1 338.6,261.2C340.0,270.4 341.5,284.7 340.3,292.1C339.2,299.5 334.9,307.0 331.7,305.8C328.6,304.7 324.0,292.1 321.5,285.2C318.9,278.4 316.9,271.0 316.3,264.7C315.7,258.4 315.5,252.1 318.0,247.5Z" opacity=".85"/><path d="M420.9,247.5C418.2,242.9 410.4,234.9 407.2,237.2C404.1,239.5 402.6,252.1 402.1,261.2C401.5,270.4 402.4,284.7 403.8,292.1C405.2,299.5 408.1,307.0 410.7,305.8C413.2,304.7 417.1,292.1 419.2,285.2C421.4,278.4 423.4,271.0 423.7,264.7C424.0,258.4 423.7,252.1 420.9,247.5Z" opacity=".85"/></g><g filter="url(#axsL)"><path d="M338.6,185.8C340.3,181.2 344.6,177.8 347.2,178.9C349.8,180.0 352.6,186.9 354.0,192.6C355.5,198.3 356.3,206.3 355.8,213.2C355.2,220.1 352.9,231.5 350.6,233.8C348.3,236.1 344.3,231.5 342.0,226.9C339.8,222.4 337.5,213.2 336.9,206.3C336.3,199.5 336.9,190.3 338.6,185.8Z" fill="#7c7c7c"/><path d="M399.7,185.8C398.0,181.3 394.2,178.4 391.8,179.6C389.3,180.7 386.4,187.0 384.9,192.6C383.5,198.2 382.6,206.3 383.2,213.2C383.8,220.1 386.1,231.5 388.4,233.8C390.6,236.1 394.6,231.5 396.9,226.9C399.2,222.4 401.6,213.2 402.1,206.3C402.5,199.5 401.4,190.2 399.7,185.8Z" fill="#7c7c7c"/><path d="M354.0,202.9C356.5,202.3 362.2,208.1 364.3,213.2C366.5,218.4 367.7,228.4 367.1,233.8C366.5,239.2 363.4,245.5 360.9,245.8C358.5,246.1 354.2,240.4 352.3,235.5C350.4,230.6 349.3,222.1 349.6,216.6C349.9,211.2 351.6,203.5 354.0,202.9Z" fill="#868686"/><path d="M384.9,202.9C382.5,202.3 376.8,208.1 374.6,213.2C372.5,218.4 371.3,228.4 371.9,233.8C372.5,239.2 375.6,245.5 378.1,245.8C380.5,246.1 384.8,240.4 386.6,235.5C388.5,230.6 389.7,222.1 389.4,216.6C389.1,211.2 387.4,203.5 384.9,202.9Z" fill="#868686"/><path d="M348.2,173.8C349.4,174.9 350.4,181.5 352.3,185.8C354.3,190.1 359.3,196.6 359.9,199.5C360.5,202.3 357.7,204.3 355.8,202.9C353.8,201.5 349.9,194.9 348.2,190.9C346.5,186.9 345.5,181.8 345.5,178.9C345.5,176.0 347.1,172.6 348.2,173.8Z" fill="#737373"/><path d="M390.8,173.8C389.6,174.9 388.6,181.5 386.6,185.8C384.7,190.1 379.7,196.6 379.1,199.5C378.5,202.3 381.3,204.3 383.2,202.9C385.2,201.5 389.0,194.9 390.8,190.9C392.5,186.9 393.5,181.8 393.5,178.9C393.5,176.0 391.9,172.6 390.8,173.8Z" fill="#737373"/><path d="M324.9,187.5C325.6,190.1 328.5,197.8 329.0,202.9C329.5,208.1 326.9,213.5 327.6,218.4C328.4,223.2 332.5,229.8 333.5,232.1" stroke="#3c3c3c" stroke-width="2.2" fill="none"/><path d="M414.1,182.3C413.6,185.2 411.5,193.5 411.3,199.5C411.2,205.5 414.2,212.9 413.4,218.4C412.6,223.8 407.7,229.8 406.5,232.1" stroke="#3c3c3c" stroke-width="2.2" fill="none"/><path d="M369.5,121.3C369.4,124.0 368.7,132.7 368.8,137.7C368.9,142.8 370.1,147.9 370.2,151.5C370.3,155.0 369.6,157.7 369.5,159.0" stroke="#444" stroke-width="2.2" fill="none"/><path d="M354.0,143.9C354.8,141.7 359.7,138.6 361.9,138.4C364.2,138.3 367.2,140.7 367.8,142.9C368.3,145.1 367.1,150.0 365.4,151.5C363.7,152.9 359.4,152.7 357.5,151.5C355.6,150.2 353.3,146.1 354.0,143.9Z" fill="#565656"/><path d="M372.2,140.5C373.5,138.5 378.6,136.7 381.5,137.0C384.4,137.4 389.0,140.4 389.4,142.5C389.8,144.7 386.5,149.1 383.9,150.1C381.3,151.1 375.9,150.3 373.9,148.7C372.0,147.1 371.0,142.4 372.2,140.5Z" fill="#565656"/><path d="M368.8,281.8C368.6,284.7 367.7,292.7 367.8,299.0C367.9,305.3 369.3,313.4 369.5,319.6C369.7,325.7 368.9,333.3 368.8,336.0" stroke="#3a3a3a" stroke-width="2.4" fill="none"/><path d="M349.9,167.2C350.8,166.3 353.1,166.3 354.7,167.9C356.4,169.6 358.2,173.5 359.9,177.2C361.5,180.8 363.4,185.8 364.7,189.9C365.9,193.9 367.3,199.4 367.4,201.5C367.5,203.7 366.6,204.4 365.4,202.9C364.1,201.4 361.8,196.1 359.9,192.6C357.9,189.2 355.4,185.5 353.7,182.3C352.0,179.2 350.2,176.3 349.6,173.8C349.0,171.2 349.1,168.2 349.9,167.2Z" fill="#151515"/><path d="M389.0,167.2C388.2,166.3 385.9,166.3 384.2,167.9C382.6,169.6 380.7,173.5 379.1,177.2C377.4,180.8 375.5,185.8 374.3,189.9C373.0,193.9 371.7,199.4 371.5,201.5C371.4,203.7 372.3,204.4 373.6,202.9C374.9,201.4 377.1,196.1 379.1,192.6C381.0,189.2 383.6,185.5 385.3,182.3C387.0,179.2 388.8,176.3 389.4,173.8C390.0,171.2 389.9,168.2 389.0,167.2Z" fill="#151515"/><path d="M367.8,232.1C368.7,229.5 370.7,229.5 371.5,232.1C372.4,234.6 372.9,242.1 372.9,247.5C372.9,252.9 372.1,259.5 371.5,264.7C371.0,269.8 370.3,278.4 369.5,278.4C368.7,278.4 367.3,269.8 366.7,264.7C366.2,259.5 365.9,252.9 366.1,247.5C366.2,242.1 366.9,234.6 367.8,232.1Z" fill="#303030"/><path d="M346.2,247.5C348.3,247.6 355.3,247.9 359.2,248.2C363.1,248.5 366.1,249.5 369.5,249.6C372.9,249.7 376.3,248.7 379.8,248.9C383.2,249.1 388.4,250.6 390.1,250.9" stroke="#555" stroke-width="1.8" fill="none"/><path d="M336.9,247.5C338.2,246.1 341.2,245.3 342.7,246.1C344.3,247.0 345.8,250.3 346.2,252.7C346.5,255.1 346.0,259.1 344.8,260.5C343.5,262.0 340.2,262.3 338.6,261.2C337.0,260.2 335.5,256.7 335.2,254.4C334.9,252.1 335.6,248.9 336.9,247.5Z" fill="#1c1c1c"/><path d="M338.6,264.7C340.1,263.0 345.9,260.1 348.9,261.2C351.9,262.4 355.0,266.4 356.4,271.5C357.9,276.7 358.2,286.4 357.5,292.1C356.8,297.8 354.2,304.1 352.3,305.8C350.4,307.5 346.6,305.8 346.2,302.4C345.7,299.0 349.6,290.4 349.6,285.2C349.6,280.1 347.8,273.8 346.2,271.5C344.6,269.2 341.2,272.7 340.0,271.5C338.7,270.4 337.1,266.4 338.6,264.7Z" fill="#828282" stroke="#444" stroke-width="2"/><path d="M343.8,278.4C344.5,280.7 347.6,287.0 348.2,292.1C348.8,297.3 346.8,304.1 347.2,309.3C347.6,314.4 350.0,320.7 350.6,323.0" stroke="#4a4a4a" stroke-width="1.8" fill="none"/><path d="M390.1,253.7C391.4,252.0 395.7,249.7 397.6,250.9C399.6,252.2 401.2,256.7 401.7,261.2C402.3,265.8 402.1,272.7 401.0,278.4C400.0,284.1 397.6,290.7 395.2,295.5C392.8,300.4 389.1,305.7 386.6,307.5C384.2,309.4 380.7,308.2 380.5,306.5C380.2,304.8 383.2,300.8 384.9,297.3C386.6,293.7 389.3,289.5 390.8,285.2C392.2,281.0 393.7,275.5 393.5,271.5C393.3,267.5 390.0,264.2 389.4,261.2C388.8,258.3 388.7,255.4 390.1,253.7Z" fill="#121212"/><path d="M376.3,271.5C377.1,270.1 382.6,267.0 384.9,268.1C387.2,269.2 389.8,274.4 390.1,278.4C390.4,282.4 388.5,288.7 386.6,292.1C384.8,295.5 381.3,299.0 379.1,299.0C376.9,299.0 373.6,294.4 373.6,292.1C373.6,289.8 377.9,287.8 379.1,285.2C380.2,282.7 380.9,279.0 380.5,276.7C380.0,274.4 375.6,273.0 376.3,271.5Z" fill="#848484" stroke="#484848" stroke-width="1.8"/><path d="M359.9,305.8C360.6,307.5 364.0,312.4 364.3,316.1C364.7,319.8 362.3,326.1 361.9,328.1" stroke="#404040" stroke-width="1.8" fill="none"/><path d="M378.1,309.3C377.5,311.0 374.8,316.1 374.6,319.6C374.5,323.0 376.6,328.1 377.0,329.8" stroke="#404040" stroke-width="1.8" fill="none"/></g><circle cx="369.1" cy="203.9" r="1.4" fill="#c8c8c8"/><path d="M368.8,124.0C366.3,124.0 364.1,121.3 359.9,120.6C355.7,119.8 349.0,118.8 343.8,119.6C338.5,120.4 332.9,122.4 328.3,125.4C323.7,128.4 319.5,132.2 316.3,137.7C313.2,143.2 311.5,151.5 309.5,158.3C307.4,165.2 306.3,171.5 304.3,178.9C302.3,186.3 299.3,194.3 297.4,202.9C295.6,211.5 293.6,221.8 293.3,230.4C293.0,238.9 293.9,246.4 295.7,254.4C297.6,262.4 300.6,270.4 304.3,278.4C308.0,286.4 312.9,295.0 318.0,302.4C323.2,309.8 329.5,317.6 335.2,323.0C340.9,328.4 346.6,332.4 352.3,334.6C358.1,336.9 363.8,336.6 369.5,336.7C375.2,336.8 380.3,337.3 386.6,335.0C392.9,332.7 400.9,328.4 407.2,323.0C413.5,317.6 419.8,309.8 424.4,302.4C428.9,295.0 431.8,287.0 434.7,278.4C437.5,269.8 440.2,259.5 441.5,250.9C442.8,242.4 443.1,234.9 442.6,226.9C442.0,218.9 440.3,210.9 438.1,202.9C435.9,194.9 431.5,186.3 429.5,178.9C427.5,171.5 427.8,164.6 426.1,158.3C424.4,152.0 422.4,146.0 419.2,141.2C416.1,136.3 412.1,132.4 407.2,129.2C402.4,125.9 395.5,123.0 390.1,121.6C384.6,120.2 378.2,120.5 374.6,120.9C371.1,121.3 371.3,124.1 368.8,124.0Z" fill="none" stroke="#000" stroke-opacity="0.3" stroke-width="16" filter="url(#waxL)"/><path d="M368.8,124.0C366.3,124.0 364.1,121.3 359.9,120.6C355.7,119.8 349.0,118.8 343.8,119.6C338.5,120.4 332.9,122.4 328.3,125.4C323.7,128.4 319.5,132.2 316.3,137.7C313.2,143.2 311.5,151.5 309.5,158.3C307.4,165.2 306.3,171.5 304.3,178.9C302.3,186.3 299.3,194.3 297.4,202.9C295.6,211.5 293.6,221.8 293.3,230.4C293.0,238.9 293.9,246.4 295.7,254.4C297.6,262.4 300.6,270.4 304.3,278.4C308.0,286.4 312.9,295.0 318.0,302.4C323.2,309.8 329.5,317.6 335.2,323.0C340.9,328.4 346.6,332.4 352.3,334.6C358.1,336.9 363.8,336.6 369.5,336.7C375.2,336.8 380.3,337.3 386.6,335.0C392.9,332.7 400.9,328.4 407.2,323.0C413.5,317.6 419.8,309.8 424.4,302.4C428.9,295.0 431.8,287.0 434.7,278.4C437.5,269.8 440.2,259.5 441.5,250.9C442.8,242.4 443.1,234.9 442.6,226.9C442.0,218.9 440.3,210.9 438.1,202.9C435.9,194.9 431.5,186.3 429.5,178.9C427.5,171.5 427.8,164.6 426.1,158.3C424.4,152.0 422.4,146.0 419.2,141.2C416.1,136.3 412.1,132.4 407.2,129.2C402.4,125.9 395.5,123.0 390.1,121.6C384.6,120.2 378.2,120.5 374.6,120.9C371.1,121.3 371.3,124.1 368.8,124.0Z" fill="none" stroke="#000" stroke-opacity=".6" stroke-width="3.5"/></g></g></g><line x1="339.5" y1="154" x2="211" y2="154" stroke="#4343cc" stroke-width="2" stroke-dasharray="8 8" stroke-dashoffset="8"/><line x1="355.5" y1="154" x2="516" y2="154" stroke="#4343cc" stroke-width="2" stroke-dasharray="8 8" stroke-dashoffset="8"/><line x1="347.5" y1="146" x2="347.5" y2="34" stroke="#4343cc" stroke-width="2" stroke-dasharray="8 8" stroke-dashoffset="8"/><line x1="347.5" y1="162" x2="347.5" y2="389" stroke="#4343cc" stroke-width="2" stroke-dasharray="8 8" stroke-dashoffset="8"/><path d="M339.5,154 H355.5 M347.5,146 V162" stroke="#5a5aee" stroke-width="2" fill="none"/><text x="191.5" y="68.7" textLength="81" lengthAdjust="spacingAndGlyphs" font-size="11.7" fill="#50c000" font-family='"Liberation Sans", sans-serif' >norm_minmax</text><text x="361.40000000000003" y="68" textLength="11.0" lengthAdjust="spacingAndGlyphs" font-size="12.7" font-weight="700" fill="#f7b900" font-family='"Liberation Serif", serif' >A</text><text x="191.4" y="216" textLength="11.0" lengthAdjust="spacingAndGlyphs" font-size="12.7" font-weight="700" fill="#f7b900" font-family='"Liberation Serif", serif' >R</text><text x="530.4" y="216" textLength="10.2" lengthAdjust="spacingAndGlyphs" font-size="12.7" font-weight="700" fill="#f7b900" font-family='"Liberation Serif", serif' >L</text><text x="360.40000000000003" y="364" textLength="9.3" lengthAdjust="spacingAndGlyphs" font-size="12.7" font-weight="700" fill="#f7b900" font-family='"Liberation Serif", serif' >P</text><line x1="418.5" y1="359.5" x2="541.7" y2="359.5" stroke="#50c000" stroke-width="2" /><line x1="418.5" y1="354.0" x2="418.5" y2="365.0" stroke="#50c000" stroke-width="2" /><line x1="541.7" y1="354.0" x2="541.7" y2="365.0" stroke="#50c000" stroke-width="2" /><text x="457.5" y="353.5" textLength="34" lengthAdjust="spacingAndGlyphs" font-size="12" fill="#50c000" font-family='"Liberation Sans", sans-serif' >10 cm</text></g><g transform="translate(551,57)"><rect x=".5" y=".5" width="12" height="12" fill="#fff" stroke="#5a5a5a"/><rect x="0" y="0" width="13" height="2.5" fill="#777"/><path d="M13.5,1 V13.5 H1" stroke="#9a9a9a" fill="none"/><text x="3.1" y="11.1" textLength="6.9" lengthAdjust="spacingAndGlyphs" font-size="9.8" fill="#4c4c4c" font-family='"Liberation Sans", sans-serif' >A</text></g><g transform="translate(552.5,81.5)"><path d="M1,2 H3 L3.6,0.6 H6.6 L7.2,2 H9.2 Q10,2 10,2.8 V7.4 Q10,8.2 9.2,8.2 H1 Q.2,8.2 .2,7.4 V2.8 Q.2,2 1,2Z" fill="#fff" stroke="#111" stroke-width="1.1"/><circle cx="5.1" cy="5" r="1.9" fill="#fff" stroke="#222" stroke-width="1.2"/></g><rect x="551" y="98" width="14" height="271" fill="#e6e6e6" /><line x1="551.5" y1="98" x2="551.5" y2="369" stroke="#c3c3c3" stroke-width="1" /><rect x="552" y="98" width="13" height="13" fill="#fbfbfb" /><line x1="552" y1="111.5" x2="565" y2="111.5" stroke="#c9c9c9" stroke-width="1" /><path d="M554.5,106.5 L562.5,106.5 L558.5,102.5Z" fill="#555"/><rect x="552" y="356" width="13" height="13" fill="#fbfbfb" /><line x1="552" y1="355.5" x2="565" y2="355.5" stroke="#c9c9c9" stroke-width="1" /><path d="M554.5,360.5 L562.5,360.5 L558.5,364.5Z" fill="#555"/><rect x="552" y="220.5" width="13" height="26.5" fill="url(#thumbL)" /><line x1="552" y1="220.0" x2="565" y2="220.0" stroke="#c9c9c9" stroke-width="1" /><line x1="552" y1="247.5" x2="565" y2="247.5" stroke="#c9c9c9" stroke-width="1" /><rect x="410.5" y="371.5" width="70" height="19" fill="url(#btnL)" stroke="#b4b4b4" stroke-width="1" rx="3" /><text x="417" y="385" textLength="57" lengthAdjust="spacingAndGlyphs" font-size="12.6" fill="#000" font-family='"Liberation Sans", sans-serif' >zoom to fit</text><text x="505.5" y="385" textLength="52.5" lengthAdjust="spacingAndGlyphs" font-size="11.8" fill="#000" font-family='"Liberation Sans", sans-serif' >129 of 256</text><clipPath id="cvLs"><rect x="572" y="54" width="359" height="315"/></clipPath><rect x="571" y="53" width="361" height="317" fill="#fff" /><rect x="572" y="54" width="359" height="315" fill="#000" /><g clip-path="url(#cvLs)"><g opacity="1.0"><clipPath id="sgcL"><path d="M706.8,234.1C708.8,233.2 718.7,237.0 724.1,236.0C729.4,235.1 734.0,230.5 738.9,228.6C743.8,226.8 749.2,224.9 753.7,224.9C758.2,224.9 761.1,228.8 766.0,228.6C771.0,228.4 778.0,224.9 783.3,223.7C788.7,222.5 792.0,221.3 798.1,221.2C804.3,221.2 813.8,221.8 820.4,223.2C827.0,224.7 831.9,227.7 837.7,229.9C843.4,232.0 850.7,235.1 854.9,236.0C859.1,237.0 862.2,233.1 862.8,235.6C863.5,238.0 860.3,245.8 858.6,250.9C857.0,255.9 856.0,261.2 853.0,265.7C850.0,270.2 845.6,274.9 840.6,278.0C835.6,281.1 828.3,283.5 822.8,284.2C817.4,284.9 813.0,283.6 808.0,282.0C803.1,280.4 797.7,276.9 793.2,274.6C788.7,272.3 785.0,269.4 780.9,268.1C776.7,266.9 772.2,267.7 768.5,267.2C764.8,266.6 762.3,264.6 758.6,264.7C754.9,264.8 750.4,267.9 746.3,267.7C742.2,267.4 737.7,265.6 734.0,263.2C730.2,260.8 726.5,256.2 724.1,253.3C721.6,250.5 721.2,247.9 719.1,245.9C717.1,244.0 713.8,243.5 711.7,241.5C709.7,239.5 704.7,235.0 706.8,234.1Z"/></clipPath><filter id="fsgcL"><feGaussianBlur stdDeviation=".8"/></filter><g filter="url(#fsgcL)"><g clip-path="url(#sgcL)"><path d="M706.8,234.1C708.8,233.2 718.7,237.0 724.1,236.0C729.4,235.1 734.0,230.5 738.9,228.6C743.8,226.8 749.2,224.9 753.7,224.9C758.2,224.9 761.1,228.8 766.0,228.6C771.0,228.4 778.0,224.9 783.3,223.7C788.7,222.5 792.0,221.3 798.1,221.2C804.3,221.2 813.8,221.8 820.4,223.2C827.0,224.7 831.9,227.7 837.7,229.9C843.4,232.0 850.7,235.1 854.9,236.0C859.1,237.0 862.2,233.1 862.8,235.6C863.5,238.0 860.3,245.8 858.6,250.9C857.0,255.9 856.0,261.2 853.0,265.7C850.0,270.2 845.6,274.9 840.6,278.0C835.6,281.1 828.3,283.5 822.8,284.2C817.4,284.9 813.0,283.6 808.0,282.0C803.1,280.4 797.7,276.9 793.2,274.6C788.7,272.3 785.0,269.4 780.9,268.1C776.7,266.9 772.2,267.7 768.5,267.2C764.8,266.6 762.3,264.6 758.6,264.7C754.9,264.8 750.4,267.9 746.3,267.7C742.2,267.4 737.7,265.6 734.0,263.2C730.2,260.8 726.5,256.2 724.1,253.3C721.6,250.5 721.2,247.9 719.1,245.9C717.1,244.0 713.8,243.5 711.7,241.5C709.7,239.5 704.7,235.0 706.8,234.1Z" fill="#565656"/><path d="M724.1,236.0C725.9,231.9 731.5,230.3 736.4,228.6C741.4,227.0 748.8,226.0 753.7,226.2C758.6,226.4 762.8,227.8 766.0,229.9C769.3,231.9 773.5,234.6 773.5,238.5C773.5,242.4 768.5,249.0 766.0,253.3C763.6,257.7 761.9,262.1 758.6,264.4C755.3,266.8 750.4,267.9 746.3,267.7C742.2,267.4 737.4,265.6 734.0,263.2C730.5,260.8 727.0,257.9 725.3,253.3C723.7,248.8 722.2,240.2 724.1,236.0Z" fill="#606060"/><path d="M731.5,254.6C735.2,252.9 745.9,248.6 753.7,244.7C761.5,240.8 771.0,234.4 778.4,231.1C785.8,227.8 794.9,226.0 798.1,224.9" stroke="#7e7e7e" stroke-width="6" fill="none"/><path d="M743.8,236.0C744.7,234.0 750.8,232.3 753.7,232.3C756.6,232.3 760.3,234.2 761.1,236.0C761.9,237.9 760.7,242.0 758.6,243.5C756.6,244.9 751.2,245.9 748.8,244.7C746.3,243.5 743.0,238.1 743.8,236.0Z" fill="#484848"/><path d="M778.4,248.4C779.6,243.0 783.3,239.0 788.3,236.0C793.2,233.1 801.0,231.4 808.0,230.6C815.0,229.9 823.3,230.3 830.2,231.6C837.2,232.9 845.3,235.3 850.0,238.5C854.7,241.7 858.1,246.3 858.6,250.9C859.1,255.4 856.0,261.2 853.0,265.7C850.0,270.2 845.6,274.9 840.6,278.0C835.6,281.1 828.3,283.5 822.8,284.2C817.4,284.9 813.0,283.6 808.0,282.0C803.1,280.4 797.7,276.9 793.2,274.6C788.7,272.3 783.3,272.5 780.9,268.1C778.4,263.8 777.2,253.7 778.4,248.4Z" fill="#5c5c5c"/><path d="M783.3,253.3C785.8,252.8 792.4,250.9 798.1,250.1C803.9,249.4 811.3,250.3 817.9,248.9C824.5,247.4 834.4,242.7 837.7,241.5" stroke="#808080" stroke-width="5" fill="none"/><path d="M798.1,250.4C800.2,251.7 806.8,254.5 810.5,258.3C814.2,262.1 818.7,270.6 820.4,273.1" stroke="#7a7a7a" stroke-width="3" fill="none"/><path d="M813.0,248.9C815.4,250.5 822.8,255.1 827.8,258.3C832.7,261.5 840.1,266.5 842.6,268.1" stroke="#787878" stroke-width="2.6" fill="none"/><path d="M810.5,248.4C812.1,246.7 816.7,240.9 820.4,238.5C824.1,236.1 830.7,234.8 832.7,234.1" stroke="#787878" stroke-width="2.6" fill="none"/><line x1="816.5" y1="246.1" x2="838.9" y2="221.8" stroke="#3c3c3c" stroke-width="1"/><line x1="818.4" y1="247.0" x2="849.3" y2="225.2" stroke="#3c3c3c" stroke-width="1"/><line x1="820.1" y1="248.3" x2="858.0" y2="230.4" stroke="#3c3c3c" stroke-width="1"/><line x1="821.3" y1="249.7" x2="866.1" y2="236.4" stroke="#3c3c3c" stroke-width="1"/><line x1="822.1" y1="251.3" x2="867.4" y2="244.3" stroke="#3c3c3c" stroke-width="1"/><line x1="822.5" y1="253.0" x2="871.8" y2="251.6" stroke="#3c3c3c" stroke-width="1"/><line x1="822.3" y1="254.6" x2="857.8" y2="258.1" stroke="#3c3c3c" stroke-width="1"/><line x1="821.7" y1="256.3" x2="861.5" y2="265.5" stroke="#3c3c3c" stroke-width="1"/><line x1="820.7" y1="257.8" x2="862.8" y2="274.2" stroke="#3c3c3c" stroke-width="1"/><line x1="819.2" y1="259.1" x2="852.0" y2="278.5" stroke="#3c3c3c" stroke-width="1"/><line x1="817.4" y1="260.2" x2="845.5" y2="285.3" stroke="#3c3c3c" stroke-width="1"/><line x1="815.3" y1="261.0" x2="830.1" y2="282.2" stroke="#3c3c3c" stroke-width="1"/><line x1="813.0" y1="261.5" x2="821.8" y2="287.5" stroke="#3c3c3c" stroke-width="1"/><line x1="810.6" y1="261.7" x2="810.9" y2="286.1" stroke="#3c3c3c" stroke-width="1"/><line x1="808.2" y1="261.6" x2="799.9" y2="288.3" stroke="#3c3c3c" stroke-width="1"/><line x1="805.9" y1="261.1" x2="789.0" y2="286.5" stroke="#3c3c3c" stroke-width="1"/><line x1="803.8" y1="260.3" x2="783.8" y2="278.6" stroke="#3c3c3c" stroke-width="1"/><line x1="801.9" y1="259.2" x2="774.3" y2="276.1" stroke="#3c3c3c" stroke-width="1"/><line x1="800.4" y1="257.9" x2="767.1" y2="271.4" stroke="#3c3c3c" stroke-width="1"/><line x1="799.3" y1="256.4" x2="753.5" y2="267.7" stroke="#3c3c3c" stroke-width="1"/><line x1="798.7" y1="254.8" x2="752.4" y2="259.9" stroke="#3c3c3c" stroke-width="1"/><line x1="798.5" y1="253.1" x2="760.6" y2="252.5" stroke="#3c3c3c" stroke-width="1"/><path d="M766.0,253.3C767.0,251.5 771.4,250.0 773.5,250.9C775.5,251.7 778.4,255.8 778.4,258.3C778.4,260.7 775.2,265.1 773.5,265.7C771.7,266.3 769.3,264.0 768.0,262.0C766.8,259.9 765.1,255.2 766.0,253.3Z" fill="#1c1c1c"/><path d="M706.8,234.1C708.8,233.2 718.7,237.0 724.1,236.0C729.4,235.1 734.0,230.5 738.9,228.6C743.8,226.8 749.2,224.9 753.7,224.9C758.2,224.9 761.1,228.8 766.0,228.6C771.0,228.4 778.0,224.9 783.3,223.7C788.7,222.5 792.0,221.3 798.1,221.2C804.3,221.2 813.8,221.8 820.4,223.2C827.0,224.7 831.9,227.7 837.7,229.9C843.4,232.0 850.7,235.1 854.9,236.0C859.1,237.0 862.2,233.1 862.8,235.6C863.5,238.0 860.3,245.8 858.6,250.9C857.0,255.9 856.0,261.2 853.0,265.7C850.0,270.2 845.6,274.9 840.6,278.0C835.6,281.1 828.3,283.5 822.8,284.2C817.4,284.9 813.0,283.6 808.0,282.0C803.1,280.4 797.7,276.9 793.2,274.6C788.7,272.3 785.0,269.4 780.9,268.1C776.7,266.9 772.2,267.7 768.5,267.2C764.8,266.6 762.3,264.6 758.6,264.7C754.9,264.8 750.4,267.9 746.3,267.7C742.2,267.4 737.7,265.6 734.0,263.2C730.2,260.8 726.5,256.2 724.1,253.3C721.6,250.5 721.2,247.9 719.1,245.9C717.1,244.0 713.8,243.5 711.7,241.5C709.7,239.5 704.7,235.0 706.8,234.1Z" fill="none" stroke="#000" stroke-opacity=".5" stroke-width="2.4"/></g></g><clipPath id="sgL"><path d="M660.4,224.9C659.3,220.6 660.2,210.3 661.1,204.0C662.1,197.6 663.4,191.8 666.0,186.7C668.7,181.5 672.8,177.1 677.2,173.1C681.5,169.1 686.6,165.9 692.0,162.5C697.3,159.1 703.9,155.5 709.3,152.6C714.6,149.7 718.3,147.5 724.1,145.2C729.8,142.9 737.7,140.5 743.8,138.8C750.0,137.0 755.3,135.8 761.1,134.8C766.9,133.8 772.2,133.0 778.4,132.8C784.6,132.7 792.8,133.1 798.1,134.1C803.5,135.1 805.6,136.5 810.5,138.8C815.4,141.0 822.0,143.8 827.8,147.7C833.5,151.5 839.7,157.0 845.1,162.0C850.4,166.9 856.0,171.9 859.9,177.3C863.8,182.6 866.3,188.4 868.5,194.1C870.8,199.8 873.0,206.0 873.5,211.4C874.0,216.7 873.3,222.1 871.5,226.2C869.7,230.2 866.8,233.9 862.8,235.6C858.8,237.2 852.6,237.2 847.5,236.0C842.5,234.9 837.7,230.7 832.7,228.6C827.8,226.6 823.3,224.9 817.9,223.7C812.6,222.5 805.6,221.0 800.6,221.2C795.7,221.4 792.8,223.7 788.3,224.9C783.7,226.2 778.4,228.4 773.5,228.6C768.5,228.8 763.6,226.0 758.6,226.2C753.7,226.4 748.4,228.2 743.8,229.9C739.3,231.5 736.8,235.0 731.5,236.0C726.1,237.1 719.1,236.7 711.7,236.0C704.3,235.4 694.4,233.4 687.0,232.3C679.6,231.3 671.7,231.1 667.3,229.9C662.8,228.6 661.4,229.3 660.4,224.9Z"/></clipPath><filter id="tsgL" color-interpolation-filters="sRGB" filterUnits="userSpaceOnUse" x="648" y="121" width="237" height="127"><feTurbulence type="turbulence" baseFrequency="0.09" numOctaves="1" seed="11" result="t"/><feColorMatrix in="t" type="matrix" values="0 0 0 1 0  0 0 0 1 0  0 0 0 1 0  0 0 0 0 1" result="g0"/><feGaussianBlur in="g0" stdDeviation="0.75" result="g"/><feComponentTransfer in="g"><feFuncR type="table" tableValues="0.08 0.33 0.45 0.52 0.56 0.57 0.57 0.57 0.57 0.57 0.57"/><feFuncG type="table" tableValues="0.08 0.33 0.45 0.52 0.56 0.57 0.57 0.57 0.57 0.57 0.57"/><feFuncB type="table" tableValues="0.08 0.33 0.45 0.52 0.56 0.57 0.57 0.57 0.57 0.57 0.57"/></feComponentTransfer></filter><filter id="fsgL" color-interpolation-filters="sRGB" filterUnits="userSpaceOnUse" x="648" y="121" width="237" height="127"><feGaussianBlur stdDeviation="0.6"/></filter><filter id="wsgL" color-interpolation-filters="sRGB" filterUnits="userSpaceOnUse" x="648" y="121" width="237" height="127"><feGaussianBlur stdDeviation="5"/></filter><g filter="url(#fsgL)"><g clip-path="url(#sgL)"><rect x="648" y="121" width="237" height="127" filter="url(#tsgL)"/><path d="M745.0,205.0C745.0,205.0 745.0,205.0 745.0,205.0C745.0,205.0 745.0,205.0 745.0,205.0C745.0,205.0 745.0,205.0 745.0,205.0C745.0,205.0 745.0,205.0 745.0,205.0C745.0,205.0 745.0,205.0 745.0,205.0C745.0,205.0 745.0,205.0 745.0,205.0C745.0,205.0 745.0,205.0 745.0,205.0C745.0,205.0 745.0,205.0 745.0,205.0C745.0,205.0 745.0,205.0 745.0,205.0C745.0,205.0 745.0,205.0 745.0,205.0C745.0,205.0 745.0,205.0 745.0,205.0C745.0,205.0 745.0,205.0 745.0,205.0C745.0,205.0 745.0,205.0 745.0,205.0C745.0,205.0 745.0,205.0 745.0,205.0C745.0,205.0 745.0,205.0 745.0,205.0C745.0,205.0 745.0,205.0 745.0,205.0C745.0,205.0 745.0,205.0 745.0,205.0C745.0,205.0 745.0,205.0 745.0,205.0C745.0,205.0 745.0,205.0 745.0,205.0C745.0,205.0 745.0,205.0 745.0,205.0C745.0,205.0 745.0,205.0 745.0,205.0C745.0,205.0 745.0,205.0 745.0,205.0C745.0,205.0 745.0,205.0 745.0,205.0C745.0,205.0 745.0,205.0 745.0,205.0C745.0,205.0 745.0,205.0 745.0,205.0C745.0,205.0 745.0,205.0 745.0,205.0C745.0,205.0 745.0,205.0 745.0,205.0C745.0,205.0 745.0,205.0 745.0,205.0C745.0,205.0 745.0,205.0 745.0,205.0C745.0,205.0 745.0,205.0 745.0,205.0C745.0,205.0 745.0,205.0 745.0,205.0Z" fill="#8f8f8f" opacity="0" filter="url(#wsgL)"/><filter id="sgsL" x="-30%" y="-30%" width="160%" height="160%"><feGaussianBlur stdDeviation="1.1"/></filter><filter id="sgs2L" x="-30%" y="-30%" width="160%" height="160%"><feGaussianBlur stdDeviation="3"/></filter><path d="M692.0,223.7C690.1,219.0 690.7,208.5 693.2,201.5C695.7,194.5 700.4,187.5 706.8,181.7C713.2,176.0 722.4,170.6 731.5,166.9C740.5,163.2 751.6,160.3 761.1,159.5C770.6,158.7 780.0,159.7 788.3,162.0C796.5,164.2 804.7,168.1 810.5,173.1C816.3,178.0 822.4,185.6 822.8,191.6C823.3,197.6 817.1,204.8 813.0,208.9C808.8,213.0 803.9,213.6 798.1,216.3C792.4,219.0 785.8,223.5 778.4,224.9C771.0,226.4 762.8,224.3 753.7,224.9C744.7,225.6 732.3,227.8 724.1,228.6C715.8,229.5 709.7,230.7 704.3,229.9C699.0,229.1 693.8,228.4 692.0,223.7Z" fill="#8f8f8f" filter="url(#sgs2L)"/><g filter="url(#sgsL)"><path d="M724.1,202.7C726.5,201.3 733.5,195.8 738.9,194.1C744.2,192.4 750.4,191.9 756.2,192.6C761.9,193.3 768.7,195.4 773.5,198.3C778.2,201.2 783.3,206.5 784.6,209.9C785.8,213.2 781.5,216.9 780.9,218.3" stroke="#a2a2a2" stroke-width="3.2" fill="none"/><path d="M727.0,206.4C729.4,205.3 736.5,200.9 741.4,199.5C746.2,198.1 751.2,197.4 756.2,198.0C761.1,198.7 767.2,200.9 771.0,203.5C774.8,206.0 777.6,211.7 778.9,213.3" stroke="#7a7a7a" stroke-width="2" fill="none"/><path d="M721.6,215.1C723.2,213.2 728.4,210.1 731.5,210.1C734.6,210.1 738.9,212.8 740.1,215.1C741.4,217.3 740.7,221.9 738.9,223.7C737.0,225.6 731.8,226.6 729.0,226.2C726.2,225.8 723.3,223.1 722.1,221.2C720.9,219.4 720.0,216.9 721.6,215.1Z" fill="#6c6c6c"/><ellipse cx="732.7" cy="159.5" rx="7" ry="5.5" fill="#777"/><ellipse cx="795.7" cy="175.6" rx="5" ry="5" fill="#7c7c7c"/><path d="M768.5,187.9C769.8,187.2 774.5,186.2 778.4,187.2C782.3,188.1 788.4,191.5 792.0,193.6C795.6,195.6 799.1,197.3 800.1,199.5C801.2,201.7 799.3,205.3 798.1,206.9C797.0,208.6 795.5,210.0 793.2,209.4C790.9,208.8 787.4,205.7 784.6,203.5C781.8,201.2 778.8,198.0 776.4,196.0C774.1,194.1 771.8,193.0 770.5,191.6C769.2,190.2 767.2,188.6 768.5,187.9Z" fill="#101010"/><path d="M800.6,208.9C802.7,208.3 808.4,206.4 813.0,205.2C817.5,204.0 823.3,203.3 827.8,201.5C832.3,199.6 838.1,195.3 840.1,194.1" stroke="#2e2e2e" stroke-width="2.2" fill="none"/><path d="M808.0,215.8C810.5,215.2 817.9,212.6 822.8,212.3C827.8,212.1 832.3,214.7 837.7,214.3C843.0,214.0 852.1,210.8 854.9,210.1" stroke="#2e2e2e" stroke-width="2.2" fill="none"/><path d="M820.4,194.1C822.0,192.8 827.4,189.3 830.2,186.7C833.1,184.0 836.4,179.5 837.7,178.0" stroke="#2e2e2e" stroke-width="2.2" fill="none"/><path d="M788.3,223.7C791.6,223.1 801.4,219.8 808.0,220.0C814.6,220.2 821.2,222.9 827.8,224.9C834.4,227.0 841.8,230.8 847.5,232.3C853.3,233.9 859.9,233.8 862.3,234.1" stroke="#333" stroke-width="2" fill="none"/></g><g><path d="M679.4,169.3 Q688.6,175.6 698.8,180.4" stroke="#626262" stroke-width="7.5" fill="none" stroke-linecap="round"/><path d="M691.8,160.5 Q697.5,167.5 705.7,171.4" stroke="#626262" stroke-width="7.5" fill="none" stroke-linecap="round"/><path d="M705.0,152.8 Q712.0,160.4 719.0,167.9" stroke="#626262" stroke-width="7.5" fill="none" stroke-linecap="round"/><path d="M714.3,147.9 Q719.6,153.7 723.5,160.5" stroke="#626262" stroke-width="7.5" fill="none" stroke-linecap="round"/><path d="M728.4,141.7 Q730.2,149.9 735.6,156.3" stroke="#626262" stroke-width="7.5" fill="none" stroke-linecap="round"/><path d="M739.5,138.1 Q745.3,145.6 745.1,155.0" stroke="#626262" stroke-width="7.5" fill="none" stroke-linecap="round"/><path d="M756.7,133.8 Q755.4,145.4 759.2,156.5" stroke="#626262" stroke-width="7.5" fill="none" stroke-linecap="round"/><path d="M768.1,132.0 Q769.1,140.0 767.7,147.9" stroke="#626262" stroke-width="7.5" fill="none" stroke-linecap="round"/><path d="M780.9,131.0 Q776.5,138.7 778.2,147.5" stroke="#626262" stroke-width="7.5" fill="none" stroke-linecap="round"/><path d="M793.8,131.9 Q789.1,139.4 788.6,148.2" stroke="#626262" stroke-width="7.5" fill="none" stroke-linecap="round"/><path d="M805.5,134.8 Q800.6,146.1 795.0,157.1" stroke="#626262" stroke-width="7.5" fill="none" stroke-linecap="round"/><path d="M819.9,141.4 Q814.6,149.2 809.1,157.0" stroke="#626262" stroke-width="7.5" fill="none" stroke-linecap="round"/><path d="M830.0,147.0 Q822.9,151.2 819.5,158.9" stroke="#626262" stroke-width="7.5" fill="none" stroke-linecap="round"/><path d="M840.7,155.8 Q833.1,164.8 822.9,170.8" stroke="#626262" stroke-width="7.5" fill="none" stroke-linecap="round"/><path d="M853.4,167.8 Q841.9,172.4 832.3,180.1" stroke="#626262" stroke-width="7.5" fill="none" stroke-linecap="round"/><path d="M861.9,176.8 Q851.5,179.6 842.4,185.4" stroke="#626262" stroke-width="7.5" fill="none" stroke-linecap="round"/><path d="M866.4,185.8 Q856.1,186.8 847.2,192.1" stroke="#626262" stroke-width="7.5" fill="none" stroke-linecap="round"/><path d="M679.4,169.3 Q687.8,175.1 697.1,179.4" stroke="#161616" stroke-width="3.4" fill="none" stroke-linecap="round"/><path d="M691.8,160.5 Q696.7,166.9 704.1,170.2" stroke="#161616" stroke-width="3.4" fill="none" stroke-linecap="round"/><path d="M705.0,152.8 Q711.3,159.7 717.7,166.5" stroke="#161616" stroke-width="3.4" fill="none" stroke-linecap="round"/><path d="M714.3,147.9 Q719.0,152.9 722.3,158.9" stroke="#161616" stroke-width="3.4" fill="none" stroke-linecap="round"/><path d="M728.4,141.7 Q729.7,149.0 734.7,154.5" stroke="#161616" stroke-width="3.4" fill="none" stroke-linecap="round"/><path d="M739.5,138.1 Q745.0,144.6 744.5,153.2" stroke="#161616" stroke-width="3.4" fill="none" stroke-linecap="round"/><path d="M756.7,133.8 Q755.3,144.5 759.0,154.6" stroke="#161616" stroke-width="3.4" fill="none" stroke-linecap="round"/><path d="M768.1,132.0 Q769.1,139.0 767.8,146.0" stroke="#161616" stroke-width="3.4" fill="none" stroke-linecap="round"/><path d="M780.9,131.0 Q776.6,137.8 778.5,145.5" stroke="#161616" stroke-width="3.4" fill="none" stroke-linecap="round"/><path d="M793.8,131.9 Q789.4,138.4 789.2,146.3" stroke="#161616" stroke-width="3.4" fill="none" stroke-linecap="round"/><path d="M805.5,134.8 Q801.0,145.2 795.9,155.4" stroke="#161616" stroke-width="3.4" fill="none" stroke-linecap="round"/><path d="M819.9,141.4 Q815.2,148.4 810.2,155.3" stroke="#161616" stroke-width="3.4" fill="none" stroke-linecap="round"/><path d="M830.0,147.0 Q823.5,150.5 820.8,157.4" stroke="#161616" stroke-width="3.4" fill="none" stroke-linecap="round"/><path d="M840.7,155.8 Q833.8,164.2 824.4,169.5" stroke="#161616" stroke-width="3.4" fill="none" stroke-linecap="round"/><path d="M853.4,167.8 Q842.8,171.9 834.0,179.1" stroke="#161616" stroke-width="3.4" fill="none" stroke-linecap="round"/><path d="M861.9,176.8 Q852.4,179.2 844.2,184.6" stroke="#161616" stroke-width="3.4" fill="none" stroke-linecap="round"/><path d="M866.4,185.8 Q857.0,186.5 849.1,191.5" stroke="#161616" stroke-width="3.4" fill="none" stroke-linecap="round"/></g><path d="M660.4,224.9C659.3,220.6 660.2,210.3 661.1,204.0C662.1,197.6 663.4,191.8 666.0,186.7C668.7,181.5 672.8,177.1 677.2,173.1C681.5,169.1 686.6,165.9 692.0,162.5C697.3,159.1 703.9,155.5 709.3,152.6C714.6,149.7 718.3,147.5 724.1,145.2C729.8,142.9 737.7,140.5 743.8,138.8C750.0,137.0 755.3,135.8 761.1,134.8C766.9,133.8 772.2,133.0 778.4,132.8C784.6,132.7 792.8,133.1 798.1,134.1C803.5,135.1 805.6,136.5 810.5,138.8C815.4,141.0 822.0,143.8 827.8,147.7C833.5,151.5 839.7,157.0 845.1,162.0C850.4,166.9 856.0,171.9 859.9,177.3C863.8,182.6 866.3,188.4 868.5,194.1C870.8,199.8 873.0,206.0 873.5,211.4C874.0,216.7 873.3,222.1 871.5,226.2C869.7,230.2 866.8,233.9 862.8,235.6C858.8,237.2 852.6,237.2 847.5,236.0C842.5,234.9 837.7,230.7 832.7,228.6C827.8,226.6 823.3,224.9 817.9,223.7C812.6,222.5 805.6,221.0 800.6,221.2C795.7,221.4 792.8,223.7 788.3,224.9C783.7,226.2 778.4,228.4 773.5,228.6C768.5,228.8 763.6,226.0 758.6,226.2C753.7,226.4 748.4,228.2 743.8,229.9C739.3,231.5 736.8,235.0 731.5,236.0C726.1,237.1 719.1,236.7 711.7,236.0C704.3,235.4 694.4,233.4 687.0,232.3C679.6,231.3 671.7,231.1 667.3,229.9C662.8,228.6 661.4,229.3 660.4,224.9Z" fill="none" stroke="#000" stroke-opacity="0.3" stroke-width="16" filter="url(#wsgL)"/><path d="M660.4,224.9C659.3,220.6 660.2,210.3 661.1,204.0C662.1,197.6 663.4,191.8 666.0,186.7C668.7,181.5 672.8,177.1 677.2,173.1C681.5,169.1 686.6,165.9 692.0,162.5C697.3,159.1 703.9,155.5 709.3,152.6C714.6,149.7 718.3,147.5 724.1,145.2C729.8,142.9 737.7,140.5 743.8,138.8C750.0,137.0 755.3,135.8 761.1,134.8C766.9,133.8 772.2,133.0 778.4,132.8C784.6,132.7 792.8,133.1 798.1,134.1C803.5,135.1 805.6,136.5 810.5,138.8C815.4,141.0 822.0,143.8 827.8,147.7C833.5,151.5 839.7,157.0 845.1,162.0C850.4,166.9 856.0,171.9 859.9,177.3C863.8,182.6 866.3,188.4 868.5,194.1C870.8,199.8 873.0,206.0 873.5,211.4C874.0,216.7 873.3,222.1 871.5,226.2C869.7,230.2 866.8,233.9 862.8,235.6C858.8,237.2 852.6,237.2 847.5,236.0C842.5,234.9 837.7,230.7 832.7,228.6C827.8,226.6 823.3,224.9 817.9,223.7C812.6,222.5 805.6,221.0 800.6,221.2C795.7,221.4 792.8,223.7 788.3,224.9C783.7,226.2 778.4,228.4 773.5,228.6C768.5,228.8 763.6,226.0 758.6,226.2C753.7,226.4 748.4,228.2 743.8,229.9C739.3,231.5 736.8,235.0 731.5,236.0C726.1,237.1 719.1,236.7 711.7,236.0C704.3,235.4 694.4,233.4 687.0,232.3C679.6,231.3 671.7,231.1 667.3,229.9C662.8,228.6 661.4,229.3 660.4,224.9Z" fill="none" stroke="#000" stroke-opacity=".6" stroke-width="3.5"/></g></g><circle cx="741.9" cy="227.2" r="1.5" fill="#d4d4d4"/><circle cx="716.2" cy="240.2" r="1.3" fill="#d4d4d4"/><circle cx="719.6" cy="243.0" r="1.5" fill="#d4d4d4"/><circle cx="713.7" cy="243.5" r="1.1" fill="#d4d4d4"/><circle cx="766.0" cy="261.2" r="1.9" fill="#d4d4d4"/><circle cx="762.3" cy="263.2" r="1.2" fill="#d4d4d4"/></g><line x1="686" y1="212" x2="594" y2="212" stroke="#4343cc" stroke-width="2" stroke-dasharray="8 8" stroke-dashoffset="8"/><line x1="702" y1="212" x2="909" y2="212" stroke="#4343cc" stroke-width="2" stroke-dasharray="8 8" stroke-dashoffset="8"/><line x1="694" y1="204" x2="694" y2="34" stroke="#4343cc" stroke-width="2" stroke-dasharray="8 8" stroke-dashoffset="8"/><line x1="694" y1="220" x2="694" y2="389" stroke="#4343cc" stroke-width="2" stroke-dasharray="8 8" stroke-dashoffset="8"/><path d="M686,212 H702 M694,204 V220" stroke="#5a5aee" stroke-width="2" fill="none"/><text x="576.5" y="68.7" textLength="81" lengthAdjust="spacingAndGlyphs" font-size="11.7" fill="#50c000" font-family='"Liberation Sans", sans-serif' >norm_minmax</text><text x="746.4" y="68" textLength="8.5" lengthAdjust="spacingAndGlyphs" font-size="12.7" font-weight="700" fill="#f7b900" font-family='"Liberation Serif", serif' >S</text><text x="576.4" y="216" textLength="11.0" lengthAdjust="spacingAndGlyphs" font-size="12.7" font-weight="700" fill="#f7b900" font-family='"Liberation Serif", serif' >A</text><text x="915.4" y="216" textLength="9.3" lengthAdjust="spacingAndGlyphs" font-size="12.7" font-weight="700" fill="#f7b900" font-family='"Liberation Serif", serif' >P</text><text x="745.9" y="364" textLength="10.4" lengthAdjust="spacingAndGlyphs" font-size="13.4" font-weight="700" fill="#f7b900" font-family='"Liberation Mono", monospace' >I</text><line x1="803.5" y1="359.5" x2="926.7" y2="359.5" stroke="#50c000" stroke-width="2" /><line x1="803.5" y1="354.0" x2="803.5" y2="365.0" stroke="#50c000" stroke-width="2" /><line x1="926.7" y1="354.0" x2="926.7" y2="365.0" stroke="#50c000" stroke-width="2" /><text x="842.5" y="353.5" textLength="34" lengthAdjust="spacingAndGlyphs" font-size="12" fill="#50c000" font-family='"Liberation Sans", sans-serif' >10 cm</text></g><g transform="translate(936,57)"><rect x=".5" y=".5" width="12" height="12" fill="#fff" stroke="#5a5a5a"/><rect x="0" y="0" width="13" height="2.5" fill="#777"/><path d="M13.5,1 V13.5 H1" stroke="#9a9a9a" fill="none"/><text x="3.1" y="11.1" textLength="6.9" lengthAdjust="spacingAndGlyphs" font-size="9.8" fill="#4c4c4c" font-family='"Liberation Sans", sans-serif' >S</text></g><g transform="translate(937.5,81.5)"><path d="M1,2 H3 L3.6,0.6 H6.6 L7.2,2 H9.2 Q10,2 10,2.8 V7.4 Q10,8.2 9.2,8.2 H1 Q.2,8.2 .2,7.4 V2.8 Q.2,2 1,2Z" fill="#fff" stroke="#111" stroke-width="1.1"/><circle cx="5.1" cy="5" r="1.9" fill="#fff" stroke="#222" stroke-width="1.2"/></g><rect x="936" y="98" width="14" height="271" fill="#e6e6e6" /><line x1="936.5" y1="98" x2="936.5" y2="369" stroke="#c3c3c3" stroke-width="1" /><rect x="937" y="98" width="13" height="13" fill="#fbfbfb" /><line x1="937" y1="111.5" x2="950" y2="111.5" stroke="#c9c9c9" stroke-width="1" /><path d="M939.5,106.5 L947.5,106.5 L943.5,102.5Z" fill="#555"/><rect x="937" y="356" width="13" height="13" fill="#fbfbfb" /><line x1="937" y1="355.5" x2="950" y2="355.5" stroke="#c9c9c9" stroke-width="1" /><path d="M939.5,360.5 L947.5,360.5 L943.5,364.5Z" fill="#555"/><rect x="937" y="207" width="13" height="26.30000000000001" fill="url(#thumbL)" /><line x1="937" y1="206.5" x2="950" y2="206.5" stroke="#c9c9c9" stroke-width="1" /><line x1="937" y1="233.8" x2="950" y2="233.8" stroke="#c9c9c9" stroke-width="1" /><rect x="795.5" y="371.5" width="70" height="19" fill="url(#btnL)" stroke="#b4b4b4" stroke-width="1" rx="3" /><text x="802" y="385" textLength="57" lengthAdjust="spacingAndGlyphs" font-size="12.6" fill="#000" font-family='"Liberation Sans", sans-serif' >zoom to fit</text><text x="890.5" y="385" textLength="52.5" lengthAdjust="spacingAndGlyphs" font-size="11.8" fill="#000" font-family='"Liberation Sans", sans-serif' >113 of 256</text><clipPath id="cvLc"><rect x="572" y="395" width="359" height="314"/></clipPath><rect x="571" y="394" width="361" height="316" fill="#fff" /><rect x="572" y="395" width="359" height="314" fill="#000" /><g clip-path="url(#cvLc)"><g opacity="1.0"><clipPath id="coL"><path d="M695.0,560.7C694.6,556.5 694.8,550.8 695.9,545.3C697.1,539.9 699.0,533.4 701.7,528.0C704.4,522.6 708.3,517.1 712.3,513.0C716.3,508.9 721.2,505.7 725.7,503.4C730.2,501.2 735.0,499.9 739.2,499.6C743.3,499.3 747.2,501.5 750.7,501.5C754.2,501.5 756.4,499.8 760.3,499.6C764.1,499.4 769.2,499.0 773.7,500.6C778.2,502.1 783.0,505.5 787.2,508.8C791.3,512.1 795.3,516.2 798.7,520.3C802.1,524.5 805.1,529.3 807.3,533.8C809.6,538.3 811.3,542.7 812.1,547.2C813.0,551.7 813.8,557.3 812.5,560.7C811.2,564.1 807.7,566.6 804.5,567.6C801.2,568.6 796.8,566.2 792.9,566.8C789.1,567.5 784.9,569.3 781.4,571.4C777.9,573.6 774.5,577.2 771.8,579.9C769.1,582.6 767.2,585.0 765.1,587.6C763.0,590.1 761.6,593.8 759.3,595.3C757.1,596.7 754.0,596.7 751.6,596.4C749.3,596.1 746.7,595.8 745.3,593.7C743.9,591.7 745.0,587.0 743.4,584.1C741.8,581.2 738.6,578.7 735.7,576.4C732.7,574.2 729.3,571.8 725.7,570.7C722.1,569.5 717.6,569.1 714.2,569.5C710.7,570.0 707.6,573.2 705.0,573.4C702.3,573.5 699.7,572.4 698.0,570.3C696.4,568.2 695.3,564.8 695.0,560.7Z"/></clipPath><filter id="tcoL" color-interpolation-filters="sRGB" filterUnits="userSpaceOnUse" x="683" y="488" width="142" height="121"><feTurbulence type="turbulence" baseFrequency="0.095" numOctaves="1" seed="3" result="t"/><feColorMatrix in="t" type="matrix" values="0 0 0 1 0  0 0 0 1 0  0 0 0 1 0  0 0 0 0 1" result="g0"/><feGaussianBlur in="g0" stdDeviation="0.75" result="g"/><feComponentTransfer in="g"><feFuncR type="table" tableValues="0.08 0.33 0.45 0.52 0.56 0.57 0.57 0.57 0.57 0.57 0.57"/><feFuncG type="table" tableValues="0.08 0.33 0.45 0.52 0.56 0.57 0.57 0.57 0.57 0.57 0.57"/><feFuncB type="table" tableValues="0.08 0.33 0.45 0.52 0.56 0.57 0.57 0.57 0.57 0.57 0.57"/></feComponentTransfer></filter><filter id="fcoL" color-interpolation-filters="sRGB" filterUnits="userSpaceOnUse" x="683" y="488" width="142" height="121"><feGaussianBlur stdDeviation="0.6"/></filter><filter id="wcoL" color-interpolation-filters="sRGB" filterUnits="userSpaceOnUse" x="683" y="488" width="142" height="121"><feGaussianBlur stdDeviation="5"/></filter><g filter="url(#fcoL)"><g clip-path="url(#coL)"><rect x="683" y="488" width="142" height="121" filter="url(#tcoL)"/><path d="M753.0,548.0C753.0,548.0 753.0,548.0 753.0,548.0C753.0,548.0 753.0,548.0 753.0,548.0C753.0,548.0 753.0,548.0 753.0,548.0C753.0,548.0 753.0,548.0 753.0,548.0C753.0,548.0 753.0,548.0 753.0,548.0C753.0,548.0 753.0,548.0 753.0,548.0C753.0,548.0 753.0,548.0 753.0,548.0C753.0,548.0 753.0,548.0 753.0,548.0C753.0,548.0 753.0,548.0 753.0,548.0C753.0,548.0 753.0,548.0 753.0,548.0C753.0,548.0 753.0,548.0 753.0,548.0C753.0,548.0 753.0,548.0 753.0,548.0C753.0,548.0 753.0,548.0 753.0,548.0C753.0,548.0 753.0,548.0 753.0,548.0C753.0,548.0 753.0,548.0 753.0,548.0C753.0,548.0 753.0,548.0 753.0,548.0C753.0,548.0 753.0,548.0 753.0,548.0C753.0,548.0 753.0,548.0 753.0,548.0C753.0,548.0 753.0,548.0 753.0,548.0C753.0,548.0 753.0,548.0 753.0,548.0C753.0,548.0 753.0,548.0 753.0,548.0C753.0,548.0 753.0,548.0 753.0,548.0C753.0,548.0 753.0,548.0 753.0,548.0C753.0,548.0 753.0,548.0 753.0,548.0C753.0,548.0 753.0,548.0 753.0,548.0C753.0,548.0 753.0,548.0 753.0,548.0C753.0,548.0 753.0,548.0 753.0,548.0C753.0,548.0 753.0,548.0 753.0,548.0Z" fill="#8f8f8f" opacity="0" filter="url(#wcoL)"/><filter id="cosL" x="-30%" y="-30%" width="160%" height="160%"><feGaussianBlur stdDeviation="1.0"/></filter><filter id="cos2L" x="-30%" y="-30%" width="160%" height="160%"><feGaussianBlur stdDeviation="2.5"/></filter><g filter="url(#cos2L)" fill="#8f8f8f"><path d="M718.0,543.4C719.5,539.9 724.4,536.7 727.6,535.7C730.8,534.7 735.0,535.4 737.2,537.6C739.5,539.9 740.8,545.3 741.1,549.2C741.4,553.0 741.4,558.4 739.2,560.7C736.9,562.9 731.0,563.2 727.6,562.6C724.3,562.0 720.6,560.0 719.0,556.8C717.4,553.6 716.6,546.9 718.0,543.4Z"/><path d="M769.9,537.6C772.0,535.7 776.3,534.7 779.5,535.7C782.7,536.7 787.8,539.9 789.1,543.4C790.4,546.9 789.1,553.6 787.2,556.8C785.3,560.0 780.6,562.6 777.6,562.6C774.5,562.6 770.7,559.4 768.9,556.8C767.2,554.3 766.8,550.4 767.0,547.2C767.2,544.0 767.8,539.5 769.9,537.6Z"/></g><g filter="url(#cosL)"><path d="M751.6,501.1C751.5,504.0 750.5,512.3 750.7,518.4C750.8,524.5 752.3,531.2 752.6,537.6C752.9,544.0 752.2,551.1 752.2,556.8C752.2,562.6 752.6,565.8 752.6,572.2C752.6,578.6 752.3,591.4 752.2,595.3" stroke="#4c4c4c" stroke-width="2.2" fill="none"/><path d="M741.5,525.7C742.9,522.8 747.3,523.8 750.7,523.8C754.1,523.8 759.2,523.4 761.8,525.7C764.5,528.0 766.1,533.5 766.6,537.6C767.1,541.8 766.4,547.7 764.7,550.7C763.0,553.7 759.4,555.0 756.4,555.5C753.5,556.0 749.7,555.9 747.2,553.6C744.8,551.2 742.8,546.1 741.8,541.5C740.9,536.8 740.0,528.7 741.5,525.7Z" fill="#5e5e5e"/><path d="M745.9,537.6C746.4,534.4 749.1,530.3 750.7,530.3C752.3,530.3 754.8,534.6 755.5,537.6C756.1,540.7 755.8,546.7 754.5,548.8C753.2,550.8 749.2,551.6 747.8,549.7C746.4,547.9 745.4,540.9 745.9,537.6Z" fill="#494949"/><path d="M760.3,530.3C760.9,531.5 763.5,534.8 764.1,537.6C764.7,540.4 763.8,545.6 763.7,547.2" stroke="#868686" stroke-width="2.2" fill="none"/><path d="M742.0,557.2C743.5,557.7 747.6,560.1 750.7,560.1C753.7,560.1 758.7,557.7 760.3,557.2" stroke="#464646" stroke-width="2.6" fill="none"/><path d="M744.9,564.9C746.2,565.8 749.9,570.3 752.6,570.3C755.3,570.3 759.8,565.8 761.2,564.9" stroke="#4a4a4a" stroke-width="2.2" fill="none"/><path d="M744.0,583.7C745.0,581.7 748.3,581.6 751.6,581.8C755.0,582.0 762.8,582.4 764.1,584.7C765.4,586.9 761.4,593.3 759.3,595.3C757.2,597.2 754.0,596.7 751.6,596.4C749.3,596.1 746.6,595.8 745.3,593.7C744.0,591.6 742.9,585.7 744.0,583.7Z" fill="#505050"/><path d="M746.5,584.7C746.5,585.6 746.8,588.7 746.8,590.4C746.8,592.2 746.5,594.5 746.5,595.3" stroke="#303030" stroke-width="1.2" fill="none"/><path d="M749.3,584.7C749.4,585.6 749.7,588.7 749.7,590.4C749.7,592.2 749.4,594.5 749.3,595.3" stroke="#303030" stroke-width="1.2" fill="none"/><path d="M752.2,584.7C752.3,585.6 752.6,588.7 752.6,590.4C752.6,592.2 752.3,594.5 752.2,595.3" stroke="#303030" stroke-width="1.2" fill="none"/><path d="M755.1,584.7C755.2,585.6 755.5,588.7 755.5,590.4C755.5,592.2 755.2,594.5 755.1,595.3" stroke="#303030" stroke-width="1.2" fill="none"/><path d="M758.0,584.7C758.0,585.6 758.4,588.7 758.4,590.4C758.4,592.2 758.0,594.5 758.0,595.3" stroke="#303030" stroke-width="1.2" fill="none"/></g><g><path d="M693.5,553.1 Q699.5,552.9 705.4,554.0" stroke="#626262" stroke-width="6.2" fill="none" stroke-linecap="round"/><path d="M695.7,539.7 Q701.8,540.1 707.0,543.5" stroke="#626262" stroke-width="6.2" fill="none" stroke-linecap="round"/><path d="M699.9,527.4 Q706.5,532.7 714.2,536.4" stroke="#626262" stroke-width="6.2" fill="none" stroke-linecap="round"/><path d="M708.5,515.0 Q713.8,520.0 718.4,525.7" stroke="#626262" stroke-width="6.2" fill="none" stroke-linecap="round"/><path d="M716.0,507.9 Q716.7,514.1 721.9,517.4" stroke="#626262" stroke-width="6.2" fill="none" stroke-linecap="round"/><path d="M727.4,500.9 Q730.4,507.1 731.9,513.8" stroke="#626262" stroke-width="6.2" fill="none" stroke-linecap="round"/><path d="M739.9,497.8 Q740.1,504.2 741.4,510.5" stroke="#626262" stroke-width="6.2" fill="none" stroke-linecap="round"/><path d="M693.5,553.1 Q698.5,552.8 703.4,553.8" stroke="#161616" stroke-width="2.9" fill="none" stroke-linecap="round"/><path d="M695.7,539.7 Q700.9,539.8 705.1,542.9" stroke="#161616" stroke-width="3.0" fill="none" stroke-linecap="round"/><path d="M699.9,527.4 Q705.7,532.2 712.5,535.3" stroke="#161616" stroke-width="2.3" fill="none" stroke-linecap="round"/><path d="M708.5,515.0 Q713.1,519.3 717.0,524.3" stroke="#161616" stroke-width="3.2" fill="none" stroke-linecap="round"/><path d="M716.0,507.9 Q716.2,513.2 720.9,515.7" stroke="#161616" stroke-width="2.6" fill="none" stroke-linecap="round"/><path d="M727.4,500.9 Q730.1,506.1 731.2,511.9" stroke="#161616" stroke-width="3.2" fill="none" stroke-linecap="round"/><path d="M739.9,497.8 Q740.0,503.2 741.2,508.5" stroke="#161616" stroke-width="2.8" fill="none" stroke-linecap="round"/></g><g><path d="M759.5,497.8 Q760.7,504.1 759.7,510.5" stroke="#626262" stroke-width="6.2" fill="none" stroke-linecap="round"/><path d="M775.4,499.3 Q775.6,508.0 771.1,515.5" stroke="#626262" stroke-width="6.2" fill="none" stroke-linecap="round"/><path d="M788.7,507.6 Q782.6,512.9 781.1,520.8" stroke="#626262" stroke-width="6.2" fill="none" stroke-linecap="round"/><path d="M796.4,515.2 Q791.6,518.4 789.2,523.5" stroke="#626262" stroke-width="6.2" fill="none" stroke-linecap="round"/><path d="M803.5,524.2 Q795.6,527.6 790.1,534.3" stroke="#626262" stroke-width="6.2" fill="none" stroke-linecap="round"/><path d="M812.2,541.4 Q806.8,545.6 800.1,545.0" stroke="#626262" stroke-width="6.2" fill="none" stroke-linecap="round"/><path d="M814.4,554.9 Q808.5,557.1 802.5,555.3" stroke="#626262" stroke-width="6.2" fill="none" stroke-linecap="round"/><path d="M759.5,497.8 Q760.7,503.1 759.6,508.5" stroke="#161616" stroke-width="3.1" fill="none" stroke-linecap="round"/><path d="M775.4,499.3 Q775.8,507.1 771.6,513.6" stroke="#161616" stroke-width="2.7" fill="none" stroke-linecap="round"/><path d="M788.7,507.6 Q783.1,512.0 782.1,519.0" stroke="#161616" stroke-width="3.1" fill="none" stroke-linecap="round"/><path d="M796.4,515.2 Q792.3,517.6 790.5,522.0" stroke="#161616" stroke-width="2.3" fill="none" stroke-linecap="round"/><path d="M803.5,524.2 Q796.4,527.0 791.7,533.1" stroke="#161616" stroke-width="3.1" fill="none" stroke-linecap="round"/><path d="M812.2,541.4 Q807.8,545.3 802.0,544.4" stroke="#161616" stroke-width="2.3" fill="none" stroke-linecap="round"/><path d="M814.4,554.9 Q809.5,557.1 804.5,555.2" stroke="#161616" stroke-width="2.2" fill="none" stroke-linecap="round"/></g><path d="M695.0,560.7C694.6,556.5 694.8,550.8 695.9,545.3C697.1,539.9 699.0,533.4 701.7,528.0C704.4,522.6 708.3,517.1 712.3,513.0C716.3,508.9 721.2,505.7 725.7,503.4C730.2,501.2 735.0,499.9 739.2,499.6C743.3,499.3 747.2,501.5 750.7,501.5C754.2,501.5 756.4,499.8 760.3,499.6C764.1,499.4 769.2,499.0 773.7,500.6C778.2,502.1 783.0,505.5 787.2,508.8C791.3,512.1 795.3,516.2 798.7,520.3C802.1,524.5 805.1,529.3 807.3,533.8C809.6,538.3 811.3,542.7 812.1,547.2C813.0,551.7 813.8,557.3 812.5,560.7C811.2,564.1 807.7,566.6 804.5,567.6C801.2,568.6 796.8,566.2 792.9,566.8C789.1,567.5 784.9,569.3 781.4,571.4C777.9,573.6 774.5,577.2 771.8,579.9C769.1,582.6 767.2,585.0 765.1,587.6C763.0,590.1 761.6,593.8 759.3,595.3C757.1,596.7 754.0,596.7 751.6,596.4C749.3,596.1 746.7,595.8 745.3,593.7C743.9,591.7 745.0,587.0 743.4,584.1C741.8,581.2 738.6,578.7 735.7,576.4C732.7,574.2 729.3,571.8 725.7,570.7C722.1,569.5 717.6,569.1 714.2,569.5C710.7,570.0 707.6,573.2 705.0,573.4C702.3,573.5 699.7,572.4 698.0,570.3C696.4,568.2 695.3,564.8 695.0,560.7Z" fill="none" stroke="#000" stroke-opacity="0.3" stroke-width="16" filter="url(#wcoL)"/><path d="M695.0,560.7C694.6,556.5 694.8,550.8 695.9,545.3C697.1,539.9 699.0,533.4 701.7,528.0C704.4,522.6 708.3,517.1 712.3,513.0C716.3,508.9 721.2,505.7 725.7,503.4C730.2,501.2 735.0,499.9 739.2,499.6C743.3,499.3 747.2,501.5 750.7,501.5C754.2,501.5 756.4,499.8 760.3,499.6C764.1,499.4 769.2,499.0 773.7,500.6C778.2,502.1 783.0,505.5 787.2,508.8C791.3,512.1 795.3,516.2 798.7,520.3C802.1,524.5 805.1,529.3 807.3,533.8C809.6,538.3 811.3,542.7 812.1,547.2C813.0,551.7 813.8,557.3 812.5,560.7C811.2,564.1 807.7,566.6 804.5,567.6C801.2,568.6 796.8,566.2 792.9,566.8C789.1,567.5 784.9,569.3 781.4,571.4C777.9,573.6 774.5,577.2 771.8,579.9C769.1,582.6 767.2,585.0 765.1,587.6C763.0,590.1 761.6,593.8 759.3,595.3C757.1,596.7 754.0,596.7 751.6,596.4C749.3,596.1 746.7,595.8 745.3,593.7C743.9,591.7 745.0,587.0 743.4,584.1C741.8,581.2 738.6,578.7 735.7,576.4C732.7,574.2 729.3,571.8 725.7,570.7C722.1,569.5 717.6,569.1 714.2,569.5C710.7,570.0 707.6,573.2 705.0,573.4C702.3,573.5 699.7,572.4 698.0,570.3C696.4,568.2 695.3,564.8 695.0,560.7Z" fill="none" stroke="#000" stroke-opacity=".6" stroke-width="3.5"/></g></g></g><line x1="724.5" y1="552.5" x2="596" y2="552.5" stroke="#4343cc" stroke-width="2" stroke-dasharray="8 8" stroke-dashoffset="8"/><line x1="740.5" y1="552.5" x2="904" y2="552.5" stroke="#4343cc" stroke-width="2" stroke-dasharray="8 8" stroke-dashoffset="8"/><line x1="732.5" y1="544.5" x2="732.5" y2="375" stroke="#4343cc" stroke-width="2" stroke-dasharray="8 8" stroke-dashoffset="8"/><line x1="732.5" y1="560.5" x2="732.5" y2="729" stroke="#4343cc" stroke-width="2" stroke-dasharray="8 8" stroke-dashoffset="8"/><path d="M724.5,552.5 H740.5 M732.5,544.5 V560.5" stroke="#5a5aee" stroke-width="2" fill="none"/><text x="576.5" y="409.7" textLength="81" lengthAdjust="spacingAndGlyphs" font-size="11.7" fill="#50c000" font-family='"Liberation Sans", sans-serif' >norm_minmax</text><text x="746.4" y="409" textLength="8.5" lengthAdjust="spacingAndGlyphs" font-size="12.7" font-weight="700" fill="#f7b900" font-family='"Liberation Serif", serif' >S</text><text x="576.4" y="556" textLength="11.0" lengthAdjust="spacingAndGlyphs" font-size="12.7" font-weight="700" fill="#f7b900" font-family='"Liberation Serif", serif' >R</text><text x="915.4" y="556" textLength="10.2" lengthAdjust="spacingAndGlyphs" font-size="12.7" font-weight="700" fill="#f7b900" font-family='"Liberation Serif", serif' >L</text><text x="745.9" y="704" textLength="10.4" lengthAdjust="spacingAndGlyphs" font-size="13.4" font-weight="700" fill="#f7b900" font-family='"Liberation Mono", monospace' >I</text><line x1="803.5" y1="700.5" x2="926.7" y2="700.5" stroke="#50c000" stroke-width="2" /><line x1="803.5" y1="695.0" x2="803.5" y2="706.0" stroke="#50c000" stroke-width="2" /><line x1="926.7" y1="695.0" x2="926.7" y2="706.0" stroke="#50c000" stroke-width="2" /><text x="842.5" y="694.5" textLength="34" lengthAdjust="spacingAndGlyphs" font-size="12" fill="#50c000" font-family='"Liberation Sans", sans-serif' >10 cm</text></g><g transform="translate(936,398)"><rect x=".5" y=".5" width="12" height="12" fill="#fff" stroke="#5a5a5a"/><rect x="0" y="0" width="13" height="2.5" fill="#777"/><path d="M13.5,1 V13.5 H1" stroke="#9a9a9a" fill="none"/><text x="3.1" y="11.1" textLength="6.9" lengthAdjust="spacingAndGlyphs" font-size="9.8" fill="#4c4c4c" font-family='"Liberation Sans", sans-serif' >C</text></g><g transform="translate(937.5,422.5)"><path d="M1,2 H3 L3.6,0.6 H6.6 L7.2,2 H9.2 Q10,2 10,2.8 V7.4 Q10,8.2 9.2,8.2 H1 Q.2,8.2 .2,7.4 V2.8 Q.2,2 1,2Z" fill="#fff" stroke="#111" stroke-width="1.1"/><circle cx="5.1" cy="5" r="1.9" fill="#fff" stroke="#222" stroke-width="1.2"/></g><rect x="936" y="439" width="14" height="270" fill="#e6e6e6" /><line x1="936.5" y1="439" x2="936.5" y2="709" stroke="#c3c3c3" stroke-width="1" /><rect x="937" y="439" width="13" height="13" fill="#fbfbfb" /><line x1="937" y1="452.5" x2="950" y2="452.5" stroke="#c9c9c9" stroke-width="1" /><path d="M939.5,447.5 L947.5,447.5 L943.5,443.5Z" fill="#555"/><rect x="937" y="696" width="13" height="13" fill="#fbfbfb" /><line x1="937" y1="695.5" x2="950" y2="695.5" stroke="#c9c9c9" stroke-width="1" /><path d="M939.5,700.5 L947.5,700.5 L943.5,704.5Z" fill="#555"/><rect x="937" y="600" width="13" height="26.5" fill="url(#thumbL)" /><line x1="937" y1="599.5" x2="950" y2="599.5" stroke="#c9c9c9" stroke-width="1" /><line x1="937" y1="627.0" x2="950" y2="627.0" stroke="#c9c9c9" stroke-width="1" /><rect x="795.5" y="712.5" width="70" height="19" fill="url(#btnL)" stroke="#b4b4b4" stroke-width="1" rx="3" /><text x="802" y="726" textLength="57" lengthAdjust="spacingAndGlyphs" font-size="12.6" fill="#000" font-family='"Liberation Sans", sans-serif' >zoom to fit</text><text x="890.5" y="726" textLength="52.5" lengthAdjust="spacingAndGlyphs" font-size="11.8" fill="#000" font-family='"Liberation Sans", sans-serif' >175 of 256</text><rect x="186" y="394" width="383" height="316" fill="#fff" /><rect x="187" y="395" width="381" height="314" fill="#000" /><line x1="377.5" y1="465" x2="377.5" y2="637" stroke="#4a4ad8" stroke-width="1.2" /><line x1="322" y1="551.6" x2="496" y2="551.6" stroke="#4848d4" stroke-width="1.9" /><rect x="196.5" y="711.5" width="50" height="19" fill="url(#btnL)" stroke="#b4b4b4" stroke-width="1" rx="3" /><text x="203" y="725" textLength="36" lengthAdjust="spacingAndGlyphs" font-size="12.6" fill="#000" font-family='"Liberation Sans", sans-serif' >update</text><rect x="478.5" y="714.5" width="5" height="4.4" fill="#5c5c5c"/><rect x="478.5" y="718.9" width="5" height="4.2" fill="#8e8e8e"/><rect x="478.5" y="723.1" width="5" height="4.2" fill="#d0d0d0"/><text x="471" y="718.4" textLength="6" lengthAdjust="spacingAndGlyphs" font-size="4.6" fill="#8a8a8a" font-family='"Liberation Sans", sans-serif' >2.0</text><text x="471.4" y="727.2" textLength="5.6" lengthAdjust="spacingAndGlyphs" font-size="4.6" fill="#8a8a8a" font-family='"Liberation Sans", sans-serif' >1.0</text><g transform="translate(494,714)"><rect x=".5" y=".5" width="12" height="12" fill="#fff" stroke="#555"/><rect x="0" y="0" width="13" height="2.6" fill="#6f6f6f"/><path d="M13.5,1 V13.5 H1" stroke="#a8a8a8" fill="none"/><text x="2" y="11.2" textLength="9" lengthAdjust="spacingAndGlyphs" font-size="7.6" fill="#666" font-family='"Liberation Sans", sans-serif' >3D</text></g><g transform="translate(519.8,716.2)"><path d="M1,2 H3 L3.6,0.6 H6.6 L7.2,2 H9.2 Q10,2 10,2.8 V7.4 Q10,8.2 9.2,8.2 H1 Q.2,8.2 .2,7.4 V2.8 Q.2,2 1,2Z" fill="#fff" stroke="#111" stroke-width="1.1"/><circle cx="5.1" cy="5" r="1.9" fill="#fff" stroke="#222" stroke-width="1.2"/></g><path d="M544.2,719.2 L548.9,722.8 L553.6,719.2" stroke="#5d5d78" stroke-width="2.2" fill="none" stroke-linejoin="miter"/><line x1="957.5" y1="0" x2="957.5" y2="729" stroke="#6b6b6b" stroke-width="1" />
</svg>
<div style="position:absolute;left:958px;top:0;width:15px;height:729px;background:linear-gradient(90deg,rgba(0,0,0,.30),rgba(0,0,0,.12) 35%,rgba(0,0,0,0))"></div>
</body></html>
